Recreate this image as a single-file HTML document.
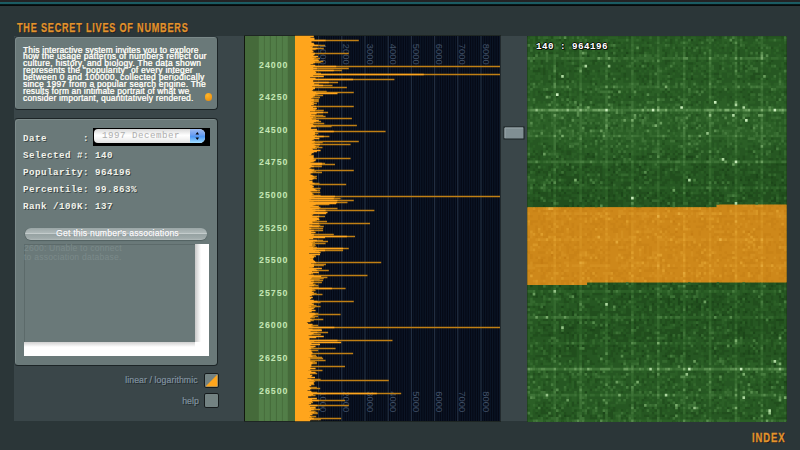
<!DOCTYPE html>
<html><head><meta charset="utf-8"><title>The Secret Lives of Numbers</title>
<style>
html,body{margin:0;padding:0}
body{width:800px;height:450px;overflow:hidden;background:#2b3638;position:relative;font-family:"Liberation Sans",sans-serif}
.abs{position:absolute}
#top1{left:0;top:0;width:800px;height:6.2px;background:linear-gradient(#222325 0,#242325 1.6px,#1d5e65 2.1px,#19585f 4px,#03090a 4.6px,#000 5.2px,#0a0f10 5.7px,#2b3638 6.2px)}
#main{left:14px;top:36px;width:772px;height:385px;background:#3a4649}
.title{color:#e3932c;font-weight:bold;font-size:13.2px;letter-spacing:1.15px;white-space:nowrap;transform-origin:0 0;text-shadow:1px 1px 0 #191c1d;line-height:1}
#title{left:17px;top:20.8px;transform:scaleX(.69);-webkit-text-stroke:.25px #e3932c}
#index{left:752px;top:432px;font-size:12.2px;transform:scaleX(.775);-webkit-text-stroke:.3px #e3932c}
.panel{background:#6a7979;border:1px solid #1c2426;border-left-color:#2c373a;border-radius:4px;box-sizing:border-box;box-shadow:inset 1px 1px 0 #7b8989}
#p1{left:14px;top:36px;width:204px;height:74px;border-top-color:#2c373a}
#p2{left:14px;top:118px;width:204px;height:248px}
#intro{left:23px;top:46.6px;width:195px;color:#fff;font-size:8.3px;line-height:6.86px;letter-spacing:.25px;white-space:nowrap;-webkit-text-stroke:.2px #fff;text-shadow:.4px .4px .3px #c8c4a8}
#dot{left:204.5px;top:93.2px;width:7.5px;height:7.5px;border-radius:50%;background:radial-gradient(circle at 35% 30%,#ffb62a,#f29a14 60%,#d98410)}
.mono{font-family:"Liberation Mono",monospace;font-weight:bold;font-size:9.2px;letter-spacing:.48px;color:#f2f2ea;white-space:pre;line-height:10px;text-shadow:1px 1px 0 #3c4848}
#sel{left:93px;top:128px;width:117px;height:17.5px;background:#000}
#selin{left:1px;top:1px;width:111px;height:14px;border-radius:4px 5.5px 5.5px 4px;background:linear-gradient(#d8d8d8,#fff 45%,#f4f4f4 70%,#e0e0e0);overflow:hidden}
#selcap{right:0;top:0;width:15px;height:14px;background:linear-gradient(#a0bdf0,#6f9ff0 40%,#4f98f4 55%,#8fd0ff 90%,#a8e0ff)}
#seltx{left:8px;top:2px;font-family:"Liberation Mono",monospace;font-size:9.2px;letter-spacing:.48px;line-height:10px;color:#adadad;white-space:pre}
#btn{left:25px;top:227.5px;width:182px;height:12px;border-radius:6px;background:linear-gradient(#9aa6a6,#aeb8b8 38%,#c4cccc 46%,#97a3a3 54%,#a0abab 85%,#b2bcbc);box-shadow:0 .8px 1px #4c5a5a,-.5px 0 .5px #556363;text-align:center;color:#fff;font-size:8.6px;line-height:11.5px;letter-spacing:.2px;-webkit-text-stroke:.25px #fff;text-shadow:0 0 1px #667;padding-left:3px;box-sizing:border-box}
#ta{left:24px;top:244px;width:185px;height:112px;background:#fff;box-sizing:border-box}
#tain{left:0;top:0;width:171px;height:98px;background:#6a7979;box-shadow:inset 1px 1px 0 #5c6a6a;color:#7b8a8a;font-size:8.6px;line-height:9px;letter-spacing:.2px;white-space:pre;overflow:hidden}
#tash1{left:171px;top:0;width:6px;height:98px;background:linear-gradient(90deg,#c8c8c8,#fff)}
#tash2{left:0;top:98px;width:171px;height:5px;background:linear-gradient(#d0d0d0,#fff)}
.lbl{color:#8293a0;-webkit-text-stroke:.2px #8293a0;font-size:8.7px;line-height:10px;white-space:nowrap;text-align:right;width:120px;text-shadow:1px 1px 0 #20282a;letter-spacing:.1px}
.cb{width:15px;height:15px;box-sizing:border-box;border:1.3px solid #171c1e;background:#738282;border-radius:2px;overflow:hidden}
svg{position:absolute;left:0;top:0}
.yl{font-family:"Liberation Sans",sans-serif;font-weight:bold;font-size:8.8px;letter-spacing:1.0px;fill:#c4e6b4}
.gl{font-family:"Liberation Sans",sans-serif;font-size:9.3px;letter-spacing:0.05px;fill:#415168}
</style></head><body>
<div class="abs" id="top1"></div>
<div class="abs" id="main"></div>
<div class="abs title" id="title">THE SECRET LIVES OF NUMBERS</div>
<div class="abs panel" id="p1"></div>
<div class="abs" id="intro"><div style="letter-spacing:0.238px">This interactive system invites you to explore</div><div style="letter-spacing:0.320px">how the usage patterns of numbers reflect our</div><div style="letter-spacing:0.331px">culture, history, and biology. The data shown</div><div style="letter-spacing:0.299px">represents the "popularity" of every integer</div><div style="letter-spacing:0.364px">between 0 and 100000, collected periodically</div><div style="letter-spacing:0.315px">since 1997 from a popular search engine. The</div><div style="letter-spacing:0.228px">results form an intimate portrait of what we</div><div style="letter-spacing:0.259px">consider important, quantitatively rendered.</div></div>
<div class="abs" id="dot"></div>
<div class="abs panel" id="p2"></div>
<div class="abs mono" style="left:23px;top:134px">Date      :</div>
<div class="abs mono" style="left:23px;top:151px">Selected #: 140</div>
<div class="abs mono" style="left:23px;top:168px">Popularity: 964196</div>
<div class="abs mono" style="left:23px;top:185px">Percentile: 99.863%</div>
<div class="abs mono" style="left:23px;top:202px">Rank /100K: 137</div>
<div class="abs" id="sel"><div class="abs" id="selin"><div class="abs" id="seltx">1997 December</div><div class="abs" id="selcap"></div>
<svg width="15" height="14" style="left:96px;top:0"><path d="M7.3 3L9.1 5.6H5.5zM7.3 11L9.1 8.4H5.5z" fill="#05050c"/></svg></div></div>
<div class="abs" id="btn">Get this number's associations</div>
<div class="abs" id="ta"><div class="abs" id="tain">2600: Unable to connect
to association database.</div><div class="abs" id="tash1"></div><div class="abs" id="tash2"></div></div>
<div class="abs lbl" style="left:77.7px;top:375px">linear / logarithmic</div>
<div class="abs lbl" style="left:79px;top:395.5px">help</div>
<div class="abs cb" style="left:204px;top:373px"><svg width="13" height="13"><path d="M12.4 0.5V12.4H0.5z" fill="#ffa51c"/></svg></div>
<div class="abs cb" style="left:204px;top:393.3px"></div>

<svg width="800" height="450" viewBox="0 0 800 450">
<rect x="244" y="35.5" width="257" height="386" fill="#12170f"/>
<rect x="245" y="36" width="50" height="385" fill="#456a3a"/>
<path d="M261.35 36V421M267.3 36V421M273.4 36V421M279.4 36V421M285.25 36V421" stroke="#527e48" stroke-width="5.1" fill="none"/>
<rect x="295" y="36" width="205.5" height="385" fill="#050915"/>
<path d="M297.72 36V421M300.04 36V421M302.36 36V421M304.68 36V421M307.00 36V421M309.32 36V421M311.64 36V421M313.96 36V421M316.28 36V421M320.92 36V421M323.24 36V421M325.56 36V421M327.88 36V421M330.20 36V421M332.52 36V421M334.84 36V421M337.16 36V421M339.48 36V421M344.12 36V421M346.44 36V421M348.76 36V421M351.08 36V421M353.40 36V421M355.72 36V421M358.04 36V421M360.36 36V421M362.68 36V421M367.32 36V421M369.64 36V421M371.96 36V421M374.28 36V421M376.60 36V421M378.92 36V421M381.24 36V421M383.56 36V421M385.88 36V421M390.52 36V421M392.84 36V421M395.16 36V421M397.48 36V421M399.80 36V421M402.12 36V421M404.44 36V421M406.76 36V421M409.08 36V421M413.72 36V421M416.04 36V421M418.36 36V421M420.68 36V421M423.00 36V421M425.32 36V421M427.64 36V421M429.96 36V421M432.28 36V421M436.92 36V421M439.24 36V421M441.56 36V421M443.88 36V421M446.20 36V421M448.52 36V421M450.84 36V421M453.16 36V421M455.48 36V421M460.12 36V421M462.44 36V421M464.76 36V421M467.08 36V421M469.40 36V421M471.72 36V421M474.04 36V421M476.36 36V421M478.68 36V421M483.32 36V421M485.64 36V421M487.96 36V421M490.28 36V421M492.60 36V421M494.92 36V421M497.24 36V421M499.56 36V421" stroke="#0c1627" stroke-width="1.1" fill="none"/>
<path d="M318.60 36V421M341.80 36V421M365.00 36V421M388.20 36V421M411.40 36V421M434.60 36V421M457.80 36V421M481.00 36V421" stroke="#212e41" stroke-width="1.3" fill="none"/>
<text transform="translate(320.2 43.8) rotate(90)" class="gl">1000</text>
<text transform="translate(320.2 391.3) rotate(90)" class="gl">1000</text>
<text transform="translate(343.4 43.8) rotate(90)" class="gl">2000</text>
<text transform="translate(343.4 391.3) rotate(90)" class="gl">2000</text>
<text transform="translate(366.6 43.8) rotate(90)" class="gl">3000</text>
<text transform="translate(366.6 391.3) rotate(90)" class="gl">3000</text>
<text transform="translate(389.8 43.8) rotate(90)" class="gl">4000</text>
<text transform="translate(389.8 391.3) rotate(90)" class="gl">4000</text>
<text transform="translate(413.0 43.8) rotate(90)" class="gl">5000</text>
<text transform="translate(413.0 391.3) rotate(90)" class="gl">5000</text>
<text transform="translate(436.2 43.8) rotate(90)" class="gl">6000</text>
<text transform="translate(436.2 391.3) rotate(90)" class="gl">6000</text>
<text transform="translate(459.4 43.8) rotate(90)" class="gl">7000</text>
<text transform="translate(459.4 391.3) rotate(90)" class="gl">7000</text>
<text transform="translate(482.6 43.8) rotate(90)" class="gl">8000</text>
<text transform="translate(482.6 391.3) rotate(90)" class="gl">8000</text>
<path d="M295 40.5H358.8M295 45.5H325M295 46.5H313M295 48.5H323.8M295 49.5H315.7M295 52.5H312.6M295 53.5H348.8M295 57.5H316.2M295 58.5H320M295 59.5H317.9M295 61.5H323.3M295 62.5H320.6M295 66.5H500M295 68.5H348.8M295 70.5H341.9M295 73.5H321M295 74.5H500M295 79.5H394.4M295 82.5H338.1M295 84.5H318.8M295 85.5H332.5M295 87.5H346.9M295 91.5H326.7M295 92.5H353.8M295 94.5H317.7M295 95.5H323.1M295 96.5H314.4M295 97.5H320M295 99.5H318.8M295 100.5H318.8M295 101.5H318.8M295 103.5H316.9M295 106.5H353.8M295 109.5H315.9M295 110.5H323.8M295 112.5H328.1M295 113.5H317.1M295 115.5H323.2M295 116.5H325.6M295 117.5H316.1M295 118.5H351.9M295 119.5H316.1M295 121.5H321.1M295 123.5H324.3M295 125.5H356.9M295 126.5H331.6M295 130.5H317.5M295 131.5H385.6M295 133.5H318.1M295 135.5H316.9M295 136.5H329.4M295 139.5H314.2M295 141.5H358.8M295 142.5H322.7M295 143.5H315.2M295 144.5H350.6M295 145.5H314.9M295 146.5H318.9M295 147.5H322.5M295 148.5H317M295 155.5H313.8M295 158.5H350.6M295 159.5H316.1M295 161.5H314.2M295 163.5H325M295 164.5H335M295 166.5H321.9M295 169.5H314.4M295 170.5H353.8M295 171.5H316.1M295 172.5H322M295 176.5H316.9M295 177.5H315.7M295 178.5H316.9M295 183.5H319.5M295 184.5H346.2M295 188.5H320.6M295 190.5H320M295 192.5H320.3M295 194.5H313.8M295 195.5H320.6M295 196.5H500M295 197.5H314.5M295 198.5H340.6M295 199.5H311.2M295 200.5H353.8M295 201.5H313.6M295 202.5H347.5M295 204.5H329.4M295 205.5H313.6M295 207.5H320.5M295 208.5H337.5M295 209.5H315.5M295 210.5H374.4M295 211.5H315.4M295 214.5H313.3M295 216.5H325M295 217.5H316.9M295 220.5H316.9M295 221.5H327M295 223.5H370M295 225.5H320.3M295 226.5H323.8M295 228.5H323.1M295 230.5H323.1M295 234.5H333.8M295 235.5H314M295 236.5H355M295 240.5H323.1M295 241.5H328M295 242.5H315M295 243.5H325.6M295 244.5H315.1M295 245.5H315.7M295 246.5H314.4M295 247.5H317.1M295 248.5H348.8M295 249.5H316.4M295 250.5H343.1M295 251.5H318.9M295 255.5H315.6M295 256.5H316M295 258.5H313.1M295 262.5H381.2M295 264.5H326M295 265.5H323.8M295 267.5H312.6M295 269.5H316.2M295 270.5H328.8M295 273.5H313.1M295 275.5H367.5M295 277.5H327.4M295 278.5H323.8M295 279.5H319.7M295 280.5H323.1M295 282.5H321.9M295 284.5H315.6M295 285.5H318.4M295 287.5H318.8M295 288.5H345.6M295 289.5H314.5M295 290.5H315.6M295 293.5H316.6M295 294.5H322.5M295 301.5H353.8M295 302.5H320.6M295 305.5H316.5M295 306.5H320.6M295 307.5H315.2M295 313.5H318.3M295 314.5H340.6M295 315.5H314.2M295 316.5H318.1M295 317.5H314.9M295 319.5H323.3M295 320.5H313.8M295 325.5H318.1M295 326.5H313.5M295 327.5H500M295 329.5H321.6M295 332.5H328.1M295 334.5H320.8M295 340.5H392.5M295 341.5H314.2M295 347.5H313.6M295 348.5H335.6M295 350.5H318.1M295 353.5H353.1M295 355.5H316M295 356.5H316.9M295 357.5H322.1M295 358.5H323.1M295 360.5H325.6M295 361.5H315.1M295 362.5H316.9M295 363.5H316.9M295 366.5H345M295 370.5H322.5M295 373.5H317.2M295 379.5H320.6M295 380.5H388.8M295 381.5H315.2M295 384.5H314.4M295 387.5H316.9M295 388.5H320.2M295 392.5H317.3M295 393.5H401.2M295 395.5H315.6M295 400.5H345M295 402.5H313.1M295 405.5H348.8M295 408.5H315.7M295 409.5H320M295 411.5H315.6M295 412.5H317.5M295 413.5H317.8M295 416.5H316.2M295 417.5H312M295 418.5H341.2M295 419.5H320.9" stroke="#c07f14" stroke-width="1.5" fill="none"/>
<path d="M295 36.5H313.8M295 37.5H310.5M295 38.5H314.5M295 39.5H314.5M295 40.5H325.6M295 41.5H311.5M295 42.5H311.5M295 43.5H313.8M295 44.5H314.4M295 45.5H318.1M295 46.5H310.4M295 47.5H312.4M295 48.5H317.5M295 49.5H312.4M295 50.5H312.5M295 51.5H313.5M295 52.5H311.4M295 53.5H315M295 54.5H314.4M295 55.5H313.4M295 56.5H318.1M295 57.5H312.4M295 58.5H314.4M295 59.5H313.4M295 60.5H318.8M295 61.5H314.3M295 62.5H315M295 63.5H313.3M295 64.5H310.6M295 65.5H315.3M295 66.5H336.2M295 67.5H313.3M295 68.5H316.9M295 69.5H313.3M295 70.5H333.8M295 71.5H315.3M295 72.5H316.2M295 73.5H315.3M295 74.5H423.8M295 75.5H313.2M295 76.5H323.8M295 77.5H310.2M295 78.5H315.6M295 79.5H353.1M295 80.5H313.2M295 81.5H313.2M295 82.5H328.8M295 83.5H314.2M295 84.5H313.8M295 85.5H323.1M295 86.5H312.2M295 87.5H315M295 88.5H315M295 89.5H313.2M295 90.5H311.9M295 91.5H313.1M295 92.5H316.2M295 93.5H337.5M295 94.5H315.1M295 95.5H315M295 96.5H313.1M295 97.5H312.5M295 98.5H311.1M295 99.5H313.8M295 100.5H313.8M295 101.5H311.1M295 102.5H313.8M295 103.5H312.1M295 104.5H313.8M295 105.5H311.1M295 106.5H316.2M295 107.5H313M295 108.5H316.9M295 109.5H313M295 110.5H315M295 111.5H310M295 112.5H323.1M295 113.5H316M295 114.5H311.2M295 115.5H315M295 116.5H310M295 117.5H313M295 118.5H311.2M295 119.5H312M295 120.5H318.8M295 121.5H315.9M295 122.5H313.8M295 123.5H309.9M295 124.5H312.9M295 125.5H313.8M295 126.5H315.9M295 127.5H311.2M295 128.5H310.9M295 129.5H316.9M295 130.5H312.9M295 131.5H333.8M295 132.5H314.9M295 133.5H315M295 134.5H314.9M295 135.5H312.9M295 136.5H323.8M295 137.5H314.8M295 138.5H319.4M295 139.5H312.8M295 140.5H311.8M295 141.5H315M295 142.5H313.8M295 143.5H311.8M295 144.5H320M295 145.5H313.8M295 146.5H315.8M295 147.5H315M295 148.5H311.8M295 149.5H312.8M295 150.5H320.6M295 151.5H316.9M295 152.5H313.7M295 153.5H311.7M295 154.5H311.2M295 155.5H309.4M295 156.5H313.7M295 157.5H313.7M295 158.5H313.8M295 159.5H312.7M295 160.5H315.6M295 161.5H312.7M295 162.5H310.6M295 163.5H321.9M295 164.5H321.9M295 165.5H311.7M295 166.5H313.8M295 167.5H310.6M295 168.5H309.4M295 169.5H311.6M295 170.5H313.8M295 171.5H311.6M295 172.5H312.6M295 173.5H310.6M295 174.5H310.6M295 175.5H312.6M295 176.5H313.8M295 177.5H311.6M295 178.5H313.8M295 179.5H312.6M295 180.5H309.4M295 181.5H312.5M295 182.5H312.6M295 183.5H314.5M295 184.5H310M295 185.5H312.5M295 186.5H313.8M295 187.5H312.5M295 188.5H313.8M295 189.5H315.5M295 190.5H316.9M295 191.5H310.5M295 192.5H311.5M295 193.5H312.5M295 194.5H312.5M295 195.5H311.5M295 196.5H335M295 197.5H311.5M295 198.5H333.8M295 199.5H309.4M295 200.5H337.5M295 201.5H309.4M295 202.5H336.9M295 203.5H336.2M295 204.5H315.6M295 205.5H312.4M295 206.5H318.8M295 207.5H310.4M295 208.5H319.4M295 209.5H312.4M295 210.5H325.6M295 211.5H313.4M295 212.5H327.5M295 213.5H326.2M295 214.5H311.3M295 215.5H312.3M295 216.5H319.4M295 217.5H312.3M295 218.5H318.8M295 219.5H319.4M295 220.5H315.3M295 221.5H312.3M295 222.5H312.5M295 223.5H318.8M295 224.5H309.3M295 225.5H312.3M295 226.5H318.8M295 227.5H309.3M295 228.5H311.2M295 229.5H309.2M295 230.5H313.8M295 231.5H311.2M295 232.5H315.6M295 233.5H311.2M295 234.5H313.8M295 235.5H312.2M295 236.5H346.9M295 237.5H325M295 238.5H313.2M295 239.5H309.2M295 240.5H316.9M295 241.5H313.2M295 242.5H311.2M295 243.5H312.5M295 244.5H312.1M295 245.5H312.1M295 246.5H309.4M295 247.5H313.1M295 248.5H343.1M295 249.5H313.1M295 250.5H325M295 251.5H315.1M295 252.5H320.6M295 253.5H309.1M295 254.5H320M295 255.5H312.1M295 256.5H314.1M295 257.5H313.8M295 258.5H310.1M295 259.5H313.1M295 260.5H313.8M295 261.5H315M295 262.5H316.2M295 263.5H311M295 264.5H314M295 265.5H313.8M295 266.5H314M295 267.5H309M295 268.5H321.9M295 269.5H314M295 270.5H317.5M295 271.5H312M295 272.5H318.8M295 273.5H311M295 274.5H308.8M295 275.5H313.8M295 276.5H321.2M295 277.5H311.9M295 278.5H311.2M295 279.5H309.9M295 280.5H313.8M295 281.5H310.9M295 282.5H313.8M295 283.5H312.9M295 284.5H309.4M295 285.5H313.9M295 286.5H309.4M295 287.5H311.9M295 288.5H331.9M295 289.5H311.9M295 290.5H312.5M295 291.5H311.8M295 292.5H313.8M295 293.5H311.8M295 294.5H313.8M295 295.5H311.8M295 296.5H309.8M295 297.5H312.8M295 298.5H311.2M295 299.5H310M295 300.5H313.8M295 301.5H317.5M295 302.5H313.8M295 303.5H311.8M295 304.5H313.8M295 305.5H308.8M295 306.5H311.2M295 307.5H308.7M295 308.5H313.8M295 309.5H311.7M295 310.5H315.6M295 311.5H311.7M295 312.5H309.4M295 313.5H314.7M295 314.5H315.6M295 315.5H312.7M295 316.5H312.5M295 317.5H310.7M295 318.5H310M295 319.5H311.7M295 320.5H310M295 321.5H310.6M295 322.5H306.9M295 323.5H308.1M295 324.5H312.6M295 325.5H311.2M295 326.5H311.6M295 327.5H334.4M295 328.5H308.6M295 329.5H312.6M295 330.5H321.9M295 331.5H310.6M295 332.5H317.5M295 333.5H313.6M295 334.5H311.6M295 335.5H308.6M295 336.5H323.8M295 337.5H316.2M295 338.5H309.5M295 339.5H309.4M295 340.5H337.5M295 341.5H310.5M295 342.5H341.2M295 343.5H311.5M295 344.5H320M295 345.5H310.5M295 346.5H315.6M295 347.5H310.5M295 348.5H311.2M295 349.5H309.5M295 350.5H311.2M295 351.5H311.5M295 352.5H312.4M295 353.5H312.5M295 354.5H311.4M295 355.5H311.4M295 356.5H312.5M295 357.5H308.4M295 358.5H310M295 359.5H310.4M295 360.5H310M295 361.5H310.4M295 362.5H312.5M295 363.5H312.5M295 364.5H311.4M295 365.5H311.4M295 366.5H311.2M295 367.5H310.4M295 368.5H315.6M295 369.5H310.3M295 370.5H308.1M295 371.5H311.3M295 372.5H315.6M295 373.5H310.3M295 374.5H310M295 375.5H312.3M295 376.5H311.3M295 377.5H315M295 378.5H307.5M295 379.5H311.3M295 380.5H313.8M295 381.5H309.3M295 382.5H313.8M295 383.5H313.8M295 384.5H310.6M295 385.5H311.2M295 386.5H309.2M295 387.5H310M295 388.5H311.2M295 389.5H310.2M295 390.5H307.5M295 391.5H311.2M295 392.5H312.2M295 393.5H376.9M295 394.5H313.2M295 395.5H311.2M295 396.5H308.2M295 397.5H308.2M295 398.5H316.9M295 399.5H312.1M295 400.5H318.8M295 401.5H312.1M295 402.5H309.4M295 403.5H311.1M295 404.5H308.8M295 405.5H317.5M295 406.5H310.1M295 407.5H315.6M295 408.5H311.1M295 409.5H313.8M295 410.5H311.1M295 411.5H309.4M295 412.5H314.1M295 413.5H311.1M295 414.5H312.5M295 415.5H310M295 416.5H311.2M295 417.5H309M295 418.5H313.8M295 419.5H311M295 420.5H310" stroke="#ffa51c" stroke-width="1.5" fill="none"/>
<text x="259" y="67.6" class="yl">24000</text>
<text x="259" y="100.2" class="yl">24250</text>
<text x="259" y="132.8" class="yl">24500</text>
<text x="259" y="165.4" class="yl">24750</text>
<text x="259" y="198.0" class="yl">25000</text>
<text x="259" y="230.6" class="yl">25250</text>
<text x="259" y="263.2" class="yl">25500</text>
<text x="259" y="295.8" class="yl">25750</text>
<text x="259" y="328.4" class="yl">26000</text>
<text x="259" y="361.0" class="yl">26250</text>
<text x="259" y="393.6" class="yl">26500</text>
<rect x="500.5" y="36" width="26" height="385" fill="#3a4649"/>
<rect x="504" y="127" width="20" height="12" fill="#808f93" stroke="#182022" stroke-width="1"/>
<path d="M505 138V128H523" stroke="#9aa8ab" stroke-width="1" fill="none"/>
</svg>
<svg width="260" height="386" viewBox="-0.2 -0.1 100.4 149" preserveAspectRatio="none" style="left:526.5px;top:35.8px;width:260px;height:386px">
<rect x="-0.2" y="-0.1" width="100.4" height="149" fill="#141a12"/>
<rect x="0" y="0" width="100" height="148.65" fill="#255c20"/>
<path d="M73 65H100V66H100V95H23V96H0V66H73z" fill="#cc861a"/>
<g stroke-width="1.05" fill="none"><path d="M63 1.5h1M38 6.5h1M23 7.5h1M63 16.5h1M39 23.5h1M23 45.5h1M39 45.5h1M25 46.5h1M44 46.5h1M61 46.5h1M62 46.5h1M63 46.5h1M33 47.5h1M56 47.5h1M69 47.5h1M16 49.5h1M36 49.5h1M45 49.5h1M77 49.5h1M96 49.5h1M98 49.5h1M0 50.5h1M22 50.5h1M43 50.5h1M65 50.5h1M68 50.5h1M16 51.5h1M31 51.5h1M52 51.5h1M75 51.5h1M77 51.5h1M4 52.5h1M33 52.5h1M12 53.5h1M13 53.5h1M44 53.5h1M45 53.5h1M69 53.5h1M76 53.5h1M88 53.5h1M62 54.5h1M88 54.5h1M91 54.5h1M94 54.5h1M98 54.5h1M19 55.5h1M41 55.5h1M61 55.5h1M82 55.5h1M85 55.5h1M9 56.5h1M16 56.5h1M21 56.5h1M32 56.5h1M73 56.5h1M79 56.5h1M94 56.5h1M98 56.5h1M2 57.5h1M15 57.5h1M25 57.5h1M63 57.5h1M83 57.5h1M95 57.5h1M9 59.5h1M13 59.5h1M26 59.5h1M31 59.5h1M69 59.5h1M73 59.5h1M86 59.5h1M94 59.5h1M97 59.5h1M4 60.5h1M14 60.5h1M19 60.5h1M36 60.5h1M46 60.5h1M51 60.5h1M61 60.5h1M12 61.5h1M23 61.5h1M31 61.5h1M33 61.5h1M36 61.5h1M43 61.5h1M49 61.5h1M57 61.5h1M61 61.5h1M62 61.5h1M71 61.5h1M74 61.5h1M75 61.5h1M83 61.5h1M85 61.5h1M86 61.5h1M98 61.5h1M21 62.5h1M29 62.5h1M46 62.5h1M54 62.5h1M95 62.5h1M2 63.5h1M4 63.5h1M22 63.5h1M25 63.5h1M27 63.5h1M32 63.5h1M33 63.5h1M47 63.5h1M52 63.5h1M69 63.5h1M74 63.5h1M81 63.5h1M82 63.5h1M94 63.5h1M95 63.5h1M9 64.5h1M17 64.5h1M51 64.5h1M59 64.5h1M62 64.5h1M79 64.5h1M97 64.5h1M6 65.5h1M14 65.5h1M15 65.5h1M17 65.5h1M19 65.5h1M24 65.5h1M54 65.5h1M68 65.5h1M31 95.5h1M42 95.5h1M43 95.5h1M46 95.5h1M55 95.5h1M71 95.5h1M72 95.5h1M96 95.5h1M1 96.5h1M12 96.5h1M33 96.5h1M46 96.5h1M63 96.5h1M65 96.5h1M72 96.5h1M81 96.5h1M94 96.5h1M16 97.5h1M31 97.5h1M33 97.5h1M48 97.5h1M56 97.5h1M64 97.5h1M93 97.5h1M18 99.5h1M32 99.5h1M37 99.5h1M47 99.5h1M48 99.5h1M84 99.5h1M3 100.5h1M18 100.5h1M23 100.5h1M36 100.5h1M39 100.5h1M69 100.5h1M74 100.5h1M97 100.5h1M39 101.5h1M51 101.5h1M54 101.5h1M56 101.5h1M58 101.5h1M63 101.5h1M65 101.5h1M82 101.5h1M84 101.5h1M98 101.5h1M54 102.5h1M58 102.5h1M59 102.5h1M65 102.5h1M69 102.5h1M71 102.5h1M85 102.5h1M92 102.5h1M48 103.5h1M54 103.5h1M58 103.5h1M63 103.5h1M66 103.5h1M73 103.5h1M75 103.5h1M6 104.5h1M13 104.5h1M35 104.5h1M42 104.5h1M45 104.5h1M61 104.5h1M65 104.5h1M66 104.5h1M69 104.5h1M78 104.5h1M61 105.5h1M66 105.5h1M71 105.5h1M77 105.5h1M17 106.5h1M81 106.5h1M84 106.5h1M7 107.5h1M17 107.5h1M55 107.5h1M72 107.5h1M75 107.5h1M22 109.5h1M24 109.5h1M43 109.5h1M46 109.5h1M56 109.5h1M65 109.5h1M72 109.5h1M91 109.5h1M93 109.5h1M96 109.5h1M97 109.5h1M98 109.5h1M19 110.5h1M39 110.5h1M41 110.5h1M56 110.5h1M69 110.5h1M78 110.5h1M82 110.5h1M84 110.5h1M8 111.5h1M14 111.5h1M31 111.5h1M52 111.5h1M59 111.5h1M65 111.5h1M6 112.5h1M16 112.5h1M17 112.5h1M28 112.5h1M41 112.5h1M82 112.5h1M95 112.5h1M24 113.5h1M25 113.5h1M81 113.5h1M82 113.5h1M98 113.5h1M13 114.5h1M15 114.5h1M31 114.5h1M47 114.5h1M59 114.5h1M81 114.5h1M83 114.5h1M87 114.5h1M95 114.5h1M8 115.5h1M17 115.5h1M32 115.5h1M37 115.5h1M55 115.5h1M66 115.5h1M77 115.5h1M83 115.5h1M96 115.5h1M98 115.5h1M41 116.5h1M59 116.5h1M83 116.5h1M31 117.5h1M43 117.5h1M52 117.5h1M55 117.5h1M9 119.5h1M15 119.5h1M17 119.5h1M19 119.5h1M21 119.5h1M33 119.5h1M75 119.5h1M78 119.5h1M83 119.5h1M87 119.5h1M91 119.5h1M16 120.5h1M35 120.5h1M71 120.5h1M91 120.5h1M12 121.5h1M37 121.5h1M44 121.5h1M72 121.5h1M85 121.5h1M89 121.5h1M59 122.5h1M72 122.5h1M83 122.5h1M85 122.5h1M87 122.5h1M95 122.5h1M98 122.5h1M11 123.5h1M44 123.5h1M53 123.5h1M62 123.5h1M54 124.5h1M95 126.5h1M99 133.5h1M93 134.5h1M71 136.5h1M72 136.5h1M74 136.5h1M22 137.5h1M29 145.5h1M4 146.5h1M14 146.5h1M52 146.5h1M86 147.5h1" stroke="#1c4619"/>
<path d="M3 0.5h1M9 0.5h1M39 0.5h1M53 0.5h1M59 0.5h1M68 0.5h1M74 0.5h1M83 0.5h1M87 0.5h1M92 0.5h1M98 0.5h1M3 1.5h1M7 1.5h1M12 1.5h1M14 1.5h1M27 1.5h1M44 1.5h1M55 1.5h1M66 1.5h1M72 1.5h1M83 1.5h1M13 2.5h1M19 2.5h1M28 2.5h1M31 2.5h1M33 2.5h1M35 2.5h1M46 2.5h1M55 2.5h1M78 2.5h1M16 3.5h1M65 3.5h1M81 3.5h1M2 4.5h1M13 4.5h1M32 4.5h1M34 4.5h1M37 4.5h1M44 4.5h1M46 4.5h1M57 4.5h1M61 4.5h1M63 4.5h1M75 4.5h1M84 4.5h1M89 4.5h1M94 4.5h1M14 5.5h1M18 5.5h1M35 5.5h1M44 5.5h1M52 5.5h1M66 5.5h1M79 5.5h1M81 5.5h1M98 5.5h1M4 6.5h1M8 6.5h1M9 6.5h1M27 6.5h1M32 6.5h1M41 6.5h1M43 6.5h1M44 6.5h1M53 6.5h1M61 6.5h1M66 6.5h1M78 6.5h1M81 6.5h1M89 6.5h1M2 7.5h1M34 7.5h1M37 7.5h1M53 7.5h1M61 7.5h1M65 7.5h1M81 7.5h1M85 7.5h1M99 7.5h1M2 9.5h1M5 9.5h1M16 9.5h1M25 9.5h1M26 9.5h1M53 9.5h1M54 9.5h1M59 9.5h1M65 9.5h1M69 9.5h1M88 9.5h1M94 9.5h1M5 10.5h1M11 10.5h1M13 10.5h1M25 10.5h1M29 10.5h1M44 10.5h1M46 10.5h1M53 10.5h1M62 10.5h1M63 10.5h1M81 10.5h1M93 10.5h1M99 10.5h1M11 11.5h1M18 11.5h1M19 11.5h1M23 11.5h1M36 11.5h1M41 11.5h1M43 11.5h1M46 11.5h1M48 11.5h1M65 11.5h1M74 11.5h1M83 11.5h1M4 12.5h1M6 12.5h1M22 12.5h1M34 12.5h1M45 12.5h1M48 12.5h1M62 12.5h1M74 12.5h1M83 12.5h1M84 12.5h1M97 12.5h1M2 13.5h1M3 13.5h1M4 13.5h1M6 13.5h1M16 13.5h1M18 13.5h1M22 13.5h1M23 13.5h1M27 13.5h1M35 13.5h1M41 13.5h1M42 13.5h1M56 13.5h1M63 13.5h1M68 13.5h1M81 13.5h1M6 14.5h1M11 14.5h1M13 14.5h1M23 14.5h1M31 14.5h1M37 14.5h1M54 14.5h1M69 14.5h1M72 14.5h1M73 14.5h1M87 14.5h1M88 14.5h1M89 14.5h1M91 14.5h1M9 15.5h1M11 15.5h1M22 15.5h1M31 15.5h1M37 15.5h1M43 15.5h1M45 15.5h1M46 15.5h1M59 15.5h1M63 15.5h1M86 15.5h1M87 15.5h1M11 16.5h1M12 16.5h1M13 16.5h1M15 16.5h1M35 16.5h1M42 16.5h1M44 16.5h1M46 16.5h1M48 16.5h1M55 16.5h1M61 16.5h1M68 16.5h1M69 16.5h1M73 16.5h1M74 16.5h1M81 16.5h1M86 16.5h1M87 16.5h1M89 16.5h1M92 16.5h1M8 17.5h1M14 17.5h1M16 17.5h1M24 17.5h1M44 17.5h1M67 17.5h1M83 17.5h1M26 18.5h1M45 18.5h1M48 18.5h1M24 20.5h1M32 20.5h1M53 20.5h1M66 20.5h1M71 20.5h1M77 20.5h1M83 20.5h1M4 21.5h1M7 21.5h1M8 21.5h1M9 21.5h1M15 21.5h1M21 21.5h1M34 21.5h1M52 21.5h1M54 21.5h1M74 21.5h1M82 21.5h1M86 21.5h1M93 21.5h1M99 21.5h1M5 22.5h1M8 22.5h1M12 22.5h1M22 22.5h1M28 22.5h1M32 22.5h1M44 22.5h1M53 22.5h1M64 22.5h1M71 22.5h1M85 22.5h1M11 23.5h1M15 23.5h1M34 23.5h1M53 23.5h1M55 23.5h1M63 23.5h1M78 23.5h1M83 23.5h1M17 24.5h1M22 24.5h1M57 24.5h1M85 24.5h1M96 24.5h1M33 25.5h1M65 25.5h1M69 25.5h1M91 25.5h1M13 26.5h1M19 26.5h1M25 26.5h1M35 26.5h1M38 26.5h1M59 26.5h1M63 26.5h1M17 27.5h1M46 29.5h1M65 30.5h1M44 31.5h1M85 31.5h1M34 34.5h1M65 34.5h1M82 34.5h1M26 35.5h1M31 35.5h1M63 35.5h1M86 35.5h1M26 39.5h1M53 39.5h1M66 39.5h1M91 39.5h1M94 39.5h1M57 40.5h1M74 40.5h1M6 41.5h1M21 41.5h1M52 41.5h1M8 42.5h1M11 42.5h1M76 42.5h1M87 42.5h1M95 42.5h1M7 43.5h1M11 43.5h1M12 43.5h1M32 43.5h1M54 43.5h1M79 43.5h1M89 43.5h1M95 43.5h1M2 44.5h1M5 44.5h1M13 44.5h1M15 44.5h1M16 44.5h1M32 44.5h1M51 44.5h1M57 44.5h1M64 44.5h1M65 44.5h1M85 44.5h1M86 44.5h1M94 44.5h1M97 44.5h1M3 45.5h1M5 45.5h1M15 45.5h1M16 45.5h1M25 45.5h1M36 45.5h1M46 45.5h1M47 45.5h1M48 45.5h1M53 45.5h1M54 45.5h1M56 45.5h1M58 45.5h1M59 45.5h1M71 45.5h1M74 45.5h1M77 45.5h1M87 45.5h1M91 45.5h1M97 45.5h1M1 46.5h1M2 46.5h1M4 46.5h1M12 46.5h1M22 46.5h1M23 46.5h1M24 46.5h1M35 46.5h1M39 46.5h1M42 46.5h1M45 46.5h1M52 46.5h1M53 46.5h1M57 46.5h1M64 46.5h1M69 46.5h1M83 46.5h1M0 47.5h1M4 47.5h1M9 47.5h1M11 47.5h1M14 47.5h1M22 47.5h1M29 47.5h1M31 47.5h1M34 47.5h1M42 47.5h1M43 47.5h1M44 47.5h1M47 47.5h1M55 47.5h1M57 47.5h1M61 47.5h1M63 47.5h1M76 47.5h1M81 47.5h1M83 47.5h1M89 47.5h1M93 47.5h1M94 47.5h1M96 47.5h1M98 47.5h1M0 49.5h1M1 49.5h1M3 49.5h1M4 49.5h1M9 49.5h1M12 49.5h1M14 49.5h1M22 49.5h1M23 49.5h1M24 49.5h1M33 49.5h1M37 49.5h1M39 49.5h1M41 49.5h1M42 49.5h1M51 49.5h1M54 49.5h1M56 49.5h1M63 49.5h1M64 49.5h1M66 49.5h1M67 49.5h1M68 49.5h1M69 49.5h1M74 49.5h1M76 49.5h1M81 49.5h1M82 49.5h1M84 49.5h1M86 49.5h1M89 49.5h1M91 49.5h1M92 49.5h1M94 49.5h1M95 49.5h1M97 49.5h1M99 49.5h1M3 50.5h1M8 50.5h1M9 50.5h1M14 50.5h1M15 50.5h1M16 50.5h1M18 50.5h1M19 50.5h1M21 50.5h1M23 50.5h1M26 50.5h1M27 50.5h1M28 50.5h1M32 50.5h1M33 50.5h1M35 50.5h1M37 50.5h1M38 50.5h1M42 50.5h1M51 50.5h1M52 50.5h1M53 50.5h1M54 50.5h1M56 50.5h1M64 50.5h1M67 50.5h1M71 50.5h1M72 50.5h1M76 50.5h1M78 50.5h1M81 50.5h1M84 50.5h1M92 50.5h1M93 50.5h1M94 50.5h1M95 50.5h1M96 50.5h1M2 51.5h1M4 51.5h1M5 51.5h1M8 51.5h1M11 51.5h1M13 51.5h1M15 51.5h1M18 51.5h1M21 51.5h1M24 51.5h1M26 51.5h1M28 51.5h1M33 51.5h1M36 51.5h1M37 51.5h1M39 51.5h1M43 51.5h1M44 51.5h1M47 51.5h1M51 51.5h1M64 51.5h1M66 51.5h1M67 51.5h1M74 51.5h1M82 51.5h1M83 51.5h1M84 51.5h1M86 51.5h1M89 51.5h1M94 51.5h1M96 51.5h1M0 52.5h1M3 52.5h1M6 52.5h1M7 52.5h1M11 52.5h1M14 52.5h1M22 52.5h1M23 52.5h1M25 52.5h1M27 52.5h1M28 52.5h1M38 52.5h1M41 52.5h1M43 52.5h1M46 52.5h1M49 52.5h1M51 52.5h1M55 52.5h1M57 52.5h1M58 52.5h1M63 52.5h1M64 52.5h1M65 52.5h1M68 52.5h1M72 52.5h1M73 52.5h1M76 52.5h1M79 52.5h1M83 52.5h1M89 52.5h1M91 52.5h1M93 52.5h1M94 52.5h1M95 52.5h1M96 52.5h1M97 52.5h1M98 52.5h1M3 53.5h1M7 53.5h1M9 53.5h1M14 53.5h1M18 53.5h1M19 53.5h1M28 53.5h1M32 53.5h1M34 53.5h1M43 53.5h1M48 53.5h1M49 53.5h1M51 53.5h1M52 53.5h1M55 53.5h1M56 53.5h1M62 53.5h1M64 53.5h1M72 53.5h1M73 53.5h1M74 53.5h1M77 53.5h1M83 53.5h1M86 53.5h1M87 53.5h1M91 53.5h1M92 53.5h1M98 53.5h1M6 54.5h1M9 54.5h1M11 54.5h1M13 54.5h1M14 54.5h1M15 54.5h1M16 54.5h1M17 54.5h1M18 54.5h1M19 54.5h1M21 54.5h1M23 54.5h1M25 54.5h1M28 54.5h1M31 54.5h1M35 54.5h1M37 54.5h1M38 54.5h1M41 54.5h1M42 54.5h1M44 54.5h1M46 54.5h1M51 54.5h1M55 54.5h1M56 54.5h1M57 54.5h1M58 54.5h1M59 54.5h1M68 54.5h1M72 54.5h1M76 54.5h1M77 54.5h1M78 54.5h1M79 54.5h1M82 54.5h1M84 54.5h1M85 54.5h1M86 54.5h1M87 54.5h1M89 54.5h1M92 54.5h1M93 54.5h1M95 54.5h1M11 55.5h1M15 55.5h1M16 55.5h1M17 55.5h1M21 55.5h1M23 55.5h1M28 55.5h1M29 55.5h1M31 55.5h1M32 55.5h1M33 55.5h1M42 55.5h1M45 55.5h1M46 55.5h1M48 55.5h1M49 55.5h1M51 55.5h1M53 55.5h1M54 55.5h1M56 55.5h1M57 55.5h1M58 55.5h1M65 55.5h1M68 55.5h1M72 55.5h1M73 55.5h1M75 55.5h1M77 55.5h1M78 55.5h1M79 55.5h1M84 55.5h1M87 55.5h1M88 55.5h1M94 55.5h1M95 55.5h1M96 55.5h1M3 56.5h1M11 56.5h1M12 56.5h1M14 56.5h1M15 56.5h1M23 56.5h1M27 56.5h1M37 56.5h1M38 56.5h1M39 56.5h1M42 56.5h1M44 56.5h1M47 56.5h1M48 56.5h1M52 56.5h1M53 56.5h1M57 56.5h1M59 56.5h1M61 56.5h1M63 56.5h1M66 56.5h1M68 56.5h1M71 56.5h1M74 56.5h1M76 56.5h1M85 56.5h1M86 56.5h1M91 56.5h1M95 56.5h1M4 57.5h1M7 57.5h1M9 57.5h1M11 57.5h1M13 57.5h1M17 57.5h1M19 57.5h1M24 57.5h1M29 57.5h1M31 57.5h1M32 57.5h1M36 57.5h1M37 57.5h1M38 57.5h1M39 57.5h1M45 57.5h1M48 57.5h1M51 57.5h1M52 57.5h1M59 57.5h1M61 57.5h1M64 57.5h1M65 57.5h1M67 57.5h1M68 57.5h1M69 57.5h1M74 57.5h1M75 57.5h1M77 57.5h1M79 57.5h1M84 57.5h1M85 57.5h1M86 57.5h1M87 57.5h1M92 57.5h1M94 57.5h1M97 57.5h1M98 57.5h1M99 57.5h1M37 58.5h1M2 59.5h1M3 59.5h1M4 59.5h1M11 59.5h1M15 59.5h1M16 59.5h1M18 59.5h1M21 59.5h1M23 59.5h1M24 59.5h1M28 59.5h1M32 59.5h1M34 59.5h1M35 59.5h1M36 59.5h1M38 59.5h1M39 59.5h1M42 59.5h1M43 59.5h1M48 59.5h1M51 59.5h1M52 59.5h1M55 59.5h1M57 59.5h1M58 59.5h1M62 59.5h1M66 59.5h1M68 59.5h1M71 59.5h1M72 59.5h1M78 59.5h1M81 59.5h1M83 59.5h1M88 59.5h1M91 59.5h1M93 59.5h1M96 59.5h1M2 60.5h1M5 60.5h1M6 60.5h1M7 60.5h1M9 60.5h1M11 60.5h1M12 60.5h1M17 60.5h1M18 60.5h1M21 60.5h1M22 60.5h1M23 60.5h1M25 60.5h1M31 60.5h1M32 60.5h1M35 60.5h1M39 60.5h1M42 60.5h1M43 60.5h1M44 60.5h1M45 60.5h1M49 60.5h1M53 60.5h1M56 60.5h1M58 60.5h1M59 60.5h1M62 60.5h1M67 60.5h1M71 60.5h1M74 60.5h1M81 60.5h1M82 60.5h1M84 60.5h1M85 60.5h1M87 60.5h1M88 60.5h1M89 60.5h1M92 60.5h1M93 60.5h1M97 60.5h1M98 60.5h1M99 60.5h1M5 61.5h1M6 61.5h1M7 61.5h1M9 61.5h1M11 61.5h1M13 61.5h1M14 61.5h1M15 61.5h1M16 61.5h1M26 61.5h1M28 61.5h1M32 61.5h1M38 61.5h1M41 61.5h1M45 61.5h1M48 61.5h1M51 61.5h1M52 61.5h1M54 61.5h1M64 61.5h1M65 61.5h1M66 61.5h1M67 61.5h1M68 61.5h1M69 61.5h1M72 61.5h1M88 61.5h1M91 61.5h1M92 61.5h1M93 61.5h1M94 61.5h1M95 61.5h1M97 61.5h1M99 61.5h1M0 62.5h1M2 62.5h1M4 62.5h1M7 62.5h1M8 62.5h1M9 62.5h1M13 62.5h1M16 62.5h1M17 62.5h1M18 62.5h1M22 62.5h1M23 62.5h1M25 62.5h1M28 62.5h1M31 62.5h1M33 62.5h1M37 62.5h1M38 62.5h1M42 62.5h1M43 62.5h1M44 62.5h1M47 62.5h1M48 62.5h1M49 62.5h1M53 62.5h1M55 62.5h1M57 62.5h1M58 62.5h1M59 62.5h1M63 62.5h1M64 62.5h1M66 62.5h1M68 62.5h1M69 62.5h1M72 62.5h1M73 62.5h1M75 62.5h1M78 62.5h1M79 62.5h1M82 62.5h1M85 62.5h1M86 62.5h1M87 62.5h1M88 62.5h1M89 62.5h1M91 62.5h1M92 62.5h1M93 62.5h1M98 62.5h1M1 63.5h1M3 63.5h1M7 63.5h1M11 63.5h1M12 63.5h1M13 63.5h1M14 63.5h1M15 63.5h1M17 63.5h1M24 63.5h1M31 63.5h1M35 63.5h1M36 63.5h1M38 63.5h1M39 63.5h1M42 63.5h1M44 63.5h1M54 63.5h1M55 63.5h1M57 63.5h1M59 63.5h1M62 63.5h1M65 63.5h1M66 63.5h1M67 63.5h1M72 63.5h1M73 63.5h1M75 63.5h1M78 63.5h1M83 63.5h1M84 63.5h1M87 63.5h1M88 63.5h1M91 63.5h1M92 63.5h1M97 63.5h1M98 63.5h1M99 63.5h1M2 64.5h1M3 64.5h1M4 64.5h1M5 64.5h1M6 64.5h1M7 64.5h1M8 64.5h1M12 64.5h1M13 64.5h1M14 64.5h1M15 64.5h1M16 64.5h1M20 64.5h1M23 64.5h1M24 64.5h1M27 64.5h1M31 64.5h1M32 64.5h1M33 64.5h1M34 64.5h1M35 64.5h1M36 64.5h1M43 64.5h1M44 64.5h1M48 64.5h1M49 64.5h1M52 64.5h1M53 64.5h1M55 64.5h1M57 64.5h1M58 64.5h1M63 64.5h1M64 64.5h1M67 64.5h1M68 64.5h1M69 64.5h1M71 64.5h1M75 64.5h1M76 64.5h1M77 64.5h1M78 64.5h1M81 64.5h1M83 64.5h1M87 64.5h1M93 64.5h1M96 64.5h1M98 64.5h1M2 65.5h1M3 65.5h1M4 65.5h1M5 65.5h1M7 65.5h1M8 65.5h1M9 65.5h1M11 65.5h1M12 65.5h1M13 65.5h1M22 65.5h1M23 65.5h1M25 65.5h1M27 65.5h1M31 65.5h1M32 65.5h1M33 65.5h1M34 65.5h1M36 65.5h1M39 65.5h1M45 65.5h1M47 65.5h1M49 65.5h1M51 65.5h1M53 65.5h1M57 65.5h1M62 65.5h1M64 65.5h1M65 65.5h1M66 65.5h1M67 65.5h1M71 65.5h1M23 95.5h1M25 95.5h1M27 95.5h1M32 95.5h1M34 95.5h1M39 95.5h1M45 95.5h1M47 95.5h1M48 95.5h1M49 95.5h1M52 95.5h1M53 95.5h1M59 95.5h1M66 95.5h1M67 95.5h1M68 95.5h1M69 95.5h1M74 95.5h1M75 95.5h1M76 95.5h1M77 95.5h1M81 95.5h1M84 95.5h1M86 95.5h1M87 95.5h1M88 95.5h1M93 95.5h1M94 95.5h1M97 95.5h1M98 95.5h1M4 96.5h1M5 96.5h1M8 96.5h1M9 96.5h1M16 96.5h1M17 96.5h1M19 96.5h1M21 96.5h1M24 96.5h1M27 96.5h1M29 96.5h1M31 96.5h1M32 96.5h1M34 96.5h1M35 96.5h1M37 96.5h1M38 96.5h1M42 96.5h1M43 96.5h1M44 96.5h1M51 96.5h1M55 96.5h1M56 96.5h1M57 96.5h1M61 96.5h1M62 96.5h1M64 96.5h1M68 96.5h1M69 96.5h1M71 96.5h1M73 96.5h1M75 96.5h1M77 96.5h1M78 96.5h1M79 96.5h1M86 96.5h1M87 96.5h1M92 96.5h1M93 96.5h1M95 96.5h1M98 96.5h1M4 97.5h1M5 97.5h1M6 97.5h1M7 97.5h1M8 97.5h1M11 97.5h1M14 97.5h1M15 97.5h1M17 97.5h1M19 97.5h1M21 97.5h1M22 97.5h1M23 97.5h1M24 97.5h1M27 97.5h1M28 97.5h1M32 97.5h1M34 97.5h1M36 97.5h1M37 97.5h1M38 97.5h1M42 97.5h1M43 97.5h1M46 97.5h1M52 97.5h1M54 97.5h1M57 97.5h1M61 97.5h1M62 97.5h1M63 97.5h1M65 97.5h1M68 97.5h1M73 97.5h1M74 97.5h1M75 97.5h1M77 97.5h1M78 97.5h1M81 97.5h1M85 97.5h1M88 97.5h1M89 97.5h1M94 97.5h1M96 97.5h1M32 98.5h1M64 98.5h1M98 98.5h1M1 99.5h1M3 99.5h1M6 99.5h1M8 99.5h1M12 99.5h1M13 99.5h1M17 99.5h1M21 99.5h1M25 99.5h1M26 99.5h1M27 99.5h1M28 99.5h1M31 99.5h1M36 99.5h1M39 99.5h1M41 99.5h1M42 99.5h1M43 99.5h1M44 99.5h1M45 99.5h1M51 99.5h1M56 99.5h1M57 99.5h1M58 99.5h1M59 99.5h1M61 99.5h1M63 99.5h1M64 99.5h1M71 99.5h1M72 99.5h1M75 99.5h1M78 99.5h1M83 99.5h1M85 99.5h1M92 99.5h1M93 99.5h1M96 99.5h1M97 99.5h1M2 100.5h1M5 100.5h1M8 100.5h1M13 100.5h1M19 100.5h1M21 100.5h1M22 100.5h1M35 100.5h1M41 100.5h1M42 100.5h1M44 100.5h1M46 100.5h1M47 100.5h1M48 100.5h1M52 100.5h1M54 100.5h1M57 100.5h1M58 100.5h1M71 100.5h1M72 100.5h1M73 100.5h1M75 100.5h1M76 100.5h1M81 100.5h1M82 100.5h1M83 100.5h1M84 100.5h1M86 100.5h1M88 100.5h1M91 100.5h1M94 100.5h1M99 100.5h1M14 101.5h1M16 101.5h1M25 101.5h1M32 101.5h1M34 101.5h1M35 101.5h1M36 101.5h1M37 101.5h1M38 101.5h1M44 101.5h1M45 101.5h1M46 101.5h1M49 101.5h1M52 101.5h1M53 101.5h1M67 101.5h1M68 101.5h1M72 101.5h1M74 101.5h1M75 101.5h1M81 101.5h1M87 101.5h1M89 101.5h1M91 101.5h1M94 101.5h1M97 101.5h1M99 101.5h1M7 102.5h1M8 102.5h1M14 102.5h1M15 102.5h1M18 102.5h1M28 102.5h1M31 102.5h1M33 102.5h1M36 102.5h1M38 102.5h1M42 102.5h1M43 102.5h1M44 102.5h1M45 102.5h1M47 102.5h1M48 102.5h1M49 102.5h1M53 102.5h1M55 102.5h1M61 102.5h1M64 102.5h1M67 102.5h1M72 102.5h1M73 102.5h1M74 102.5h1M78 102.5h1M79 102.5h1M82 102.5h1M84 102.5h1M87 102.5h1M88 102.5h1M91 102.5h1M93 102.5h1M97 102.5h1M98 102.5h1M19 103.5h1M22 103.5h1M23 103.5h1M27 103.5h1M31 103.5h1M33 103.5h1M34 103.5h1M36 103.5h1M37 103.5h1M41 103.5h1M45 103.5h1M51 103.5h1M52 103.5h1M56 103.5h1M61 103.5h1M62 103.5h1M64 103.5h1M65 103.5h1M69 103.5h1M71 103.5h1M76 103.5h1M77 103.5h1M81 103.5h1M83 103.5h1M87 103.5h1M88 103.5h1M89 103.5h1M94 103.5h1M0 104.5h1M2 104.5h1M4 104.5h1M19 104.5h1M22 104.5h1M23 104.5h1M24 104.5h1M25 104.5h1M29 104.5h1M31 104.5h1M38 104.5h1M46 104.5h1M48 104.5h1M49 104.5h1M51 104.5h1M52 104.5h1M54 104.5h1M55 104.5h1M56 104.5h1M59 104.5h1M63 104.5h1M68 104.5h1M71 104.5h1M72 104.5h1M73 104.5h1M75 104.5h1M82 104.5h1M83 104.5h1M89 104.5h1M93 104.5h1M97 104.5h1M4 105.5h1M5 105.5h1M6 105.5h1M16 105.5h1M19 105.5h1M24 105.5h1M28 105.5h1M34 105.5h1M38 105.5h1M39 105.5h1M44 105.5h1M46 105.5h1M48 105.5h1M49 105.5h1M53 105.5h1M56 105.5h1M59 105.5h1M62 105.5h1M64 105.5h1M65 105.5h1M68 105.5h1M74 105.5h1M79 105.5h1M81 105.5h1M84 105.5h1M85 105.5h1M87 105.5h1M93 105.5h1M96 105.5h1M99 105.5h1M7 106.5h1M9 106.5h1M13 106.5h1M15 106.5h1M22 106.5h1M24 106.5h1M25 106.5h1M26 106.5h1M27 106.5h1M31 106.5h1M32 106.5h1M33 106.5h1M34 106.5h1M35 106.5h1M38 106.5h1M39 106.5h1M42 106.5h1M43 106.5h1M45 106.5h1M46 106.5h1M48 106.5h1M53 106.5h1M54 106.5h1M57 106.5h1M59 106.5h1M61 106.5h1M63 106.5h1M64 106.5h1M65 106.5h1M75 106.5h1M76 106.5h1M79 106.5h1M83 106.5h1M86 106.5h1M89 106.5h1M91 106.5h1M94 106.5h1M95 106.5h1M97 106.5h1M99 106.5h1M4 107.5h1M5 107.5h1M6 107.5h1M13 107.5h1M15 107.5h1M19 107.5h1M21 107.5h1M24 107.5h1M25 107.5h1M26 107.5h1M29 107.5h1M32 107.5h1M35 107.5h1M36 107.5h1M37 107.5h1M38 107.5h1M39 107.5h1M41 107.5h1M43 107.5h1M46 107.5h1M47 107.5h1M49 107.5h1M52 107.5h1M56 107.5h1M58 107.5h1M62 107.5h1M63 107.5h1M65 107.5h1M69 107.5h1M73 107.5h1M76 107.5h1M77 107.5h1M79 107.5h1M83 107.5h1M86 107.5h1M88 107.5h1M91 107.5h1M95 107.5h1M6 109.5h1M7 109.5h1M9 109.5h1M11 109.5h1M12 109.5h1M14 109.5h1M18 109.5h1M21 109.5h1M25 109.5h1M28 109.5h1M29 109.5h1M32 109.5h1M37 109.5h1M38 109.5h1M39 109.5h1M41 109.5h1M48 109.5h1M51 109.5h1M53 109.5h1M54 109.5h1M59 109.5h1M61 109.5h1M62 109.5h1M63 109.5h1M64 109.5h1M66 109.5h1M68 109.5h1M71 109.5h1M73 109.5h1M74 109.5h1M79 109.5h1M83 109.5h1M84 109.5h1M86 109.5h1M88 109.5h1M89 109.5h1M95 109.5h1M4 110.5h1M12 110.5h1M16 110.5h1M18 110.5h1M21 110.5h1M28 110.5h1M32 110.5h1M33 110.5h1M35 110.5h1M42 110.5h1M43 110.5h1M44 110.5h1M46 110.5h1M48 110.5h1M51 110.5h1M53 110.5h1M55 110.5h1M58 110.5h1M61 110.5h1M67 110.5h1M68 110.5h1M72 110.5h1M77 110.5h1M79 110.5h1M81 110.5h1M86 110.5h1M89 110.5h1M91 110.5h1M93 110.5h1M94 110.5h1M95 110.5h1M97 110.5h1M98 110.5h1M4 111.5h1M5 111.5h1M6 111.5h1M7 111.5h1M12 111.5h1M15 111.5h1M17 111.5h1M18 111.5h1M22 111.5h1M27 111.5h1M29 111.5h1M35 111.5h1M36 111.5h1M37 111.5h1M38 111.5h1M39 111.5h1M41 111.5h1M42 111.5h1M46 111.5h1M47 111.5h1M53 111.5h1M63 111.5h1M69 111.5h1M71 111.5h1M72 111.5h1M73 111.5h1M74 111.5h1M77 111.5h1M79 111.5h1M81 111.5h1M84 111.5h1M86 111.5h1M89 111.5h1M91 111.5h1M92 111.5h1M95 111.5h1M97 111.5h1M0 112.5h1M2 112.5h1M9 112.5h1M12 112.5h1M14 112.5h1M15 112.5h1M18 112.5h1M21 112.5h1M22 112.5h1M23 112.5h1M24 112.5h1M26 112.5h1M27 112.5h1M29 112.5h1M31 112.5h1M33 112.5h1M38 112.5h1M39 112.5h1M43 112.5h1M44 112.5h1M49 112.5h1M57 112.5h1M58 112.5h1M61 112.5h1M62 112.5h1M63 112.5h1M64 112.5h1M66 112.5h1M69 112.5h1M72 112.5h1M75 112.5h1M77 112.5h1M79 112.5h1M81 112.5h1M83 112.5h1M84 112.5h1M85 112.5h1M87 112.5h1M91 112.5h1M92 112.5h1M94 112.5h1M99 112.5h1M6 113.5h1M7 113.5h1M12 113.5h1M14 113.5h1M15 113.5h1M16 113.5h1M17 113.5h1M23 113.5h1M26 113.5h1M27 113.5h1M32 113.5h1M37 113.5h1M39 113.5h1M42 113.5h1M43 113.5h1M44 113.5h1M47 113.5h1M51 113.5h1M53 113.5h1M54 113.5h1M55 113.5h1M56 113.5h1M57 113.5h1M58 113.5h1M61 113.5h1M62 113.5h1M66 113.5h1M67 113.5h1M68 113.5h1M72 113.5h1M74 113.5h1M79 113.5h1M83 113.5h1M86 113.5h1M87 113.5h1M88 113.5h1M89 113.5h1M91 113.5h1M92 113.5h1M94 113.5h1M95 113.5h1M96 113.5h1M97 113.5h1M3 114.5h1M4 114.5h1M8 114.5h1M9 114.5h1M12 114.5h1M14 114.5h1M16 114.5h1M18 114.5h1M22 114.5h1M25 114.5h1M26 114.5h1M27 114.5h1M32 114.5h1M36 114.5h1M38 114.5h1M39 114.5h1M41 114.5h1M42 114.5h1M43 114.5h1M45 114.5h1M46 114.5h1M51 114.5h1M52 114.5h1M53 114.5h1M55 114.5h1M56 114.5h1M57 114.5h1M58 114.5h1M61 114.5h1M65 114.5h1M66 114.5h1M67 114.5h1M69 114.5h1M78 114.5h1M82 114.5h1M92 114.5h1M93 114.5h1M96 114.5h1M99 114.5h1M2 115.5h1M3 115.5h1M5 115.5h1M6 115.5h1M7 115.5h1M9 115.5h1M14 115.5h1M16 115.5h1M19 115.5h1M21 115.5h1M23 115.5h1M24 115.5h1M25 115.5h1M27 115.5h1M29 115.5h1M31 115.5h1M33 115.5h1M34 115.5h1M35 115.5h1M36 115.5h1M41 115.5h1M42 115.5h1M43 115.5h1M45 115.5h1M46 115.5h1M47 115.5h1M48 115.5h1M49 115.5h1M54 115.5h1M57 115.5h1M59 115.5h1M62 115.5h1M68 115.5h1M69 115.5h1M71 115.5h1M73 115.5h1M75 115.5h1M76 115.5h1M78 115.5h1M79 115.5h1M81 115.5h1M82 115.5h1M84 115.5h1M85 115.5h1M86 115.5h1M89 115.5h1M91 115.5h1M94 115.5h1M95 115.5h1M1 116.5h1M12 116.5h1M14 116.5h1M16 116.5h1M17 116.5h1M19 116.5h1M21 116.5h1M23 116.5h1M24 116.5h1M25 116.5h1M27 116.5h1M28 116.5h1M32 116.5h1M33 116.5h1M34 116.5h1M37 116.5h1M38 116.5h1M44 116.5h1M45 116.5h1M48 116.5h1M54 116.5h1M55 116.5h1M57 116.5h1M67 116.5h1M72 116.5h1M75 116.5h1M76 116.5h1M77 116.5h1M79 116.5h1M81 116.5h1M85 116.5h1M87 116.5h1M88 116.5h1M91 116.5h1M93 116.5h1M95 116.5h1M96 116.5h1M98 116.5h1M99 116.5h1M6 117.5h1M9 117.5h1M14 117.5h1M16 117.5h1M19 117.5h1M22 117.5h1M23 117.5h1M29 117.5h1M34 117.5h1M35 117.5h1M36 117.5h1M37 117.5h1M38 117.5h1M42 117.5h1M44 117.5h1M46 117.5h1M47 117.5h1M48 117.5h1M49 117.5h1M54 117.5h1M64 117.5h1M68 117.5h1M69 117.5h1M71 117.5h1M72 117.5h1M74 117.5h1M78 117.5h1M88 117.5h1M94 117.5h1M94 118.5h1M2 119.5h1M6 119.5h1M8 119.5h1M14 119.5h1M16 119.5h1M22 119.5h1M23 119.5h1M26 119.5h1M27 119.5h1M31 119.5h1M32 119.5h1M34 119.5h1M38 119.5h1M41 119.5h1M42 119.5h1M46 119.5h1M48 119.5h1M51 119.5h1M54 119.5h1M58 119.5h1M61 119.5h1M62 119.5h1M64 119.5h1M67 119.5h1M69 119.5h1M71 119.5h1M73 119.5h1M74 119.5h1M76 119.5h1M85 119.5h1M94 119.5h1M96 119.5h1M97 119.5h1M2 120.5h1M3 120.5h1M6 120.5h1M8 120.5h1M11 120.5h1M12 120.5h1M14 120.5h1M17 120.5h1M18 120.5h1M22 120.5h1M23 120.5h1M24 120.5h1M25 120.5h1M26 120.5h1M31 120.5h1M33 120.5h1M36 120.5h1M38 120.5h1M39 120.5h1M42 120.5h1M48 120.5h1M51 120.5h1M53 120.5h1M55 120.5h1M56 120.5h1M58 120.5h1M65 120.5h1M67 120.5h1M68 120.5h1M74 120.5h1M75 120.5h1M79 120.5h1M81 120.5h1M85 120.5h1M86 120.5h1M88 120.5h1M93 120.5h1M96 120.5h1M97 120.5h1M5 121.5h1M7 121.5h1M8 121.5h1M14 121.5h1M16 121.5h1M17 121.5h1M18 121.5h1M21 121.5h1M22 121.5h1M25 121.5h1M32 121.5h1M33 121.5h1M35 121.5h1M38 121.5h1M42 121.5h1M47 121.5h1M48 121.5h1M49 121.5h1M51 121.5h1M54 121.5h1M55 121.5h1M57 121.5h1M58 121.5h1M59 121.5h1M61 121.5h1M62 121.5h1M68 121.5h1M73 121.5h1M75 121.5h1M76 121.5h1M77 121.5h1M79 121.5h1M81 121.5h1M84 121.5h1M87 121.5h1M91 121.5h1M93 121.5h1M95 121.5h1M8 122.5h1M12 122.5h1M17 122.5h1M18 122.5h1M25 122.5h1M26 122.5h1M32 122.5h1M34 122.5h1M39 122.5h1M45 122.5h1M49 122.5h1M53 122.5h1M54 122.5h1M56 122.5h1M57 122.5h1M58 122.5h1M61 122.5h1M64 122.5h1M65 122.5h1M71 122.5h1M74 122.5h1M75 122.5h1M79 122.5h1M82 122.5h1M84 122.5h1M86 122.5h1M89 122.5h1M96 122.5h1M99 122.5h1M3 123.5h1M4 123.5h1M5 123.5h1M6 123.5h1M7 123.5h1M13 123.5h1M14 123.5h1M15 123.5h1M16 123.5h1M17 123.5h1M18 123.5h1M21 123.5h1M22 123.5h1M28 123.5h1M31 123.5h1M32 123.5h1M52 123.5h1M58 123.5h1M61 123.5h1M68 123.5h1M69 123.5h1M73 123.5h1M77 123.5h1M82 123.5h1M83 123.5h1M92 123.5h1M93 123.5h1M98 123.5h1M2 124.5h1M7 124.5h1M8 124.5h1M22 124.5h1M23 124.5h1M31 124.5h1M33 124.5h1M38 124.5h1M39 124.5h1M41 124.5h1M43 124.5h1M49 124.5h1M55 124.5h1M56 124.5h1M61 124.5h1M62 124.5h1M69 124.5h1M73 124.5h1M76 124.5h1M84 124.5h1M85 124.5h1M86 124.5h1M87 124.5h1M89 124.5h1M99 124.5h1M8 125.5h1M12 125.5h1M15 125.5h1M17 125.5h1M21 125.5h1M24 125.5h1M27 125.5h1M29 125.5h1M33 125.5h1M43 125.5h1M47 125.5h1M55 125.5h1M56 125.5h1M65 125.5h1M68 125.5h1M77 125.5h1M81 125.5h1M84 125.5h1M87 125.5h1M88 125.5h1M91 125.5h1M93 125.5h1M98 125.5h1M5 126.5h1M21 126.5h1M24 126.5h1M25 126.5h1M36 126.5h1M43 126.5h1M55 126.5h1M78 126.5h1M82 126.5h1M84 126.5h1M92 126.5h1M93 126.5h1M98 126.5h1M16 127.5h1M21 127.5h1M41 127.5h1M63 127.5h1M66 127.5h1M79 127.5h1M88 127.5h1M95 127.5h1M7 129.5h1M22 129.5h1M24 129.5h1M26 129.5h1M28 129.5h1M64 129.5h1M82 129.5h1M87 129.5h1M2 130.5h1M4 130.5h1M11 130.5h1M15 130.5h1M36 130.5h1M46 130.5h1M49 130.5h1M51 130.5h1M68 130.5h1M71 130.5h1M74 130.5h1M75 130.5h1M86 130.5h1M87 130.5h1M93 130.5h1M16 131.5h1M24 131.5h1M42 131.5h1M46 131.5h1M49 131.5h1M2 132.5h1M7 132.5h1M8 132.5h1M16 132.5h1M23 132.5h1M26 132.5h1M27 132.5h1M32 132.5h1M37 132.5h1M42 132.5h1M44 132.5h1M55 132.5h1M56 132.5h1M63 132.5h1M66 132.5h1M73 132.5h1M92 132.5h1M95 132.5h1M98 132.5h1M11 133.5h1M16 133.5h1M18 133.5h1M23 133.5h1M26 133.5h1M44 133.5h1M48 133.5h1M54 133.5h1M56 133.5h1M61 133.5h1M62 133.5h1M73 133.5h1M74 133.5h1M85 133.5h1M91 133.5h1M93 133.5h1M6 134.5h1M18 134.5h1M32 134.5h1M38 134.5h1M45 134.5h1M52 134.5h1M54 134.5h1M62 134.5h1M75 134.5h1M81 134.5h1M88 134.5h1M94 134.5h1M96 134.5h1M99 134.5h1M18 135.5h1M26 135.5h1M29 135.5h1M51 135.5h1M81 135.5h1M86 135.5h1M91 135.5h1M97 135.5h1M6 136.5h1M9 136.5h1M15 136.5h1M24 136.5h1M39 136.5h1M42 136.5h1M53 136.5h1M58 136.5h1M62 136.5h1M63 136.5h1M88 136.5h1M89 136.5h1M93 136.5h1M11 137.5h1M13 137.5h1M36 137.5h1M44 137.5h1M49 137.5h1M56 137.5h1M61 137.5h1M66 137.5h1M89 137.5h1M99 137.5h1M45 139.5h1M64 139.5h1M72 139.5h1M76 139.5h1M85 139.5h1M44 140.5h1M52 140.5h1M64 140.5h1M67 140.5h1M71 140.5h1M81 140.5h1M87 140.5h1M94 140.5h1M6 141.5h1M8 141.5h1M17 141.5h1M19 141.5h1M27 141.5h1M41 141.5h1M52 141.5h1M54 141.5h1M65 141.5h1M66 141.5h1M73 141.5h1M95 141.5h1M96 141.5h1M97 141.5h1M4 142.5h1M6 142.5h1M11 142.5h1M15 142.5h1M17 142.5h1M27 142.5h1M29 142.5h1M39 142.5h1M41 142.5h1M43 142.5h1M44 142.5h1M53 142.5h1M55 142.5h1M59 142.5h1M72 142.5h1M86 142.5h1M89 142.5h1M91 142.5h1M96 142.5h1M3 143.5h1M5 143.5h1M7 143.5h1M12 143.5h1M31 143.5h1M33 143.5h1M41 143.5h1M45 143.5h1M48 143.5h1M51 143.5h1M53 143.5h1M56 143.5h1M58 143.5h1M67 143.5h1M77 143.5h1M81 143.5h1M84 143.5h1M85 143.5h1M5 144.5h1M6 144.5h1M8 144.5h1M13 144.5h1M18 144.5h1M23 144.5h1M32 144.5h1M33 144.5h1M36 144.5h1M44 144.5h1M49 144.5h1M51 144.5h1M58 144.5h1M66 144.5h1M68 144.5h1M79 144.5h1M94 144.5h1M3 145.5h1M5 145.5h1M6 145.5h1M7 145.5h1M11 145.5h1M14 145.5h1M17 145.5h1M23 145.5h1M31 145.5h1M32 145.5h1M38 145.5h1M48 145.5h1M51 145.5h1M57 145.5h1M59 145.5h1M61 145.5h1M63 145.5h1M64 145.5h1M66 145.5h1M67 145.5h1M71 145.5h1M73 145.5h1M75 145.5h1M76 145.5h1M77 145.5h1M78 145.5h1M81 145.5h1M82 145.5h1M88 145.5h1M94 145.5h1M8 146.5h1M9 146.5h1M11 146.5h1M15 146.5h1M16 146.5h1M18 146.5h1M21 146.5h1M24 146.5h1M26 146.5h1M29 146.5h1M31 146.5h1M32 146.5h1M37 146.5h1M45 146.5h1M46 146.5h1M49 146.5h1M51 146.5h1M55 146.5h1M56 146.5h1M64 146.5h1M65 146.5h1M79 146.5h1M82 146.5h1M85 146.5h1M86 146.5h1M91 146.5h1M94 146.5h1M1 147.5h1M7 147.5h1M13 147.5h1M18 147.5h1M24 147.5h1M25 147.5h1M26 147.5h1M29 147.5h1M32 147.5h1M36 147.5h1M38 147.5h1M41 147.5h1M48 147.5h1M49 147.5h1M54 147.5h1M61 147.5h1M63 147.5h1M69 147.5h1M76 147.5h1M78 147.5h1M79 147.5h1M84 147.5h1M88 147.5h1M91 147.5h1M96 147.5h1M97 147.5h1M98 147.5h1M99 147.5h1" stroke="#214e1d"/>
<path d="M42 66.5h1M56 71.5h1M57 75.5h1M85 75.5h1M63 76.5h1M97 76.5h1M9 84.5h1M14 85.5h1M5 86.5h1M5 87.5h1M17 94.5h1" stroke="#c57d13"/>
<path d="M0 0.5h1M15 0.5h1M18 0.5h1M22 0.5h1M23 0.5h1M25 0.5h1M27 0.5h1M28 0.5h1M29 0.5h1M30 0.5h1M35 0.5h1M36 0.5h1M37 0.5h1M42 0.5h1M44 0.5h1M45 0.5h1M46 0.5h1M48 0.5h1M49 0.5h1M51 0.5h1M52 0.5h1M55 0.5h1M56 0.5h1M61 0.5h1M62 0.5h1M65 0.5h1M66 0.5h1M67 0.5h1M71 0.5h1M73 0.5h1M77 0.5h1M81 0.5h1M85 0.5h1M86 0.5h1M88 0.5h1M91 0.5h1M93 0.5h1M94 0.5h1M95 0.5h1M96 0.5h1M97 0.5h1M1 1.5h1M4 1.5h1M8 1.5h1M11 1.5h1M15 1.5h1M18 1.5h1M24 1.5h1M25 1.5h1M26 1.5h1M28 1.5h1M32 1.5h1M33 1.5h1M39 1.5h1M45 1.5h1M46 1.5h1M48 1.5h1M49 1.5h1M51 1.5h1M52 1.5h1M56 1.5h1M58 1.5h1M59 1.5h1M61 1.5h1M65 1.5h1M67 1.5h1M68 1.5h1M73 1.5h1M74 1.5h1M79 1.5h1M84 1.5h1M85 1.5h1M86 1.5h1M87 1.5h1M89 1.5h1M92 1.5h1M98 1.5h1M0 2.5h1M1 2.5h1M3 2.5h1M4 2.5h1M6 2.5h1M7 2.5h1M9 2.5h1M14 2.5h1M16 2.5h1M18 2.5h1M21 2.5h1M23 2.5h1M24 2.5h1M25 2.5h1M26 2.5h1M34 2.5h1M37 2.5h1M38 2.5h1M39 2.5h1M41 2.5h1M42 2.5h1M43 2.5h1M44 2.5h1M47 2.5h1M48 2.5h1M51 2.5h1M53 2.5h1M54 2.5h1M56 2.5h1M58 2.5h1M63 2.5h1M64 2.5h1M65 2.5h1M68 2.5h1M69 2.5h1M71 2.5h1M72 2.5h1M74 2.5h1M76 2.5h1M81 2.5h1M85 2.5h1M86 2.5h1M91 2.5h1M92 2.5h1M93 2.5h1M94 2.5h1M95 2.5h1M96 2.5h1M97 2.5h1M98 2.5h1M5 3.5h1M6 3.5h1M7 3.5h1M8 3.5h1M11 3.5h1M15 3.5h1M19 3.5h1M21 3.5h1M27 3.5h1M28 3.5h1M29 3.5h1M36 3.5h1M37 3.5h1M39 3.5h1M43 3.5h1M48 3.5h1M49 3.5h1M55 3.5h1M57 3.5h1M62 3.5h1M64 3.5h1M66 3.5h1M67 3.5h1M68 3.5h1M71 3.5h1M73 3.5h1M78 3.5h1M79 3.5h1M84 3.5h1M85 3.5h1M88 3.5h1M93 3.5h1M94 3.5h1M95 3.5h1M96 3.5h1M98 3.5h1M99 3.5h1M0 4.5h1M5 4.5h1M9 4.5h1M12 4.5h1M14 4.5h1M17 4.5h1M18 4.5h1M23 4.5h1M24 4.5h1M26 4.5h1M28 4.5h1M31 4.5h1M35 4.5h1M36 4.5h1M39 4.5h1M43 4.5h1M45 4.5h1M49 4.5h1M52 4.5h1M54 4.5h1M55 4.5h1M58 4.5h1M59 4.5h1M66 4.5h1M71 4.5h1M72 4.5h1M74 4.5h1M77 4.5h1M78 4.5h1M79 4.5h1M82 4.5h1M86 4.5h1M87 4.5h1M91 4.5h1M97 4.5h1M98 4.5h1M99 4.5h1M0 5.5h1M2 5.5h1M6 5.5h1M8 5.5h1M9 5.5h1M12 5.5h1M16 5.5h1M17 5.5h1M19 5.5h1M21 5.5h1M23 5.5h1M24 5.5h1M26 5.5h1M29 5.5h1M31 5.5h1M37 5.5h1M38 5.5h1M41 5.5h1M43 5.5h1M45 5.5h1M46 5.5h1M47 5.5h1M49 5.5h1M53 5.5h1M54 5.5h1M57 5.5h1M58 5.5h1M59 5.5h1M61 5.5h1M62 5.5h1M63 5.5h1M68 5.5h1M71 5.5h1M72 5.5h1M73 5.5h1M75 5.5h1M77 5.5h1M82 5.5h1M83 5.5h1M85 5.5h1M86 5.5h1M87 5.5h1M88 5.5h1M89 5.5h1M94 5.5h1M95 5.5h1M97 5.5h1M99 5.5h1M1 6.5h1M2 6.5h1M6 6.5h1M11 6.5h1M12 6.5h1M13 6.5h1M16 6.5h1M18 6.5h1M19 6.5h1M23 6.5h1M29 6.5h1M31 6.5h1M34 6.5h1M35 6.5h1M36 6.5h1M37 6.5h1M39 6.5h1M42 6.5h1M47 6.5h1M49 6.5h1M54 6.5h1M56 6.5h1M58 6.5h1M63 6.5h1M64 6.5h1M65 6.5h1M67 6.5h1M69 6.5h1M71 6.5h1M73 6.5h1M74 6.5h1M75 6.5h1M76 6.5h1M77 6.5h1M82 6.5h1M83 6.5h1M85 6.5h1M87 6.5h1M92 6.5h1M94 6.5h1M96 6.5h1M97 6.5h1M98 6.5h1M4 7.5h1M12 7.5h1M13 7.5h1M15 7.5h1M18 7.5h1M19 7.5h1M21 7.5h1M27 7.5h1M28 7.5h1M31 7.5h1M32 7.5h1M33 7.5h1M35 7.5h1M41 7.5h1M48 7.5h1M52 7.5h1M56 7.5h1M58 7.5h1M59 7.5h1M62 7.5h1M64 7.5h1M67 7.5h1M69 7.5h1M71 7.5h1M78 7.5h1M82 7.5h1M83 7.5h1M86 7.5h1M87 7.5h1M89 7.5h1M91 7.5h1M93 7.5h1M94 7.5h1M95 7.5h1M98 7.5h1M65 8.5h1M6 9.5h1M8 9.5h1M9 9.5h1M11 9.5h1M12 9.5h1M13 9.5h1M15 9.5h1M18 9.5h1M19 9.5h1M24 9.5h1M28 9.5h1M29 9.5h1M31 9.5h1M32 9.5h1M34 9.5h1M36 9.5h1M37 9.5h1M39 9.5h1M43 9.5h1M44 9.5h1M49 9.5h1M52 9.5h1M55 9.5h1M61 9.5h1M66 9.5h1M68 9.5h1M74 9.5h1M76 9.5h1M77 9.5h1M81 9.5h1M83 9.5h1M84 9.5h1M87 9.5h1M89 9.5h1M91 9.5h1M93 9.5h1M95 9.5h1M96 9.5h1M97 9.5h1M98 9.5h1M2 10.5h1M3 10.5h1M6 10.5h1M7 10.5h1M8 10.5h1M9 10.5h1M12 10.5h1M19 10.5h1M21 10.5h1M22 10.5h1M27 10.5h1M31 10.5h1M32 10.5h1M33 10.5h1M34 10.5h1M35 10.5h1M36 10.5h1M37 10.5h1M38 10.5h1M41 10.5h1M45 10.5h1M47 10.5h1M51 10.5h1M52 10.5h1M54 10.5h1M61 10.5h1M64 10.5h1M67 10.5h1M68 10.5h1M71 10.5h1M72 10.5h1M73 10.5h1M77 10.5h1M78 10.5h1M84 10.5h1M86 10.5h1M88 10.5h1M89 10.5h1M92 10.5h1M94 10.5h1M95 10.5h1M96 10.5h1M97 10.5h1M6 11.5h1M8 11.5h1M12 11.5h1M13 11.5h1M15 11.5h1M16 11.5h1M17 11.5h1M24 11.5h1M25 11.5h1M26 11.5h1M27 11.5h1M28 11.5h1M29 11.5h1M32 11.5h1M33 11.5h1M35 11.5h1M37 11.5h1M51 11.5h1M52 11.5h1M53 11.5h1M57 11.5h1M59 11.5h1M62 11.5h1M63 11.5h1M69 11.5h1M72 11.5h1M73 11.5h1M79 11.5h1M81 11.5h1M85 11.5h1M87 11.5h1M88 11.5h1M89 11.5h1M91 11.5h1M93 11.5h1M96 11.5h1M97 11.5h1M99 11.5h1M0 12.5h1M2 12.5h1M5 12.5h1M8 12.5h1M9 12.5h1M12 12.5h1M13 12.5h1M14 12.5h1M16 12.5h1M17 12.5h1M21 12.5h1M24 12.5h1M25 12.5h1M26 12.5h1M27 12.5h1M31 12.5h1M32 12.5h1M33 12.5h1M35 12.5h1M37 12.5h1M38 12.5h1M39 12.5h1M42 12.5h1M43 12.5h1M44 12.5h1M47 12.5h1M49 12.5h1M52 12.5h1M55 12.5h1M56 12.5h1M58 12.5h1M63 12.5h1M66 12.5h1M69 12.5h1M72 12.5h1M73 12.5h1M76 12.5h1M77 12.5h1M79 12.5h1M81 12.5h1M89 12.5h1M91 12.5h1M92 12.5h1M94 12.5h1M95 12.5h1M98 12.5h1M99 12.5h1M5 13.5h1M7 13.5h1M9 13.5h1M11 13.5h1M12 13.5h1M13 13.5h1M14 13.5h1M15 13.5h1M17 13.5h1M19 13.5h1M21 13.5h1M24 13.5h1M26 13.5h1M29 13.5h1M32 13.5h1M33 13.5h1M34 13.5h1M38 13.5h1M39 13.5h1M44 13.5h1M46 13.5h1M49 13.5h1M54 13.5h1M55 13.5h1M57 13.5h1M59 13.5h1M61 13.5h1M62 13.5h1M65 13.5h1M67 13.5h1M73 13.5h1M77 13.5h1M78 13.5h1M79 13.5h1M83 13.5h1M86 13.5h1M87 13.5h1M89 13.5h1M91 13.5h1M92 13.5h1M94 13.5h1M95 13.5h1M96 13.5h1M97 13.5h1M3 14.5h1M5 14.5h1M7 14.5h1M14 14.5h1M16 14.5h1M17 14.5h1M21 14.5h1M22 14.5h1M27 14.5h1M36 14.5h1M38 14.5h1M39 14.5h1M42 14.5h1M43 14.5h1M45 14.5h1M46 14.5h1M48 14.5h1M52 14.5h1M53 14.5h1M55 14.5h1M57 14.5h1M58 14.5h1M61 14.5h1M64 14.5h1M65 14.5h1M66 14.5h1M68 14.5h1M71 14.5h1M75 14.5h1M76 14.5h1M79 14.5h1M82 14.5h1M83 14.5h1M92 14.5h1M93 14.5h1M94 14.5h1M95 14.5h1M96 14.5h1M98 14.5h1M1 15.5h1M2 15.5h1M6 15.5h1M7 15.5h1M12 15.5h1M14 15.5h1M16 15.5h1M17 15.5h1M19 15.5h1M23 15.5h1M24 15.5h1M25 15.5h1M27 15.5h1M28 15.5h1M29 15.5h1M32 15.5h1M33 15.5h1M34 15.5h1M35 15.5h1M36 15.5h1M38 15.5h1M39 15.5h1M42 15.5h1M44 15.5h1M48 15.5h1M49 15.5h1M56 15.5h1M57 15.5h1M58 15.5h1M61 15.5h1M66 15.5h1M67 15.5h1M69 15.5h1M72 15.5h1M73 15.5h1M75 15.5h1M76 15.5h1M78 15.5h1M79 15.5h1M83 15.5h1M85 15.5h1M93 15.5h1M94 15.5h1M96 15.5h1M98 15.5h1M99 15.5h1M2 16.5h1M5 16.5h1M6 16.5h1M7 16.5h1M9 16.5h1M14 16.5h1M16 16.5h1M17 16.5h1M18 16.5h1M21 16.5h1M23 16.5h1M24 16.5h1M28 16.5h1M29 16.5h1M32 16.5h1M34 16.5h1M37 16.5h1M39 16.5h1M43 16.5h1M49 16.5h1M52 16.5h1M54 16.5h1M56 16.5h1M62 16.5h1M64 16.5h1M65 16.5h1M66 16.5h1M67 16.5h1M76 16.5h1M77 16.5h1M78 16.5h1M79 16.5h1M82 16.5h1M83 16.5h1M84 16.5h1M88 16.5h1M93 16.5h1M96 16.5h1M98 16.5h1M1 17.5h1M2 17.5h1M3 17.5h1M4 17.5h1M6 17.5h1M7 17.5h1M9 17.5h1M11 17.5h1M19 17.5h1M21 17.5h1M22 17.5h1M23 17.5h1M25 17.5h1M26 17.5h1M28 17.5h1M31 17.5h1M33 17.5h1M34 17.5h1M37 17.5h1M38 17.5h1M39 17.5h1M43 17.5h1M45 17.5h1M46 17.5h1M48 17.5h1M49 17.5h1M51 17.5h1M52 17.5h1M53 17.5h1M55 17.5h1M56 17.5h1M58 17.5h1M59 17.5h1M62 17.5h1M65 17.5h1M66 17.5h1M69 17.5h1M72 17.5h1M75 17.5h1M76 17.5h1M77 17.5h1M78 17.5h1M81 17.5h1M85 17.5h1M86 17.5h1M87 17.5h1M91 17.5h1M93 17.5h1M94 17.5h1M95 17.5h1M96 17.5h1M99 17.5h1M0 18.5h1M3 18.5h1M6 18.5h1M9 18.5h1M11 18.5h1M14 18.5h1M19 18.5h1M24 18.5h1M29 18.5h1M32 18.5h1M43 18.5h1M51 18.5h1M55 18.5h1M56 18.5h1M58 18.5h1M62 18.5h1M66 18.5h1M67 18.5h1M69 18.5h1M71 18.5h1M74 18.5h1M75 18.5h1M79 18.5h1M89 18.5h1M94 18.5h1M1 19.5h1M58 19.5h1M62 19.5h1M64 19.5h1M2 20.5h1M3 20.5h1M4 20.5h1M13 20.5h1M17 20.5h1M18 20.5h1M19 20.5h1M23 20.5h1M29 20.5h1M31 20.5h1M33 20.5h1M35 20.5h1M39 20.5h1M41 20.5h1M46 20.5h1M48 20.5h1M55 20.5h1M56 20.5h1M57 20.5h1M58 20.5h1M59 20.5h1M61 20.5h1M63 20.5h1M65 20.5h1M67 20.5h1M69 20.5h1M72 20.5h1M75 20.5h1M84 20.5h1M85 20.5h1M87 20.5h1M88 20.5h1M89 20.5h1M91 20.5h1M92 20.5h1M93 20.5h1M97 20.5h1M99 20.5h1M2 21.5h1M5 21.5h1M6 21.5h1M11 21.5h1M12 21.5h1M14 21.5h1M17 21.5h1M19 21.5h1M26 21.5h1M33 21.5h1M37 21.5h1M39 21.5h1M42 21.5h1M43 21.5h1M44 21.5h1M46 21.5h1M47 21.5h1M57 21.5h1M59 21.5h1M61 21.5h1M66 21.5h1M68 21.5h1M71 21.5h1M73 21.5h1M75 21.5h1M76 21.5h1M78 21.5h1M81 21.5h1M83 21.5h1M84 21.5h1M87 21.5h1M88 21.5h1M89 21.5h1M91 21.5h1M94 21.5h1M96 21.5h1M98 21.5h1M0 22.5h1M2 22.5h1M4 22.5h1M7 22.5h1M13 22.5h1M15 22.5h1M19 22.5h1M21 22.5h1M23 22.5h1M25 22.5h1M27 22.5h1M31 22.5h1M35 22.5h1M36 22.5h1M38 22.5h1M39 22.5h1M49 22.5h1M51 22.5h1M52 22.5h1M55 22.5h1M58 22.5h1M59 22.5h1M63 22.5h1M65 22.5h1M67 22.5h1M68 22.5h1M69 22.5h1M72 22.5h1M74 22.5h1M75 22.5h1M76 22.5h1M77 22.5h1M78 22.5h1M79 22.5h1M83 22.5h1M84 22.5h1M88 22.5h1M91 22.5h1M92 22.5h1M93 22.5h1M95 22.5h1M96 22.5h1M97 22.5h1M99 22.5h1M2 23.5h1M3 23.5h1M4 23.5h1M5 23.5h1M6 23.5h1M9 23.5h1M14 23.5h1M17 23.5h1M18 23.5h1M23 23.5h1M24 23.5h1M32 23.5h1M33 23.5h1M36 23.5h1M38 23.5h1M41 23.5h1M42 23.5h1M44 23.5h1M46 23.5h1M47 23.5h1M48 23.5h1M49 23.5h1M51 23.5h1M52 23.5h1M54 23.5h1M56 23.5h1M57 23.5h1M59 23.5h1M61 23.5h1M62 23.5h1M65 23.5h1M66 23.5h1M67 23.5h1M68 23.5h1M69 23.5h1M73 23.5h1M74 23.5h1M75 23.5h1M77 23.5h1M81 23.5h1M84 23.5h1M85 23.5h1M88 23.5h1M89 23.5h1M94 23.5h1M96 23.5h1M97 23.5h1M3 24.5h1M4 24.5h1M5 24.5h1M6 24.5h1M7 24.5h1M8 24.5h1M9 24.5h1M12 24.5h1M14 24.5h1M23 24.5h1M24 24.5h1M26 24.5h1M28 24.5h1M29 24.5h1M31 24.5h1M32 24.5h1M34 24.5h1M35 24.5h1M37 24.5h1M38 24.5h1M39 24.5h1M41 24.5h1M42 24.5h1M43 24.5h1M44 24.5h1M47 24.5h1M49 24.5h1M53 24.5h1M54 24.5h1M58 24.5h1M62 24.5h1M65 24.5h1M66 24.5h1M67 24.5h1M68 24.5h1M72 24.5h1M74 24.5h1M77 24.5h1M78 24.5h1M79 24.5h1M84 24.5h1M87 24.5h1M88 24.5h1M98 24.5h1M3 25.5h1M5 25.5h1M7 25.5h1M8 25.5h1M12 25.5h1M15 25.5h1M19 25.5h1M21 25.5h1M22 25.5h1M23 25.5h1M26 25.5h1M27 25.5h1M28 25.5h1M29 25.5h1M31 25.5h1M32 25.5h1M35 25.5h1M42 25.5h1M43 25.5h1M45 25.5h1M49 25.5h1M52 25.5h1M53 25.5h1M54 25.5h1M55 25.5h1M56 25.5h1M58 25.5h1M59 25.5h1M63 25.5h1M64 25.5h1M67 25.5h1M73 25.5h1M77 25.5h1M79 25.5h1M84 25.5h1M88 25.5h1M89 25.5h1M93 25.5h1M94 25.5h1M95 25.5h1M99 25.5h1M2 26.5h1M21 26.5h1M23 26.5h1M39 26.5h1M44 26.5h1M48 26.5h1M61 26.5h1M62 26.5h1M66 26.5h1M67 26.5h1M72 26.5h1M78 26.5h1M82 26.5h1M85 26.5h1M86 26.5h1M87 26.5h1M88 26.5h1M89 26.5h1M91 26.5h1M93 26.5h1M95 26.5h1M2 27.5h1M8 27.5h1M14 27.5h1M29 27.5h1M42 27.5h1M44 27.5h1M49 27.5h1M51 27.5h1M54 27.5h1M67 27.5h1M71 27.5h1M72 27.5h1M85 27.5h1M97 27.5h1M21 29.5h1M24 29.5h1M31 29.5h1M38 29.5h1M39 29.5h1M54 29.5h1M69 29.5h1M72 29.5h1M74 29.5h1M75 29.5h1M77 29.5h1M78 29.5h1M79 29.5h1M86 29.5h1M89 29.5h1M92 29.5h1M2 30.5h1M7 30.5h1M15 30.5h1M18 30.5h1M27 30.5h1M35 30.5h1M37 30.5h1M42 30.5h1M47 30.5h1M52 30.5h1M55 30.5h1M57 30.5h1M58 30.5h1M63 30.5h1M66 30.5h1M74 30.5h1M81 30.5h1M92 30.5h1M93 30.5h1M95 30.5h1M97 30.5h1M98 30.5h1M16 31.5h1M19 31.5h1M32 31.5h1M47 31.5h1M52 31.5h1M56 31.5h1M63 31.5h1M75 31.5h1M82 31.5h1M84 31.5h1M92 31.5h1M98 31.5h1M5 32.5h1M8 32.5h1M12 32.5h1M13 32.5h1M15 32.5h1M16 32.5h1M22 32.5h1M56 32.5h1M62 32.5h1M63 32.5h1M83 32.5h1M89 32.5h1M92 32.5h1M94 32.5h1M96 32.5h1M97 32.5h1M13 33.5h1M19 33.5h1M23 33.5h1M25 33.5h1M42 33.5h1M43 33.5h1M49 33.5h1M57 33.5h1M61 33.5h1M66 33.5h1M68 33.5h1M76 33.5h1M81 33.5h1M85 33.5h1M96 33.5h1M6 34.5h1M11 34.5h1M13 34.5h1M15 34.5h1M21 34.5h1M22 34.5h1M26 34.5h1M27 34.5h1M32 34.5h1M33 34.5h1M37 34.5h1M45 34.5h1M54 34.5h1M56 34.5h1M62 34.5h1M67 34.5h1M69 34.5h1M72 34.5h1M73 34.5h1M75 34.5h1M76 34.5h1M81 34.5h1M84 34.5h1M86 34.5h1M96 34.5h1M98 34.5h1M99 34.5h1M0 35.5h1M6 35.5h1M22 35.5h1M23 35.5h1M24 35.5h1M37 35.5h1M45 35.5h1M46 35.5h1M51 35.5h1M54 35.5h1M56 35.5h1M57 35.5h1M59 35.5h1M62 35.5h1M64 35.5h1M69 35.5h1M71 35.5h1M72 35.5h1M73 35.5h1M18 36.5h1M22 36.5h1M23 36.5h1M41 36.5h1M55 36.5h1M57 36.5h1M96 36.5h1M4 37.5h1M9 37.5h1M27 37.5h1M32 37.5h1M45 37.5h1M54 37.5h1M61 37.5h1M65 37.5h1M72 37.5h1M74 37.5h1M89 37.5h1M97 37.5h1M3 39.5h1M4 39.5h1M6 39.5h1M7 39.5h1M13 39.5h1M15 39.5h1M18 39.5h1M21 39.5h1M25 39.5h1M28 39.5h1M33 39.5h1M35 39.5h1M45 39.5h1M47 39.5h1M49 39.5h1M51 39.5h1M54 39.5h1M56 39.5h1M64 39.5h1M67 39.5h1M69 39.5h1M71 39.5h1M74 39.5h1M75 39.5h1M81 39.5h1M83 39.5h1M84 39.5h1M95 39.5h1M96 39.5h1M97 39.5h1M0 40.5h1M2 40.5h1M3 40.5h1M4 40.5h1M12 40.5h1M17 40.5h1M22 40.5h1M24 40.5h1M25 40.5h1M27 40.5h1M29 40.5h1M35 40.5h1M38 40.5h1M39 40.5h1M42 40.5h1M49 40.5h1M52 40.5h1M58 40.5h1M59 40.5h1M61 40.5h1M62 40.5h1M68 40.5h1M71 40.5h1M72 40.5h1M73 40.5h1M76 40.5h1M85 40.5h1M86 40.5h1M93 40.5h1M97 40.5h1M99 40.5h1M1 41.5h1M2 41.5h1M3 41.5h1M7 41.5h1M11 41.5h1M14 41.5h1M25 41.5h1M27 41.5h1M28 41.5h1M29 41.5h1M34 41.5h1M36 41.5h1M37 41.5h1M46 41.5h1M47 41.5h1M59 41.5h1M69 41.5h1M71 41.5h1M73 41.5h1M79 41.5h1M82 41.5h1M87 41.5h1M89 41.5h1M95 41.5h1M96 41.5h1M98 41.5h1M1 42.5h1M3 42.5h1M4 42.5h1M5 42.5h1M7 42.5h1M9 42.5h1M13 42.5h1M15 42.5h1M18 42.5h1M23 42.5h1M24 42.5h1M25 42.5h1M27 42.5h1M31 42.5h1M33 42.5h1M43 42.5h1M44 42.5h1M45 42.5h1M47 42.5h1M48 42.5h1M51 42.5h1M53 42.5h1M54 42.5h1M56 42.5h1M57 42.5h1M65 42.5h1M66 42.5h1M68 42.5h1M69 42.5h1M71 42.5h1M73 42.5h1M74 42.5h1M78 42.5h1M81 42.5h1M85 42.5h1M86 42.5h1M88 42.5h1M89 42.5h1M94 42.5h1M97 42.5h1M2 43.5h1M3 43.5h1M4 43.5h1M5 43.5h1M9 43.5h1M13 43.5h1M15 43.5h1M16 43.5h1M17 43.5h1M19 43.5h1M21 43.5h1M26 43.5h1M27 43.5h1M37 43.5h1M38 43.5h1M46 43.5h1M47 43.5h1M52 43.5h1M53 43.5h1M56 43.5h1M58 43.5h1M61 43.5h1M63 43.5h1M64 43.5h1M66 43.5h1M67 43.5h1M68 43.5h1M69 43.5h1M73 43.5h1M75 43.5h1M76 43.5h1M77 43.5h1M78 43.5h1M81 43.5h1M82 43.5h1M83 43.5h1M85 43.5h1M87 43.5h1M88 43.5h1M91 43.5h1M92 43.5h1M93 43.5h1M94 43.5h1M98 43.5h1M99 43.5h1M4 44.5h1M8 44.5h1M11 44.5h1M12 44.5h1M14 44.5h1M17 44.5h1M18 44.5h1M21 44.5h1M24 44.5h1M27 44.5h1M34 44.5h1M36 44.5h1M42 44.5h1M44 44.5h1M46 44.5h1M47 44.5h1M53 44.5h1M55 44.5h1M56 44.5h1M59 44.5h1M61 44.5h1M66 44.5h1M68 44.5h1M71 44.5h1M75 44.5h1M76 44.5h1M78 44.5h1M82 44.5h1M83 44.5h1M84 44.5h1M91 44.5h1M95 44.5h1M96 44.5h1M98 44.5h1M1 45.5h1M4 45.5h1M13 45.5h1M14 45.5h1M19 45.5h1M21 45.5h1M22 45.5h1M24 45.5h1M27 45.5h1M29 45.5h1M33 45.5h1M35 45.5h1M37 45.5h1M44 45.5h1M49 45.5h1M62 45.5h1M63 45.5h1M64 45.5h1M65 45.5h1M67 45.5h1M68 45.5h1M69 45.5h1M72 45.5h1M78 45.5h1M82 45.5h1M83 45.5h1M85 45.5h1M86 45.5h1M89 45.5h1M94 45.5h1M95 45.5h1M96 45.5h1M98 45.5h1M3 46.5h1M5 46.5h1M7 46.5h1M8 46.5h1M14 46.5h1M16 46.5h1M18 46.5h1M19 46.5h1M27 46.5h1M28 46.5h1M31 46.5h1M32 46.5h1M34 46.5h1M37 46.5h1M38 46.5h1M41 46.5h1M43 46.5h1M46 46.5h1M48 46.5h1M49 46.5h1M51 46.5h1M55 46.5h1M56 46.5h1M58 46.5h1M67 46.5h1M68 46.5h1M71 46.5h1M74 46.5h1M75 46.5h1M76 46.5h1M77 46.5h1M79 46.5h1M81 46.5h1M82 46.5h1M84 46.5h1M85 46.5h1M87 46.5h1M89 46.5h1M91 46.5h1M92 46.5h1M94 46.5h1M95 46.5h1M97 46.5h1M98 46.5h1M1 47.5h1M3 47.5h1M5 47.5h1M6 47.5h1M7 47.5h1M12 47.5h1M15 47.5h1M16 47.5h1M17 47.5h1M19 47.5h1M21 47.5h1M24 47.5h1M25 47.5h1M27 47.5h1M28 47.5h1M32 47.5h1M35 47.5h1M36 47.5h1M41 47.5h1M45 47.5h1M46 47.5h1M48 47.5h1M49 47.5h1M51 47.5h1M52 47.5h1M53 47.5h1M59 47.5h1M62 47.5h1M65 47.5h1M67 47.5h1M68 47.5h1M73 47.5h1M77 47.5h1M82 47.5h1M84 47.5h1M85 47.5h1M86 47.5h1M87 47.5h1M88 47.5h1M91 47.5h1M92 47.5h1M95 47.5h1M99 47.5h1M36 48.5h1M2 49.5h1M5 49.5h1M6 49.5h1M7 49.5h1M8 49.5h1M17 49.5h1M18 49.5h1M19 49.5h1M21 49.5h1M26 49.5h1M27 49.5h1M28 49.5h1M31 49.5h1M32 49.5h1M35 49.5h1M38 49.5h1M44 49.5h1M46 49.5h1M47 49.5h1M52 49.5h1M53 49.5h1M55 49.5h1M58 49.5h1M62 49.5h1M65 49.5h1M71 49.5h1M72 49.5h1M73 49.5h1M75 49.5h1M78 49.5h1M83 49.5h1M87 49.5h1M88 49.5h1M93 49.5h1M1 50.5h1M2 50.5h1M5 50.5h1M7 50.5h1M12 50.5h1M13 50.5h1M24 50.5h1M25 50.5h1M31 50.5h1M34 50.5h1M36 50.5h1M39 50.5h1M41 50.5h1M45 50.5h1M47 50.5h1M55 50.5h1M59 50.5h1M66 50.5h1M69 50.5h1M73 50.5h1M74 50.5h1M75 50.5h1M77 50.5h1M79 50.5h1M83 50.5h1M85 50.5h1M86 50.5h1M87 50.5h1M88 50.5h1M91 50.5h1M97 50.5h1M98 50.5h1M99 50.5h1M0 51.5h1M1 51.5h1M3 51.5h1M6 51.5h1M7 51.5h1M12 51.5h1M14 51.5h1M17 51.5h1M22 51.5h1M25 51.5h1M27 51.5h1M29 51.5h1M32 51.5h1M34 51.5h1M38 51.5h1M41 51.5h1M45 51.5h1M48 51.5h1M49 51.5h1M53 51.5h1M54 51.5h1M56 51.5h1M58 51.5h1M59 51.5h1M61 51.5h1M62 51.5h1M63 51.5h1M65 51.5h1M68 51.5h1M69 51.5h1M72 51.5h1M73 51.5h1M76 51.5h1M78 51.5h1M79 51.5h1M85 51.5h1M87 51.5h1M88 51.5h1M91 51.5h1M92 51.5h1M93 51.5h1M95 51.5h1M97 51.5h1M98 51.5h1M99 51.5h1M5 52.5h1M9 52.5h1M12 52.5h1M15 52.5h1M16 52.5h1M17 52.5h1M19 52.5h1M24 52.5h1M26 52.5h1M29 52.5h1M31 52.5h1M32 52.5h1M35 52.5h1M36 52.5h1M37 52.5h1M39 52.5h1M42 52.5h1M52 52.5h1M54 52.5h1M56 52.5h1M60 52.5h1M66 52.5h1M69 52.5h1M74 52.5h1M75 52.5h1M77 52.5h1M78 52.5h1M81 52.5h1M84 52.5h1M88 52.5h1M92 52.5h1M1 53.5h1M2 53.5h1M4 53.5h1M5 53.5h1M6 53.5h1M11 53.5h1M15 53.5h1M16 53.5h1M21 53.5h1M22 53.5h1M26 53.5h1M29 53.5h1M33 53.5h1M39 53.5h1M42 53.5h1M46 53.5h1M47 53.5h1M54 53.5h1M57 53.5h1M58 53.5h1M59 53.5h1M61 53.5h1M66 53.5h1M67 53.5h1M68 53.5h1M71 53.5h1M78 53.5h1M79 53.5h1M80 53.5h1M81 53.5h1M82 53.5h1M84 53.5h1M85 53.5h1M89 53.5h1M94 53.5h1M96 53.5h1M97 53.5h1M99 53.5h1M1 54.5h1M2 54.5h1M3 54.5h1M7 54.5h1M12 54.5h1M24 54.5h1M26 54.5h1M27 54.5h1M29 54.5h1M30 54.5h1M32 54.5h1M33 54.5h1M34 54.5h1M36 54.5h1M39 54.5h1M47 54.5h1M48 54.5h1M49 54.5h1M52 54.5h1M53 54.5h1M54 54.5h1M63 54.5h1M64 54.5h1M65 54.5h1M66 54.5h1M67 54.5h1M69 54.5h1M74 54.5h1M81 54.5h1M83 54.5h1M96 54.5h1M97 54.5h1M3 55.5h1M4 55.5h1M5 55.5h1M6 55.5h1M8 55.5h1M14 55.5h1M22 55.5h1M25 55.5h1M27 55.5h1M35 55.5h1M37 55.5h1M38 55.5h1M43 55.5h1M44 55.5h1M50 55.5h1M52 55.5h1M55 55.5h1M59 55.5h1M63 55.5h1M66 55.5h1M69 55.5h1M70 55.5h1M74 55.5h1M76 55.5h1M81 55.5h1M83 55.5h1M86 55.5h1M89 55.5h1M90 55.5h1M91 55.5h1M92 55.5h1M93 55.5h1M97 55.5h1M99 55.5h1M4 56.5h1M13 56.5h1M17 56.5h1M24 56.5h1M26 56.5h1M29 56.5h1M31 56.5h1M33 56.5h1M34 56.5h1M35 56.5h1M36 56.5h1M41 56.5h1M43 56.5h1M49 56.5h1M51 56.5h1M54 56.5h1M56 56.5h1M58 56.5h1M62 56.5h1M78 56.5h1M81 56.5h1M82 56.5h1M83 56.5h1M84 56.5h1M87 56.5h1M89 56.5h1M92 56.5h1M96 56.5h1M97 56.5h1M99 56.5h1M0 57.5h1M5 57.5h1M8 57.5h1M12 57.5h1M14 57.5h1M16 57.5h1M18 57.5h1M23 57.5h1M26 57.5h1M28 57.5h1M30 57.5h1M34 57.5h1M35 57.5h1M41 57.5h1M43 57.5h1M44 57.5h1M46 57.5h1M47 57.5h1M53 57.5h1M54 57.5h1M55 57.5h1M56 57.5h1M57 57.5h1M58 57.5h1M62 57.5h1M66 57.5h1M71 57.5h1M72 57.5h1M73 57.5h1M76 57.5h1M78 57.5h1M81 57.5h1M88 57.5h1M89 57.5h1M91 57.5h1M93 57.5h1M96 57.5h1M2 58.5h1M3 58.5h1M8 58.5h1M9 58.5h1M18 58.5h1M21 58.5h1M24 58.5h1M25 58.5h1M32 58.5h1M35 58.5h1M41 58.5h1M42 58.5h1M46 58.5h1M54 58.5h1M57 58.5h1M58 58.5h1M68 58.5h1M72 58.5h1M78 58.5h1M79 58.5h1M86 58.5h1M89 58.5h1M91 58.5h1M93 58.5h1M97 58.5h1M5 59.5h1M7 59.5h1M14 59.5h1M17 59.5h1M19 59.5h1M22 59.5h1M27 59.5h1M29 59.5h1M33 59.5h1M41 59.5h1M44 59.5h1M45 59.5h1M46 59.5h1M47 59.5h1M49 59.5h1M53 59.5h1M54 59.5h1M59 59.5h1M61 59.5h1M63 59.5h1M64 59.5h1M67 59.5h1M74 59.5h1M75 59.5h1M77 59.5h1M79 59.5h1M84 59.5h1M85 59.5h1M87 59.5h1M89 59.5h1M92 59.5h1M98 59.5h1M99 59.5h1M3 60.5h1M8 60.5h1M10 60.5h1M13 60.5h1M15 60.5h1M16 60.5h1M24 60.5h1M26 60.5h1M27 60.5h1M28 60.5h1M29 60.5h1M33 60.5h1M37 60.5h1M38 60.5h1M41 60.5h1M48 60.5h1M52 60.5h1M54 60.5h1M66 60.5h1M69 60.5h1M72 60.5h1M73 60.5h1M75 60.5h1M76 60.5h1M77 60.5h1M78 60.5h1M86 60.5h1M90 60.5h1M94 60.5h1M95 60.5h1M96 60.5h1M0 61.5h1M1 61.5h1M2 61.5h1M4 61.5h1M8 61.5h1M17 61.5h1M18 61.5h1M19 61.5h1M21 61.5h1M22 61.5h1M25 61.5h1M27 61.5h1M29 61.5h1M34 61.5h1M35 61.5h1M39 61.5h1M44 61.5h1M47 61.5h1M53 61.5h1M55 61.5h1M56 61.5h1M58 61.5h1M59 61.5h1M63 61.5h1M76 61.5h1M82 61.5h1M84 61.5h1M87 61.5h1M90 61.5h1M1 62.5h1M3 62.5h1M6 62.5h1M11 62.5h1M12 62.5h1M14 62.5h1M15 62.5h1M19 62.5h1M24 62.5h1M26 62.5h1M32 62.5h1M34 62.5h1M36 62.5h1M39 62.5h1M50 62.5h1M52 62.5h1M61 62.5h1M67 62.5h1M70 62.5h1M74 62.5h1M81 62.5h1M84 62.5h1M97 62.5h1M0 63.5h1M5 63.5h1M8 63.5h1M18 63.5h1M19 63.5h1M21 63.5h1M28 63.5h1M29 63.5h1M34 63.5h1M37 63.5h1M43 63.5h1M45 63.5h1M46 63.5h1M51 63.5h1M53 63.5h1M56 63.5h1M58 63.5h1M61 63.5h1M63 63.5h1M64 63.5h1M68 63.5h1M71 63.5h1M76 63.5h1M79 63.5h1M85 63.5h1M86 63.5h1M89 63.5h1M93 63.5h1M0 64.5h1M1 64.5h1M18 64.5h1M19 64.5h1M21 64.5h1M22 64.5h1M25 64.5h1M26 64.5h1M28 64.5h1M29 64.5h1M30 64.5h1M37 64.5h1M38 64.5h1M39 64.5h1M41 64.5h1M42 64.5h1M45 64.5h1M46 64.5h1M47 64.5h1M65 64.5h1M66 64.5h1M72 64.5h1M74 64.5h1M82 64.5h1M84 64.5h1M85 64.5h1M86 64.5h1M91 64.5h1M92 64.5h1M94 64.5h1M95 64.5h1M99 64.5h1M0 65.5h1M1 65.5h1M16 65.5h1M18 65.5h1M20 65.5h1M29 65.5h1M35 65.5h1M37 65.5h1M38 65.5h1M41 65.5h1M44 65.5h1M46 65.5h1M48 65.5h1M52 65.5h1M55 65.5h1M58 65.5h1M59 65.5h1M60 65.5h1M61 65.5h1M63 65.5h1M72 65.5h1M26 95.5h1M28 95.5h1M29 95.5h1M33 95.5h1M35 95.5h1M36 95.5h1M37 95.5h1M41 95.5h1M44 95.5h1M51 95.5h1M54 95.5h1M57 95.5h1M58 95.5h1M63 95.5h1M64 95.5h1M65 95.5h1M78 95.5h1M79 95.5h1M82 95.5h1M85 95.5h1M89 95.5h1M91 95.5h1M92 95.5h1M95 95.5h1M99 95.5h1M0 96.5h1M2 96.5h1M3 96.5h1M7 96.5h1M13 96.5h1M14 96.5h1M15 96.5h1M22 96.5h1M36 96.5h1M41 96.5h1M45 96.5h1M47 96.5h1M48 96.5h1M49 96.5h1M54 96.5h1M67 96.5h1M76 96.5h1M82 96.5h1M84 96.5h1M85 96.5h1M88 96.5h1M96 96.5h1M99 96.5h1M0 97.5h1M1 97.5h1M2 97.5h1M3 97.5h1M9 97.5h1M13 97.5h1M18 97.5h1M25 97.5h1M26 97.5h1M29 97.5h1M35 97.5h1M39 97.5h1M40 97.5h1M41 97.5h1M45 97.5h1M53 97.5h1M59 97.5h1M66 97.5h1M67 97.5h1M69 97.5h1M70 97.5h1M71 97.5h1M72 97.5h1M76 97.5h1M79 97.5h1M82 97.5h1M84 97.5h1M86 97.5h1M87 97.5h1M91 97.5h1M92 97.5h1M95 97.5h1M98 97.5h1M3 98.5h1M4 98.5h1M6 98.5h1M7 98.5h1M15 98.5h1M16 98.5h1M18 98.5h1M41 98.5h1M46 98.5h1M47 98.5h1M49 98.5h1M56 98.5h1M58 98.5h1M67 98.5h1M74 98.5h1M82 98.5h1M85 98.5h1M86 98.5h1M89 98.5h1M96 98.5h1M99 98.5h1M0 99.5h1M4 99.5h1M7 99.5h1M9 99.5h1M22 99.5h1M23 99.5h1M29 99.5h1M33 99.5h1M38 99.5h1M49 99.5h1M52 99.5h1M53 99.5h1M62 99.5h1M66 99.5h1M68 99.5h1M69 99.5h1M73 99.5h1M74 99.5h1M76 99.5h1M82 99.5h1M86 99.5h1M87 99.5h1M88 99.5h1M89 99.5h1M91 99.5h1M94 99.5h1M99 99.5h1M0 100.5h1M1 100.5h1M4 100.5h1M7 100.5h1M9 100.5h1M11 100.5h1M14 100.5h1M15 100.5h1M24 100.5h1M25 100.5h1M26 100.5h1M27 100.5h1M28 100.5h1M29 100.5h1M31 100.5h1M33 100.5h1M34 100.5h1M37 100.5h1M38 100.5h1M43 100.5h1M49 100.5h1M53 100.5h1M63 100.5h1M66 100.5h1M68 100.5h1M77 100.5h1M85 100.5h1M87 100.5h1M90 100.5h1M92 100.5h1M93 100.5h1M95 100.5h1M96 100.5h1M2 101.5h1M3 101.5h1M4 101.5h1M5 101.5h1M13 101.5h1M18 101.5h1M19 101.5h1M21 101.5h1M22 101.5h1M24 101.5h1M27 101.5h1M28 101.5h1M33 101.5h1M41 101.5h1M42 101.5h1M48 101.5h1M55 101.5h1M57 101.5h1M61 101.5h1M62 101.5h1M66 101.5h1M71 101.5h1M73 101.5h1M76 101.5h1M78 101.5h1M79 101.5h1M85 101.5h1M86 101.5h1M88 101.5h1M92 101.5h1M93 101.5h1M95 101.5h1M96 101.5h1M0 102.5h1M3 102.5h1M4 102.5h1M5 102.5h1M12 102.5h1M13 102.5h1M16 102.5h1M19 102.5h1M24 102.5h1M25 102.5h1M26 102.5h1M29 102.5h1M32 102.5h1M34 102.5h1M46 102.5h1M52 102.5h1M56 102.5h1M57 102.5h1M62 102.5h1M63 102.5h1M66 102.5h1M75 102.5h1M76 102.5h1M80 102.5h1M83 102.5h1M86 102.5h1M89 102.5h1M94 102.5h1M96 102.5h1M7 103.5h1M11 103.5h1M14 103.5h1M16 103.5h1M17 103.5h1M18 103.5h1M21 103.5h1M24 103.5h1M25 103.5h1M26 103.5h1M29 103.5h1M32 103.5h1M35 103.5h1M39 103.5h1M42 103.5h1M43 103.5h1M44 103.5h1M46 103.5h1M47 103.5h1M49 103.5h1M50 103.5h1M57 103.5h1M59 103.5h1M67 103.5h1M68 103.5h1M72 103.5h1M74 103.5h1M78 103.5h1M79 103.5h1M84 103.5h1M85 103.5h1M86 103.5h1M91 103.5h1M93 103.5h1M98 103.5h1M1 104.5h1M3 104.5h1M7 104.5h1M8 104.5h1M9 104.5h1M11 104.5h1M12 104.5h1M14 104.5h1M16 104.5h1M17 104.5h1M18 104.5h1M26 104.5h1M27 104.5h1M28 104.5h1M32 104.5h1M34 104.5h1M36 104.5h1M39 104.5h1M44 104.5h1M64 104.5h1M74 104.5h1M76 104.5h1M77 104.5h1M81 104.5h1M84 104.5h1M85 104.5h1M86 104.5h1M87 104.5h1M88 104.5h1M91 104.5h1M92 104.5h1M94 104.5h1M95 104.5h1M96 104.5h1M98 104.5h1M3 105.5h1M7 105.5h1M8 105.5h1M11 105.5h1M12 105.5h1M14 105.5h1M15 105.5h1M17 105.5h1M21 105.5h1M23 105.5h1M25 105.5h1M26 105.5h1M27 105.5h1M29 105.5h1M31 105.5h1M35 105.5h1M36 105.5h1M37 105.5h1M43 105.5h1M45 105.5h1M51 105.5h1M52 105.5h1M58 105.5h1M63 105.5h1M72 105.5h1M73 105.5h1M76 105.5h1M80 105.5h1M82 105.5h1M86 105.5h1M89 105.5h1M94 105.5h1M95 105.5h1M97 105.5h1M0 106.5h1M1 106.5h1M2 106.5h1M5 106.5h1M6 106.5h1M11 106.5h1M12 106.5h1M16 106.5h1M18 106.5h1M19 106.5h1M20 106.5h1M21 106.5h1M23 106.5h1M28 106.5h1M29 106.5h1M30 106.5h1M37 106.5h1M41 106.5h1M44 106.5h1M47 106.5h1M49 106.5h1M51 106.5h1M52 106.5h1M58 106.5h1M66 106.5h1M68 106.5h1M69 106.5h1M71 106.5h1M72 106.5h1M74 106.5h1M78 106.5h1M82 106.5h1M85 106.5h1M88 106.5h1M90 106.5h1M92 106.5h1M93 106.5h1M96 106.5h1M98 106.5h1M1 107.5h1M3 107.5h1M9 107.5h1M11 107.5h1M14 107.5h1M16 107.5h1M27 107.5h1M31 107.5h1M33 107.5h1M42 107.5h1M45 107.5h1M48 107.5h1M51 107.5h1M53 107.5h1M54 107.5h1M57 107.5h1M61 107.5h1M66 107.5h1M68 107.5h1M78 107.5h1M81 107.5h1M82 107.5h1M84 107.5h1M85 107.5h1M87 107.5h1M89 107.5h1M92 107.5h1M93 107.5h1M94 107.5h1M96 107.5h1M97 107.5h1M99 107.5h1M27 108.5h1M31 108.5h1M43 108.5h1M47 108.5h1M48 108.5h1M68 108.5h1M71 108.5h1M79 108.5h1M82 108.5h1M87 108.5h1M89 108.5h1M92 108.5h1M95 108.5h1M97 108.5h1M1 109.5h1M2 109.5h1M3 109.5h1M5 109.5h1M8 109.5h1M15 109.5h1M16 109.5h1M17 109.5h1M19 109.5h1M23 109.5h1M26 109.5h1M27 109.5h1M33 109.5h1M35 109.5h1M44 109.5h1M45 109.5h1M47 109.5h1M49 109.5h1M52 109.5h1M55 109.5h1M57 109.5h1M58 109.5h1M67 109.5h1M69 109.5h1M77 109.5h1M78 109.5h1M81 109.5h1M82 109.5h1M85 109.5h1M87 109.5h1M90 109.5h1M94 109.5h1M99 109.5h1M2 110.5h1M3 110.5h1M8 110.5h1M13 110.5h1M15 110.5h1M23 110.5h1M26 110.5h1M27 110.5h1M29 110.5h1M31 110.5h1M34 110.5h1M36 110.5h1M37 110.5h1M47 110.5h1M49 110.5h1M52 110.5h1M54 110.5h1M57 110.5h1M62 110.5h1M63 110.5h1M66 110.5h1M71 110.5h1M73 110.5h1M74 110.5h1M76 110.5h1M80 110.5h1M85 110.5h1M87 110.5h1M88 110.5h1M90 110.5h1M92 110.5h1M96 110.5h1M99 110.5h1M0 111.5h1M1 111.5h1M2 111.5h1M9 111.5h1M19 111.5h1M21 111.5h1M23 111.5h1M24 111.5h1M25 111.5h1M32 111.5h1M34 111.5h1M43 111.5h1M44 111.5h1M45 111.5h1M48 111.5h1M54 111.5h1M57 111.5h1M58 111.5h1M61 111.5h1M62 111.5h1M64 111.5h1M66 111.5h1M67 111.5h1M75 111.5h1M78 111.5h1M82 111.5h1M83 111.5h1M85 111.5h1M87 111.5h1M88 111.5h1M94 111.5h1M96 111.5h1M98 111.5h1M99 111.5h1M3 112.5h1M4 112.5h1M5 112.5h1M7 112.5h1M8 112.5h1M19 112.5h1M32 112.5h1M34 112.5h1M35 112.5h1M36 112.5h1M37 112.5h1M45 112.5h1M46 112.5h1M47 112.5h1M48 112.5h1M51 112.5h1M52 112.5h1M56 112.5h1M59 112.5h1M65 112.5h1M67 112.5h1M71 112.5h1M76 112.5h1M78 112.5h1M86 112.5h1M89 112.5h1M93 112.5h1M96 112.5h1M97 112.5h1M2 113.5h1M3 113.5h1M8 113.5h1M9 113.5h1M11 113.5h1M18 113.5h1M21 113.5h1M28 113.5h1M29 113.5h1M31 113.5h1M33 113.5h1M34 113.5h1M35 113.5h1M38 113.5h1M45 113.5h1M48 113.5h1M49 113.5h1M50 113.5h1M52 113.5h1M63 113.5h1M69 113.5h1M73 113.5h1M75 113.5h1M80 113.5h1M84 113.5h1M85 113.5h1M90 113.5h1M93 113.5h1M1 114.5h1M2 114.5h1M6 114.5h1M7 114.5h1M11 114.5h1M17 114.5h1M19 114.5h1M21 114.5h1M23 114.5h1M24 114.5h1M37 114.5h1M44 114.5h1M48 114.5h1M54 114.5h1M62 114.5h1M63 114.5h1M68 114.5h1M73 114.5h1M75 114.5h1M77 114.5h1M79 114.5h1M84 114.5h1M85 114.5h1M88 114.5h1M89 114.5h1M91 114.5h1M97 114.5h1M4 115.5h1M10 115.5h1M11 115.5h1M12 115.5h1M13 115.5h1M15 115.5h1M28 115.5h1M38 115.5h1M39 115.5h1M44 115.5h1M51 115.5h1M52 115.5h1M61 115.5h1M63 115.5h1M64 115.5h1M65 115.5h1M72 115.5h1M74 115.5h1M80 115.5h1M87 115.5h1M88 115.5h1M92 115.5h1M93 115.5h1M99 115.5h1M2 116.5h1M3 116.5h1M4 116.5h1M5 116.5h1M6 116.5h1M7 116.5h1M8 116.5h1M11 116.5h1M13 116.5h1M15 116.5h1M22 116.5h1M26 116.5h1M35 116.5h1M36 116.5h1M39 116.5h1M40 116.5h1M42 116.5h1M43 116.5h1M49 116.5h1M56 116.5h1M65 116.5h1M66 116.5h1M69 116.5h1M73 116.5h1M74 116.5h1M78 116.5h1M84 116.5h1M86 116.5h1M89 116.5h1M92 116.5h1M94 116.5h1M1 117.5h1M3 117.5h1M4 117.5h1M5 117.5h1M7 117.5h1M12 117.5h1M13 117.5h1M17 117.5h1M18 117.5h1M24 117.5h1M26 117.5h1M27 117.5h1M32 117.5h1M41 117.5h1M45 117.5h1M51 117.5h1M53 117.5h1M56 117.5h1M57 117.5h1M58 117.5h1M59 117.5h1M61 117.5h1M63 117.5h1M66 117.5h1M67 117.5h1M73 117.5h1M75 117.5h1M76 117.5h1M79 117.5h1M83 117.5h1M84 117.5h1M85 117.5h1M86 117.5h1M89 117.5h1M91 117.5h1M95 117.5h1M97 117.5h1M98 117.5h1M99 117.5h1M5 118.5h1M6 118.5h1M8 118.5h1M16 118.5h1M23 118.5h1M24 118.5h1M26 118.5h1M29 118.5h1M32 118.5h1M33 118.5h1M35 118.5h1M38 118.5h1M39 118.5h1M45 118.5h1M46 118.5h1M49 118.5h1M54 118.5h1M56 118.5h1M59 118.5h1M65 118.5h1M66 118.5h1M68 118.5h1M71 118.5h1M79 118.5h1M84 118.5h1M86 118.5h1M87 118.5h1M89 118.5h1M93 118.5h1M98 118.5h1M0 119.5h1M4 119.5h1M5 119.5h1M7 119.5h1M11 119.5h1M13 119.5h1M18 119.5h1M25 119.5h1M29 119.5h1M35 119.5h1M36 119.5h1M44 119.5h1M47 119.5h1M49 119.5h1M52 119.5h1M53 119.5h1M55 119.5h1M56 119.5h1M59 119.5h1M65 119.5h1M66 119.5h1M82 119.5h1M84 119.5h1M88 119.5h1M89 119.5h1M92 119.5h1M93 119.5h1M98 119.5h1M0 120.5h1M7 120.5h1M9 120.5h1M13 120.5h1M19 120.5h1M27 120.5h1M28 120.5h1M29 120.5h1M32 120.5h1M34 120.5h1M37 120.5h1M43 120.5h1M44 120.5h1M45 120.5h1M46 120.5h1M47 120.5h1M49 120.5h1M50 120.5h1M54 120.5h1M57 120.5h1M59 120.5h1M61 120.5h1M62 120.5h1M63 120.5h1M64 120.5h1M66 120.5h1M69 120.5h1M73 120.5h1M76 120.5h1M77 120.5h1M78 120.5h1M82 120.5h1M83 120.5h1M84 120.5h1M89 120.5h1M92 120.5h1M94 120.5h1M99 120.5h1M2 121.5h1M4 121.5h1M9 121.5h1M11 121.5h1M13 121.5h1M15 121.5h1M19 121.5h1M23 121.5h1M24 121.5h1M27 121.5h1M28 121.5h1M29 121.5h1M31 121.5h1M34 121.5h1M39 121.5h1M41 121.5h1M43 121.5h1M45 121.5h1M52 121.5h1M53 121.5h1M60 121.5h1M63 121.5h1M64 121.5h1M66 121.5h1M67 121.5h1M69 121.5h1M71 121.5h1M74 121.5h1M78 121.5h1M82 121.5h1M83 121.5h1M86 121.5h1M92 121.5h1M94 121.5h1M96 121.5h1M97 121.5h1M99 121.5h1M0 122.5h1M2 122.5h1M3 122.5h1M4 122.5h1M5 122.5h1M9 122.5h1M11 122.5h1M13 122.5h1M14 122.5h1M16 122.5h1M19 122.5h1M21 122.5h1M22 122.5h1M23 122.5h1M24 122.5h1M27 122.5h1M28 122.5h1M29 122.5h1M31 122.5h1M33 122.5h1M35 122.5h1M36 122.5h1M41 122.5h1M44 122.5h1M46 122.5h1M47 122.5h1M48 122.5h1M51 122.5h1M52 122.5h1M55 122.5h1M62 122.5h1M63 122.5h1M66 122.5h1M68 122.5h1M69 122.5h1M73 122.5h1M76 122.5h1M77 122.5h1M78 122.5h1M80 122.5h1M81 122.5h1M88 122.5h1M91 122.5h1M92 122.5h1M93 122.5h1M94 122.5h1M97 122.5h1M0 123.5h1M1 123.5h1M2 123.5h1M8 123.5h1M19 123.5h1M23 123.5h1M24 123.5h1M25 123.5h1M26 123.5h1M29 123.5h1M33 123.5h1M34 123.5h1M35 123.5h1M37 123.5h1M38 123.5h1M39 123.5h1M41 123.5h1M42 123.5h1M43 123.5h1M45 123.5h1M48 123.5h1M51 123.5h1M57 123.5h1M63 123.5h1M64 123.5h1M65 123.5h1M66 123.5h1M67 123.5h1M71 123.5h1M74 123.5h1M75 123.5h1M76 123.5h1M78 123.5h1M81 123.5h1M84 123.5h1M85 123.5h1M87 123.5h1M88 123.5h1M91 123.5h1M94 123.5h1M95 123.5h1M96 123.5h1M97 123.5h1M99 123.5h1M1 124.5h1M3 124.5h1M4 124.5h1M6 124.5h1M11 124.5h1M12 124.5h1M13 124.5h1M14 124.5h1M15 124.5h1M16 124.5h1M18 124.5h1M19 124.5h1M21 124.5h1M24 124.5h1M25 124.5h1M26 124.5h1M27 124.5h1M32 124.5h1M34 124.5h1M35 124.5h1M36 124.5h1M37 124.5h1M40 124.5h1M44 124.5h1M45 124.5h1M48 124.5h1M51 124.5h1M52 124.5h1M53 124.5h1M58 124.5h1M63 124.5h1M64 124.5h1M65 124.5h1M68 124.5h1M71 124.5h1M72 124.5h1M79 124.5h1M81 124.5h1M82 124.5h1M83 124.5h1M88 124.5h1M91 124.5h1M92 124.5h1M93 124.5h1M95 124.5h1M96 124.5h1M98 124.5h1M2 125.5h1M4 125.5h1M5 125.5h1M7 125.5h1M13 125.5h1M14 125.5h1M18 125.5h1M19 125.5h1M22 125.5h1M25 125.5h1M26 125.5h1M32 125.5h1M34 125.5h1M38 125.5h1M44 125.5h1M46 125.5h1M49 125.5h1M51 125.5h1M54 125.5h1M58 125.5h1M61 125.5h1M62 125.5h1M63 125.5h1M66 125.5h1M71 125.5h1M72 125.5h1M78 125.5h1M82 125.5h1M83 125.5h1M85 125.5h1M89 125.5h1M92 125.5h1M97 125.5h1M99 125.5h1M2 126.5h1M4 126.5h1M9 126.5h1M13 126.5h1M15 126.5h1M17 126.5h1M19 126.5h1M26 126.5h1M27 126.5h1M28 126.5h1M31 126.5h1M33 126.5h1M34 126.5h1M35 126.5h1M39 126.5h1M44 126.5h1M46 126.5h1M47 126.5h1M48 126.5h1M49 126.5h1M51 126.5h1M52 126.5h1M53 126.5h1M54 126.5h1M57 126.5h1M58 126.5h1M59 126.5h1M61 126.5h1M62 126.5h1M63 126.5h1M64 126.5h1M66 126.5h1M68 126.5h1M69 126.5h1M71 126.5h1M74 126.5h1M76 126.5h1M77 126.5h1M79 126.5h1M81 126.5h1M83 126.5h1M89 126.5h1M91 126.5h1M94 126.5h1M99 126.5h1M0 127.5h1M3 127.5h1M4 127.5h1M5 127.5h1M6 127.5h1M7 127.5h1M8 127.5h1M9 127.5h1M12 127.5h1M14 127.5h1M17 127.5h1M19 127.5h1M22 127.5h1M23 127.5h1M24 127.5h1M26 127.5h1M27 127.5h1M28 127.5h1M29 127.5h1M33 127.5h1M34 127.5h1M35 127.5h1M36 127.5h1M39 127.5h1M43 127.5h1M44 127.5h1M47 127.5h1M49 127.5h1M52 127.5h1M53 127.5h1M54 127.5h1M55 127.5h1M59 127.5h1M68 127.5h1M69 127.5h1M72 127.5h1M73 127.5h1M74 127.5h1M75 127.5h1M77 127.5h1M82 127.5h1M84 127.5h1M85 127.5h1M89 127.5h1M91 127.5h1M93 127.5h1M96 127.5h1M98 127.5h1M99 127.5h1M2 129.5h1M5 129.5h1M8 129.5h1M9 129.5h1M11 129.5h1M12 129.5h1M13 129.5h1M14 129.5h1M15 129.5h1M19 129.5h1M23 129.5h1M31 129.5h1M33 129.5h1M34 129.5h1M35 129.5h1M36 129.5h1M37 129.5h1M38 129.5h1M39 129.5h1M41 129.5h1M43 129.5h1M46 129.5h1M47 129.5h1M49 129.5h1M52 129.5h1M54 129.5h1M55 129.5h1M56 129.5h1M58 129.5h1M59 129.5h1M61 129.5h1M62 129.5h1M63 129.5h1M65 129.5h1M66 129.5h1M67 129.5h1M68 129.5h1M72 129.5h1M73 129.5h1M74 129.5h1M75 129.5h1M76 129.5h1M79 129.5h1M85 129.5h1M95 129.5h1M98 129.5h1M0 130.5h1M3 130.5h1M5 130.5h1M8 130.5h1M14 130.5h1M16 130.5h1M18 130.5h1M21 130.5h1M23 130.5h1M24 130.5h1M28 130.5h1M29 130.5h1M31 130.5h1M32 130.5h1M33 130.5h1M35 130.5h1M37 130.5h1M41 130.5h1M42 130.5h1M43 130.5h1M44 130.5h1M47 130.5h1M48 130.5h1M52 130.5h1M53 130.5h1M54 130.5h1M58 130.5h1M59 130.5h1M62 130.5h1M64 130.5h1M65 130.5h1M67 130.5h1M72 130.5h1M73 130.5h1M77 130.5h1M78 130.5h1M79 130.5h1M81 130.5h1M84 130.5h1M94 130.5h1M95 130.5h1M97 130.5h1M2 131.5h1M4 131.5h1M19 131.5h1M22 131.5h1M32 131.5h1M38 131.5h1M39 131.5h1M54 131.5h1M57 131.5h1M58 131.5h1M65 131.5h1M71 131.5h1M75 131.5h1M78 131.5h1M79 131.5h1M82 131.5h1M85 131.5h1M87 131.5h1M88 131.5h1M93 131.5h1M95 131.5h1M99 131.5h1M1 132.5h1M5 132.5h1M6 132.5h1M12 132.5h1M13 132.5h1M15 132.5h1M17 132.5h1M18 132.5h1M19 132.5h1M24 132.5h1M28 132.5h1M29 132.5h1M34 132.5h1M36 132.5h1M38 132.5h1M39 132.5h1M41 132.5h1M45 132.5h1M46 132.5h1M47 132.5h1M48 132.5h1M49 132.5h1M52 132.5h1M53 132.5h1M57 132.5h1M58 132.5h1M59 132.5h1M61 132.5h1M65 132.5h1M68 132.5h1M72 132.5h1M75 132.5h1M77 132.5h1M81 132.5h1M82 132.5h1M83 132.5h1M85 132.5h1M88 132.5h1M89 132.5h1M93 132.5h1M94 132.5h1M96 132.5h1M97 132.5h1M1 133.5h1M4 133.5h1M6 133.5h1M8 133.5h1M12 133.5h1M13 133.5h1M14 133.5h1M15 133.5h1M21 133.5h1M22 133.5h1M27 133.5h1M29 133.5h1M32 133.5h1M33 133.5h1M38 133.5h1M39 133.5h1M43 133.5h1M46 133.5h1M49 133.5h1M53 133.5h1M57 133.5h1M58 133.5h1M65 133.5h1M66 133.5h1M68 133.5h1M69 133.5h1M71 133.5h1M72 133.5h1M76 133.5h1M77 133.5h1M78 133.5h1M79 133.5h1M83 133.5h1M84 133.5h1M88 133.5h1M95 133.5h1M97 133.5h1M98 133.5h1M0 134.5h1M2 134.5h1M4 134.5h1M8 134.5h1M11 134.5h1M12 134.5h1M13 134.5h1M14 134.5h1M16 134.5h1M22 134.5h1M23 134.5h1M25 134.5h1M26 134.5h1M27 134.5h1M28 134.5h1M31 134.5h1M33 134.5h1M34 134.5h1M35 134.5h1M39 134.5h1M40 134.5h1M44 134.5h1M46 134.5h1M47 134.5h1M49 134.5h1M51 134.5h1M55 134.5h1M63 134.5h1M65 134.5h1M66 134.5h1M67 134.5h1M68 134.5h1M71 134.5h1M74 134.5h1M76 134.5h1M77 134.5h1M78 134.5h1M79 134.5h1M83 134.5h1M84 134.5h1M86 134.5h1M87 134.5h1M89 134.5h1M92 134.5h1M95 134.5h1M97 134.5h1M98 134.5h1M2 135.5h1M3 135.5h1M6 135.5h1M7 135.5h1M8 135.5h1M11 135.5h1M12 135.5h1M13 135.5h1M15 135.5h1M16 135.5h1M19 135.5h1M21 135.5h1M23 135.5h1M24 135.5h1M25 135.5h1M32 135.5h1M34 135.5h1M35 135.5h1M36 135.5h1M39 135.5h1M41 135.5h1M43 135.5h1M44 135.5h1M45 135.5h1M47 135.5h1M52 135.5h1M54 135.5h1M55 135.5h1M57 135.5h1M59 135.5h1M62 135.5h1M63 135.5h1M66 135.5h1M69 135.5h1M72 135.5h1M73 135.5h1M75 135.5h1M77 135.5h1M79 135.5h1M84 135.5h1M87 135.5h1M89 135.5h1M92 135.5h1M93 135.5h1M96 135.5h1M99 135.5h1M5 136.5h1M7 136.5h1M8 136.5h1M12 136.5h1M13 136.5h1M17 136.5h1M18 136.5h1M19 136.5h1M28 136.5h1M31 136.5h1M33 136.5h1M36 136.5h1M38 136.5h1M41 136.5h1M44 136.5h1M46 136.5h1M47 136.5h1M48 136.5h1M49 136.5h1M54 136.5h1M55 136.5h1M56 136.5h1M57 136.5h1M59 136.5h1M61 136.5h1M64 136.5h1M65 136.5h1M67 136.5h1M68 136.5h1M73 136.5h1M75 136.5h1M78 136.5h1M79 136.5h1M81 136.5h1M82 136.5h1M84 136.5h1M87 136.5h1M91 136.5h1M92 136.5h1M94 136.5h1M95 136.5h1M96 136.5h1M97 136.5h1M98 136.5h1M99 136.5h1M1 137.5h1M3 137.5h1M8 137.5h1M14 137.5h1M15 137.5h1M16 137.5h1M17 137.5h1M19 137.5h1M24 137.5h1M25 137.5h1M26 137.5h1M27 137.5h1M29 137.5h1M31 137.5h1M33 137.5h1M35 137.5h1M37 137.5h1M38 137.5h1M39 137.5h1M41 137.5h1M48 137.5h1M51 137.5h1M52 137.5h1M53 137.5h1M55 137.5h1M62 137.5h1M64 137.5h1M67 137.5h1M68 137.5h1M69 137.5h1M72 137.5h1M74 137.5h1M79 137.5h1M81 137.5h1M85 137.5h1M91 137.5h1M92 137.5h1M95 137.5h1M96 137.5h1M47 138.5h1M79 138.5h1M81 138.5h1M0 139.5h1M3 139.5h1M5 139.5h1M9 139.5h1M11 139.5h1M13 139.5h1M14 139.5h1M16 139.5h1M19 139.5h1M23 139.5h1M24 139.5h1M25 139.5h1M26 139.5h1M27 139.5h1M28 139.5h1M29 139.5h1M31 139.5h1M33 139.5h1M36 139.5h1M37 139.5h1M39 139.5h1M41 139.5h1M42 139.5h1M46 139.5h1M48 139.5h1M49 139.5h1M51 139.5h1M52 139.5h1M53 139.5h1M55 139.5h1M56 139.5h1M58 139.5h1M62 139.5h1M66 139.5h1M73 139.5h1M77 139.5h1M81 139.5h1M84 139.5h1M87 139.5h1M89 139.5h1M91 139.5h1M92 139.5h1M93 139.5h1M96 139.5h1M5 140.5h1M6 140.5h1M7 140.5h1M9 140.5h1M13 140.5h1M14 140.5h1M16 140.5h1M19 140.5h1M21 140.5h1M23 140.5h1M25 140.5h1M27 140.5h1M28 140.5h1M33 140.5h1M36 140.5h1M38 140.5h1M39 140.5h1M42 140.5h1M45 140.5h1M46 140.5h1M47 140.5h1M49 140.5h1M53 140.5h1M56 140.5h1M58 140.5h1M61 140.5h1M62 140.5h1M69 140.5h1M74 140.5h1M77 140.5h1M78 140.5h1M79 140.5h1M84 140.5h1M85 140.5h1M86 140.5h1M88 140.5h1M89 140.5h1M91 140.5h1M93 140.5h1M95 140.5h1M98 140.5h1M3 141.5h1M4 141.5h1M5 141.5h1M7 141.5h1M12 141.5h1M15 141.5h1M23 141.5h1M24 141.5h1M25 141.5h1M28 141.5h1M31 141.5h1M32 141.5h1M33 141.5h1M38 141.5h1M39 141.5h1M44 141.5h1M47 141.5h1M48 141.5h1M49 141.5h1M53 141.5h1M57 141.5h1M61 141.5h1M63 141.5h1M67 141.5h1M68 141.5h1M69 141.5h1M72 141.5h1M76 141.5h1M78 141.5h1M79 141.5h1M81 141.5h1M83 141.5h1M85 141.5h1M86 141.5h1M88 141.5h1M91 141.5h1M93 141.5h1M94 141.5h1M98 141.5h1M0 142.5h1M9 142.5h1M18 142.5h1M19 142.5h1M21 142.5h1M23 142.5h1M24 142.5h1M28 142.5h1M31 142.5h1M34 142.5h1M35 142.5h1M36 142.5h1M37 142.5h1M38 142.5h1M42 142.5h1M56 142.5h1M65 142.5h1M67 142.5h1M69 142.5h1M71 142.5h1M74 142.5h1M76 142.5h1M81 142.5h1M82 142.5h1M88 142.5h1M93 142.5h1M94 142.5h1M95 142.5h1M97 142.5h1M99 142.5h1M6 143.5h1M8 143.5h1M11 143.5h1M14 143.5h1M15 143.5h1M16 143.5h1M21 143.5h1M25 143.5h1M27 143.5h1M28 143.5h1M32 143.5h1M34 143.5h1M35 143.5h1M36 143.5h1M37 143.5h1M38 143.5h1M39 143.5h1M43 143.5h1M44 143.5h1M46 143.5h1M50 143.5h1M52 143.5h1M54 143.5h1M55 143.5h1M63 143.5h1M68 143.5h1M69 143.5h1M70 143.5h1M71 143.5h1M72 143.5h1M75 143.5h1M78 143.5h1M86 143.5h1M87 143.5h1M88 143.5h1M89 143.5h1M91 143.5h1M92 143.5h1M93 143.5h1M94 143.5h1M95 143.5h1M99 143.5h1M0 144.5h1M2 144.5h1M4 144.5h1M7 144.5h1M9 144.5h1M14 144.5h1M15 144.5h1M16 144.5h1M19 144.5h1M24 144.5h1M27 144.5h1M28 144.5h1M31 144.5h1M34 144.5h1M37 144.5h1M39 144.5h1M42 144.5h1M45 144.5h1M47 144.5h1M48 144.5h1M52 144.5h1M53 144.5h1M55 144.5h1M56 144.5h1M57 144.5h1M59 144.5h1M61 144.5h1M62 144.5h1M69 144.5h1M71 144.5h1M73 144.5h1M75 144.5h1M76 144.5h1M81 144.5h1M83 144.5h1M84 144.5h1M85 144.5h1M86 144.5h1M88 144.5h1M89 144.5h1M95 144.5h1M97 144.5h1M98 144.5h1M99 144.5h1M2 145.5h1M4 145.5h1M9 145.5h1M12 145.5h1M15 145.5h1M16 145.5h1M18 145.5h1M21 145.5h1M24 145.5h1M27 145.5h1M28 145.5h1M39 145.5h1M41 145.5h1M44 145.5h1M45 145.5h1M46 145.5h1M53 145.5h1M54 145.5h1M55 145.5h1M56 145.5h1M58 145.5h1M62 145.5h1M69 145.5h1M72 145.5h1M74 145.5h1M85 145.5h1M89 145.5h1M92 145.5h1M95 145.5h1M97 145.5h1M0 146.5h1M2 146.5h1M3 146.5h1M5 146.5h1M13 146.5h1M22 146.5h1M23 146.5h1M25 146.5h1M33 146.5h1M36 146.5h1M42 146.5h1M44 146.5h1M47 146.5h1M48 146.5h1M54 146.5h1M59 146.5h1M66 146.5h1M69 146.5h1M71 146.5h1M72 146.5h1M73 146.5h1M74 146.5h1M75 146.5h1M76 146.5h1M77 146.5h1M78 146.5h1M81 146.5h1M83 146.5h1M87 146.5h1M89 146.5h1M93 146.5h1M98 146.5h1M99 146.5h1M0 147.5h1M2 147.5h1M3 147.5h1M6 147.5h1M12 147.5h1M14 147.5h1M16 147.5h1M17 147.5h1M19 147.5h1M22 147.5h1M23 147.5h1M28 147.5h1M33 147.5h1M37 147.5h1M42 147.5h1M43 147.5h1M44 147.5h1M45 147.5h1M47 147.5h1M51 147.5h1M52 147.5h1M53 147.5h1M55 147.5h1M57 147.5h1M59 147.5h1M62 147.5h1M64 147.5h1M65 147.5h1M66 147.5h1M71 147.5h1M72 147.5h1M73 147.5h1M75 147.5h1M77 147.5h1M82 147.5h1M83 147.5h1M85 147.5h1M92 147.5h1M95 147.5h1M13 148.5h1M27 148.5h1M38 148.5h1M56 148.5h1M72 148.5h1" stroke="#265722"/>
<path d="M74 65.5h1M77 65.5h1M78 65.5h1M79 65.5h1M87 65.5h1M91 65.5h1M93 65.5h1M94 65.5h1M97 65.5h1M99 65.5h1M3 66.5h1M13 66.5h1M14 66.5h1M16 66.5h1M18 66.5h1M19 66.5h1M21 66.5h1M24 66.5h1M26 66.5h1M27 66.5h1M28 66.5h1M41 66.5h1M43 66.5h1M48 66.5h1M49 66.5h1M55 66.5h1M56 66.5h1M57 66.5h1M69 66.5h1M71 66.5h1M73 66.5h1M77 66.5h1M88 66.5h1M89 66.5h1M91 66.5h1M93 66.5h1M96 66.5h1M2 67.5h1M3 67.5h1M5 67.5h1M6 67.5h1M9 67.5h1M12 67.5h1M13 67.5h1M15 67.5h1M17 67.5h1M21 67.5h1M22 67.5h1M27 67.5h1M28 67.5h1M32 67.5h1M39 67.5h1M42 67.5h1M44 67.5h1M47 67.5h1M48 67.5h1M53 67.5h1M55 67.5h1M64 67.5h1M65 67.5h1M71 67.5h1M74 67.5h1M77 67.5h1M83 67.5h1M84 67.5h1M89 67.5h1M93 67.5h1M94 67.5h1M99 67.5h1M89 68.5h1M1 69.5h1M4 69.5h1M6 69.5h1M11 69.5h1M14 69.5h1M16 69.5h1M19 69.5h1M21 69.5h1M22 69.5h1M23 69.5h1M24 69.5h1M31 69.5h1M34 69.5h1M36 69.5h1M37 69.5h1M39 69.5h1M42 69.5h1M48 69.5h1M56 69.5h1M61 69.5h1M67 69.5h1M73 69.5h1M74 69.5h1M75 69.5h1M76 69.5h1M78 69.5h1M79 69.5h1M82 69.5h1M83 69.5h1M84 69.5h1M87 69.5h1M89 69.5h1M91 69.5h1M92 69.5h1M4 70.5h1M6 70.5h1M11 70.5h1M12 70.5h1M18 70.5h1M23 70.5h1M27 70.5h1M28 70.5h1M33 70.5h1M35 70.5h1M36 70.5h1M37 70.5h1M39 70.5h1M47 70.5h1M51 70.5h1M53 70.5h1M54 70.5h1M57 70.5h1M58 70.5h1M66 70.5h1M68 70.5h1M74 70.5h1M84 70.5h1M85 70.5h1M87 70.5h1M89 70.5h1M94 70.5h1M95 70.5h1M1 71.5h1M2 71.5h1M3 71.5h1M5 71.5h1M6 71.5h1M8 71.5h1M15 71.5h1M25 71.5h1M28 71.5h1M29 71.5h1M31 71.5h1M34 71.5h1M37 71.5h1M43 71.5h1M44 71.5h1M46 71.5h1M47 71.5h1M49 71.5h1M62 71.5h1M64 71.5h1M66 71.5h1M67 71.5h1M68 71.5h1M74 71.5h1M76 71.5h1M77 71.5h1M78 71.5h1M79 71.5h1M92 71.5h1M93 71.5h1M94 71.5h1M96 71.5h1M1 72.5h1M5 72.5h1M8 72.5h1M9 72.5h1M14 72.5h1M15 72.5h1M17 72.5h1M22 72.5h1M24 72.5h1M25 72.5h1M26 72.5h1M27 72.5h1M29 72.5h1M32 72.5h1M33 72.5h1M36 72.5h1M39 72.5h1M43 72.5h1M46 72.5h1M49 72.5h1M56 72.5h1M57 72.5h1M61 72.5h1M68 72.5h1M69 72.5h1M71 72.5h1M72 72.5h1M73 72.5h1M76 72.5h1M78 72.5h1M86 72.5h1M91 72.5h1M94 72.5h1M95 72.5h1M3 73.5h1M6 73.5h1M9 73.5h1M13 73.5h1M17 73.5h1M19 73.5h1M26 73.5h1M28 73.5h1M33 73.5h1M35 73.5h1M36 73.5h1M37 73.5h1M39 73.5h1M42 73.5h1M51 73.5h1M54 73.5h1M59 73.5h1M62 73.5h1M65 73.5h1M66 73.5h1M67 73.5h1M68 73.5h1M75 73.5h1M82 73.5h1M89 73.5h1M94 73.5h1M98 73.5h1M3 74.5h1M6 74.5h1M8 74.5h1M11 74.5h1M13 74.5h1M16 74.5h1M19 74.5h1M21 74.5h1M23 74.5h1M25 74.5h1M29 74.5h1M32 74.5h1M33 74.5h1M34 74.5h1M38 74.5h1M39 74.5h1M44 74.5h1M52 74.5h1M53 74.5h1M59 74.5h1M67 74.5h1M69 74.5h1M73 74.5h1M75 74.5h1M77 74.5h1M81 74.5h1M88 74.5h1M89 74.5h1M95 74.5h1M97 74.5h1M98 74.5h1M99 74.5h1M3 75.5h1M7 75.5h1M8 75.5h1M9 75.5h1M11 75.5h1M12 75.5h1M13 75.5h1M17 75.5h1M24 75.5h1M26 75.5h1M33 75.5h1M34 75.5h1M39 75.5h1M52 75.5h1M54 75.5h1M63 75.5h1M66 75.5h1M76 75.5h1M79 75.5h1M84 75.5h1M87 75.5h1M98 75.5h1M4 76.5h1M7 76.5h1M16 76.5h1M17 76.5h1M23 76.5h1M24 76.5h1M28 76.5h1M39 76.5h1M42 76.5h1M44 76.5h1M46 76.5h1M47 76.5h1M51 76.5h1M55 76.5h1M56 76.5h1M66 76.5h1M72 76.5h1M73 76.5h1M75 76.5h1M76 76.5h1M77 76.5h1M78 76.5h1M83 76.5h1M86 76.5h1M87 76.5h1M91 76.5h1M92 76.5h1M93 76.5h1M99 76.5h1M0 77.5h1M3 77.5h1M6 77.5h1M7 77.5h1M11 77.5h1M12 77.5h1M17 77.5h1M19 77.5h1M21 77.5h1M22 77.5h1M24 77.5h1M43 77.5h1M48 77.5h1M57 77.5h1M58 77.5h1M59 77.5h1M71 77.5h1M78 77.5h1M79 77.5h1M82 77.5h1M88 77.5h1M91 77.5h1M94 77.5h1M98 77.5h1M99 77.5h1M48 78.5h1M4 79.5h1M8 79.5h1M13 79.5h1M16 79.5h1M19 79.5h1M23 79.5h1M25 79.5h1M27 79.5h1M31 79.5h1M33 79.5h1M35 79.5h1M38 79.5h1M39 79.5h1M42 79.5h1M43 79.5h1M49 79.5h1M54 79.5h1M56 79.5h1M61 79.5h1M63 79.5h1M68 79.5h1M69 79.5h1M73 79.5h1M75 79.5h1M76 79.5h1M77 79.5h1M88 79.5h1M89 79.5h1M93 79.5h1M95 79.5h1M97 79.5h1M4 80.5h1M7 80.5h1M9 80.5h1M11 80.5h1M14 80.5h1M15 80.5h1M18 80.5h1M19 80.5h1M21 80.5h1M24 80.5h1M31 80.5h1M32 80.5h1M33 80.5h1M35 80.5h1M37 80.5h1M42 80.5h1M43 80.5h1M44 80.5h1M45 80.5h1M46 80.5h1M58 80.5h1M59 80.5h1M61 80.5h1M63 80.5h1M64 80.5h1M65 80.5h1M67 80.5h1M69 80.5h1M73 80.5h1M74 80.5h1M75 80.5h1M78 80.5h1M83 80.5h1M88 80.5h1M89 80.5h1M91 80.5h1M93 80.5h1M96 80.5h1M98 80.5h1M6 81.5h1M15 81.5h1M16 81.5h1M26 81.5h1M31 81.5h1M39 81.5h1M45 81.5h1M47 81.5h1M51 81.5h1M53 81.5h1M54 81.5h1M56 81.5h1M57 81.5h1M59 81.5h1M61 81.5h1M62 81.5h1M64 81.5h1M67 81.5h1M68 81.5h1M71 81.5h1M74 81.5h1M81 81.5h1M83 81.5h1M84 81.5h1M86 81.5h1M88 81.5h1M92 81.5h1M96 81.5h1M9 82.5h1M11 82.5h1M15 82.5h1M17 82.5h1M19 82.5h1M23 82.5h1M24 82.5h1M25 82.5h1M28 82.5h1M31 82.5h1M35 82.5h1M36 82.5h1M37 82.5h1M45 82.5h1M47 82.5h1M55 82.5h1M59 82.5h1M63 82.5h1M66 82.5h1M74 82.5h1M92 82.5h1M96 82.5h1M97 82.5h1M98 82.5h1M0 83.5h1M4 83.5h1M5 83.5h1M6 83.5h1M12 83.5h1M15 83.5h1M18 83.5h1M19 83.5h1M24 83.5h1M25 83.5h1M29 83.5h1M39 83.5h1M45 83.5h1M47 83.5h1M57 83.5h1M65 83.5h1M66 83.5h1M68 83.5h1M76 83.5h1M83 83.5h1M85 83.5h1M86 83.5h1M87 83.5h1M92 83.5h1M93 83.5h1M94 83.5h1M96 83.5h1M97 83.5h1M99 83.5h1M1 84.5h1M11 84.5h1M12 84.5h1M16 84.5h1M17 84.5h1M18 84.5h1M27 84.5h1M31 84.5h1M37 84.5h1M38 84.5h1M39 84.5h1M47 84.5h1M54 84.5h1M55 84.5h1M66 84.5h1M67 84.5h1M71 84.5h1M74 84.5h1M77 84.5h1M78 84.5h1M79 84.5h1M85 84.5h1M1 85.5h1M3 85.5h1M5 85.5h1M6 85.5h1M8 85.5h1M9 85.5h1M11 85.5h1M16 85.5h1M17 85.5h1M21 85.5h1M25 85.5h1M27 85.5h1M29 85.5h1M38 85.5h1M41 85.5h1M45 85.5h1M51 85.5h1M54 85.5h1M55 85.5h1M61 85.5h1M64 85.5h1M65 85.5h1M67 85.5h1M68 85.5h1M71 85.5h1M75 85.5h1M76 85.5h1M82 85.5h1M88 85.5h1M92 85.5h1M97 85.5h1M4 86.5h1M8 86.5h1M9 86.5h1M16 86.5h1M19 86.5h1M22 86.5h1M23 86.5h1M25 86.5h1M26 86.5h1M28 86.5h1M29 86.5h1M31 86.5h1M37 86.5h1M44 86.5h1M45 86.5h1M48 86.5h1M51 86.5h1M58 86.5h1M64 86.5h1M66 86.5h1M68 86.5h1M69 86.5h1M74 86.5h1M79 86.5h1M83 86.5h1M86 86.5h1M89 86.5h1M91 86.5h1M97 86.5h1M98 86.5h1M99 86.5h1M2 87.5h1M3 87.5h1M4 87.5h1M6 87.5h1M7 87.5h1M11 87.5h1M12 87.5h1M28 87.5h1M31 87.5h1M35 87.5h1M39 87.5h1M53 87.5h1M61 87.5h1M66 87.5h1M73 87.5h1M81 87.5h1M84 87.5h1M85 87.5h1M86 87.5h1M87 87.5h1M94 87.5h1M98 87.5h1M51 88.5h1M5 89.5h1M8 89.5h1M9 89.5h1M12 89.5h1M25 89.5h1M27 89.5h1M39 89.5h1M43 89.5h1M47 89.5h1M49 89.5h1M51 89.5h1M55 89.5h1M56 89.5h1M57 89.5h1M61 89.5h1M62 89.5h1M64 89.5h1M67 89.5h1M75 89.5h1M78 89.5h1M84 89.5h1M88 89.5h1M92 89.5h1M0 90.5h1M2 90.5h1M5 90.5h1M7 90.5h1M8 90.5h1M13 90.5h1M23 90.5h1M32 90.5h1M33 90.5h1M34 90.5h1M37 90.5h1M45 90.5h1M46 90.5h1M47 90.5h1M48 90.5h1M53 90.5h1M61 90.5h1M64 90.5h1M69 90.5h1M75 90.5h1M76 90.5h1M78 90.5h1M81 90.5h1M85 90.5h1M89 90.5h1M92 90.5h1M98 90.5h1M1 91.5h1M6 91.5h1M14 91.5h1M17 91.5h1M19 91.5h1M22 91.5h1M24 91.5h1M26 91.5h1M33 91.5h1M35 91.5h1M36 91.5h1M38 91.5h1M43 91.5h1M54 91.5h1M56 91.5h1M62 91.5h1M67 91.5h1M75 91.5h1M79 91.5h1M83 91.5h1M86 91.5h1M88 91.5h1M89 91.5h1M93 91.5h1M97 91.5h1M98 91.5h1M99 91.5h1M5 92.5h1M6 92.5h1M13 92.5h1M14 92.5h1M15 92.5h1M17 92.5h1M24 92.5h1M25 92.5h1M31 92.5h1M34 92.5h1M35 92.5h1M42 92.5h1M43 92.5h1M59 92.5h1M64 92.5h1M67 92.5h1M73 92.5h1M75 92.5h1M77 92.5h1M78 92.5h1M79 92.5h1M82 92.5h1M83 92.5h1M87 92.5h1M92 92.5h1M93 92.5h1M99 92.5h1M5 93.5h1M6 93.5h1M18 93.5h1M22 93.5h1M24 93.5h1M26 93.5h1M28 93.5h1M31 93.5h1M36 93.5h1M37 93.5h1M45 93.5h1M46 93.5h1M47 93.5h1M48 93.5h1M52 93.5h1M56 93.5h1M61 93.5h1M62 93.5h1M64 93.5h1M66 93.5h1M71 93.5h1M72 93.5h1M75 93.5h1M78 93.5h1M79 93.5h1M86 93.5h1M87 93.5h1M91 93.5h1M92 93.5h1M97 93.5h1M98 93.5h1M11 94.5h1M13 94.5h1M14 94.5h1M15 94.5h1M19 94.5h1M31 94.5h1M32 94.5h1M37 94.5h1M38 94.5h1M41 94.5h1M46 94.5h1M52 94.5h1M55 94.5h1M58 94.5h1M62 94.5h1M64 94.5h1M73 94.5h1M74 94.5h1M78 94.5h1M83 94.5h1M85 94.5h1M88 94.5h1M92 94.5h1M94 94.5h1M5 95.5h1M6 95.5h1M13 95.5h1M15 95.5h1M19 95.5h1" stroke="#c98317"/>
<path d="M1 0.5h1M2 0.5h1M5 0.5h1M8 0.5h1M13 0.5h1M16 0.5h1M20 0.5h1M24 0.5h1M26 0.5h1M31 0.5h1M32 0.5h1M33 0.5h1M34 0.5h1M38 0.5h1M41 0.5h1M43 0.5h1M54 0.5h1M57 0.5h1M58 0.5h1M63 0.5h1M64 0.5h1M69 0.5h1M72 0.5h1M75 0.5h1M78 0.5h1M82 0.5h1M84 0.5h1M0 1.5h1M2 1.5h1M5 1.5h1M6 1.5h1M9 1.5h1M10 1.5h1M13 1.5h1M16 1.5h1M17 1.5h1M19 1.5h1M21 1.5h1M23 1.5h1M29 1.5h1M31 1.5h1M34 1.5h1M35 1.5h1M36 1.5h1M37 1.5h1M41 1.5h1M43 1.5h1M47 1.5h1M54 1.5h1M60 1.5h1M64 1.5h1M75 1.5h1M76 1.5h1M77 1.5h1M81 1.5h1M91 1.5h1M93 1.5h1M94 1.5h1M96 1.5h1M97 1.5h1M2 2.5h1M8 2.5h1M10 2.5h1M11 2.5h1M15 2.5h1M17 2.5h1M27 2.5h1M32 2.5h1M36 2.5h1M45 2.5h1M49 2.5h1M52 2.5h1M57 2.5h1M62 2.5h1M66 2.5h1M73 2.5h1M75 2.5h1M77 2.5h1M83 2.5h1M84 2.5h1M87 2.5h1M88 2.5h1M99 2.5h1M1 3.5h1M4 3.5h1M9 3.5h1M12 3.5h1M13 3.5h1M14 3.5h1M17 3.5h1M18 3.5h1M22 3.5h1M23 3.5h1M24 3.5h1M25 3.5h1M26 3.5h1M30 3.5h1M31 3.5h1M34 3.5h1M35 3.5h1M38 3.5h1M41 3.5h1M42 3.5h1M44 3.5h1M45 3.5h1M46 3.5h1M50 3.5h1M51 3.5h1M52 3.5h1M56 3.5h1M58 3.5h1M59 3.5h1M60 3.5h1M61 3.5h1M63 3.5h1M69 3.5h1M70 3.5h1M72 3.5h1M74 3.5h1M75 3.5h1M77 3.5h1M86 3.5h1M87 3.5h1M89 3.5h1M92 3.5h1M97 3.5h1M3 4.5h1M4 4.5h1M7 4.5h1M8 4.5h1M15 4.5h1M19 4.5h1M22 4.5h1M25 4.5h1M27 4.5h1M30 4.5h1M33 4.5h1M38 4.5h1M41 4.5h1M47 4.5h1M48 4.5h1M51 4.5h1M53 4.5h1M64 4.5h1M68 4.5h1M70 4.5h1M73 4.5h1M76 4.5h1M81 4.5h1M83 4.5h1M85 4.5h1M88 4.5h1M95 4.5h1M96 4.5h1M3 5.5h1M4 5.5h1M5 5.5h1M7 5.5h1M10 5.5h1M11 5.5h1M13 5.5h1M15 5.5h1M22 5.5h1M27 5.5h1M28 5.5h1M30 5.5h1M32 5.5h1M33 5.5h1M34 5.5h1M39 5.5h1M42 5.5h1M48 5.5h1M51 5.5h1M55 5.5h1M56 5.5h1M65 5.5h1M67 5.5h1M69 5.5h1M74 5.5h1M76 5.5h1M78 5.5h1M90 5.5h1M91 5.5h1M92 5.5h1M93 5.5h1M0 6.5h1M3 6.5h1M10 6.5h1M14 6.5h1M17 6.5h1M24 6.5h1M25 6.5h1M26 6.5h1M28 6.5h1M46 6.5h1M48 6.5h1M51 6.5h1M52 6.5h1M55 6.5h1M59 6.5h1M62 6.5h1M72 6.5h1M84 6.5h1M91 6.5h1M93 6.5h1M95 6.5h1M99 6.5h1M0 7.5h1M1 7.5h1M5 7.5h1M6 7.5h1M8 7.5h1M9 7.5h1M14 7.5h1M16 7.5h1M17 7.5h1M22 7.5h1M24 7.5h1M26 7.5h1M29 7.5h1M36 7.5h1M38 7.5h1M39 7.5h1M42 7.5h1M44 7.5h1M51 7.5h1M54 7.5h1M55 7.5h1M63 7.5h1M66 7.5h1M68 7.5h1M74 7.5h1M75 7.5h1M77 7.5h1M79 7.5h1M84 7.5h1M88 7.5h1M96 7.5h1M97 7.5h1M9 8.5h1M11 8.5h1M12 8.5h1M26 8.5h1M35 8.5h1M36 8.5h1M39 8.5h1M41 8.5h1M49 8.5h1M51 8.5h1M62 8.5h1M69 8.5h1M73 8.5h1M77 8.5h1M81 8.5h1M93 8.5h1M97 8.5h1M98 8.5h1M0 9.5h1M3 9.5h1M4 9.5h1M14 9.5h1M17 9.5h1M22 9.5h1M23 9.5h1M27 9.5h1M30 9.5h1M38 9.5h1M40 9.5h1M47 9.5h1M51 9.5h1M56 9.5h1M57 9.5h1M58 9.5h1M62 9.5h1M63 9.5h1M64 9.5h1M67 9.5h1M71 9.5h1M72 9.5h1M73 9.5h1M75 9.5h1M78 9.5h1M79 9.5h1M80 9.5h1M82 9.5h1M86 9.5h1M90 9.5h1M99 9.5h1M0 10.5h1M1 10.5h1M4 10.5h1M14 10.5h1M15 10.5h1M16 10.5h1M18 10.5h1M23 10.5h1M24 10.5h1M26 10.5h1M28 10.5h1M39 10.5h1M42 10.5h1M43 10.5h1M48 10.5h1M49 10.5h1M50 10.5h1M55 10.5h1M57 10.5h1M58 10.5h1M59 10.5h1M65 10.5h1M66 10.5h1M69 10.5h1M74 10.5h1M76 10.5h1M83 10.5h1M87 10.5h1M91 10.5h1M98 10.5h1M0 11.5h1M1 11.5h1M3 11.5h1M4 11.5h1M7 11.5h1M9 11.5h1M14 11.5h1M30 11.5h1M34 11.5h1M42 11.5h1M47 11.5h1M49 11.5h1M54 11.5h1M56 11.5h1M58 11.5h1M61 11.5h1M64 11.5h1M66 11.5h1M68 11.5h1M75 11.5h1M76 11.5h1M77 11.5h1M82 11.5h1M92 11.5h1M98 11.5h1M3 12.5h1M7 12.5h1M11 12.5h1M15 12.5h1M18 12.5h1M23 12.5h1M28 12.5h1M29 12.5h1M36 12.5h1M40 12.5h1M41 12.5h1M46 12.5h1M51 12.5h1M54 12.5h1M57 12.5h1M59 12.5h1M61 12.5h1M65 12.5h1M67 12.5h1M68 12.5h1M78 12.5h1M90 12.5h1M93 12.5h1M96 12.5h1M0 13.5h1M1 13.5h1M8 13.5h1M28 13.5h1M31 13.5h1M36 13.5h1M37 13.5h1M43 13.5h1M45 13.5h1M47 13.5h1M48 13.5h1M52 13.5h1M53 13.5h1M58 13.5h1M64 13.5h1M66 13.5h1M69 13.5h1M71 13.5h1M72 13.5h1M74 13.5h1M75 13.5h1M76 13.5h1M82 13.5h1M85 13.5h1M93 13.5h1M98 13.5h1M0 14.5h1M1 14.5h1M2 14.5h1M4 14.5h1M8 14.5h1M9 14.5h1M18 14.5h1M19 14.5h1M24 14.5h1M25 14.5h1M26 14.5h1M28 14.5h1M29 14.5h1M33 14.5h1M34 14.5h1M35 14.5h1M41 14.5h1M44 14.5h1M51 14.5h1M56 14.5h1M59 14.5h1M62 14.5h1M74 14.5h1M77 14.5h1M78 14.5h1M81 14.5h1M84 14.5h1M85 14.5h1M86 14.5h1M90 14.5h1M99 14.5h1M0 15.5h1M3 15.5h1M4 15.5h1M5 15.5h1M10 15.5h1M18 15.5h1M21 15.5h1M26 15.5h1M41 15.5h1M47 15.5h1M51 15.5h1M52 15.5h1M53 15.5h1M55 15.5h1M62 15.5h1M64 15.5h1M65 15.5h1M71 15.5h1M77 15.5h1M80 15.5h1M84 15.5h1M88 15.5h1M89 15.5h1M90 15.5h1M92 15.5h1M97 15.5h1M0 16.5h1M1 16.5h1M3 16.5h1M4 16.5h1M19 16.5h1M22 16.5h1M26 16.5h1M27 16.5h1M31 16.5h1M36 16.5h1M41 16.5h1M45 16.5h1M47 16.5h1M51 16.5h1M53 16.5h1M57 16.5h1M58 16.5h1M59 16.5h1M72 16.5h1M75 16.5h1M80 16.5h1M85 16.5h1M91 16.5h1M94 16.5h1M95 16.5h1M99 16.5h1M0 17.5h1M12 17.5h1M18 17.5h1M27 17.5h1M29 17.5h1M30 17.5h1M32 17.5h1M35 17.5h1M36 17.5h1M41 17.5h1M42 17.5h1M57 17.5h1M61 17.5h1M63 17.5h1M64 17.5h1M68 17.5h1M71 17.5h1M82 17.5h1M84 17.5h1M88 17.5h1M89 17.5h1M92 17.5h1M98 17.5h1M5 18.5h1M7 18.5h1M8 18.5h1M12 18.5h1M13 18.5h1M15 18.5h1M16 18.5h1M17 18.5h1M21 18.5h1M22 18.5h1M23 18.5h1M27 18.5h1M28 18.5h1M30 18.5h1M31 18.5h1M33 18.5h1M35 18.5h1M36 18.5h1M37 18.5h1M38 18.5h1M44 18.5h1M46 18.5h1M49 18.5h1M54 18.5h1M61 18.5h1M63 18.5h1M65 18.5h1M68 18.5h1M72 18.5h1M73 18.5h1M76 18.5h1M77 18.5h1M78 18.5h1M81 18.5h1M82 18.5h1M83 18.5h1M84 18.5h1M86 18.5h1M87 18.5h1M88 18.5h1M93 18.5h1M95 18.5h1M96 18.5h1M99 18.5h1M4 19.5h1M5 19.5h1M6 19.5h1M7 19.5h1M8 19.5h1M16 19.5h1M17 19.5h1M19 19.5h1M21 19.5h1M22 19.5h1M24 19.5h1M25 19.5h1M27 19.5h1M31 19.5h1M37 19.5h1M42 19.5h1M51 19.5h1M52 19.5h1M55 19.5h1M63 19.5h1M66 19.5h1M68 19.5h1M69 19.5h1M73 19.5h1M74 19.5h1M77 19.5h1M78 19.5h1M82 19.5h1M84 19.5h1M85 19.5h1M91 19.5h1M92 19.5h1M94 19.5h1M95 19.5h1M0 20.5h1M5 20.5h1M8 20.5h1M9 20.5h1M11 20.5h1M12 20.5h1M15 20.5h1M21 20.5h1M22 20.5h1M25 20.5h1M28 20.5h1M30 20.5h1M34 20.5h1M36 20.5h1M37 20.5h1M38 20.5h1M42 20.5h1M44 20.5h1M45 20.5h1M47 20.5h1M49 20.5h1M50 20.5h1M64 20.5h1M73 20.5h1M74 20.5h1M78 20.5h1M79 20.5h1M81 20.5h1M82 20.5h1M86 20.5h1M96 20.5h1M98 20.5h1M1 21.5h1M3 21.5h1M13 21.5h1M16 21.5h1M18 21.5h1M20 21.5h1M23 21.5h1M25 21.5h1M36 21.5h1M45 21.5h1M48 21.5h1M49 21.5h1M50 21.5h1M51 21.5h1M53 21.5h1M55 21.5h1M56 21.5h1M58 21.5h1M60 21.5h1M63 21.5h1M69 21.5h1M72 21.5h1M77 21.5h1M79 21.5h1M80 21.5h1M85 21.5h1M92 21.5h1M95 21.5h1M97 21.5h1M1 22.5h1M3 22.5h1M6 22.5h1M14 22.5h1M17 22.5h1M18 22.5h1M24 22.5h1M26 22.5h1M29 22.5h1M34 22.5h1M37 22.5h1M40 22.5h1M42 22.5h1M43 22.5h1M45 22.5h1M47 22.5h1M48 22.5h1M54 22.5h1M56 22.5h1M57 22.5h1M61 22.5h1M73 22.5h1M81 22.5h1M82 22.5h1M94 22.5h1M0 23.5h1M1 23.5h1M12 23.5h1M13 23.5h1M16 23.5h1M19 23.5h1M21 23.5h1M22 23.5h1M25 23.5h1M26 23.5h1M27 23.5h1M28 23.5h1M29 23.5h1M35 23.5h1M37 23.5h1M43 23.5h1M45 23.5h1M50 23.5h1M64 23.5h1M72 23.5h1M76 23.5h1M79 23.5h1M80 23.5h1M82 23.5h1M86 23.5h1M87 23.5h1M91 23.5h1M93 23.5h1M98 23.5h1M1 24.5h1M11 24.5h1M16 24.5h1M18 24.5h1M19 24.5h1M25 24.5h1M27 24.5h1M33 24.5h1M36 24.5h1M40 24.5h1M45 24.5h1M46 24.5h1M48 24.5h1M56 24.5h1M63 24.5h1M64 24.5h1M69 24.5h1M71 24.5h1M73 24.5h1M75 24.5h1M76 24.5h1M81 24.5h1M82 24.5h1M83 24.5h1M86 24.5h1M91 24.5h1M92 24.5h1M93 24.5h1M94 24.5h1M95 24.5h1M99 24.5h1M0 25.5h1M1 25.5h1M4 25.5h1M6 25.5h1M11 25.5h1M13 25.5h1M14 25.5h1M17 25.5h1M25 25.5h1M34 25.5h1M37 25.5h1M38 25.5h1M41 25.5h1M44 25.5h1M51 25.5h1M57 25.5h1M61 25.5h1M68 25.5h1M71 25.5h1M74 25.5h1M75 25.5h1M76 25.5h1M78 25.5h1M81 25.5h1M82 25.5h1M83 25.5h1M85 25.5h1M86 25.5h1M87 25.5h1M97 25.5h1M98 25.5h1M0 26.5h1M1 26.5h1M3 26.5h1M4 26.5h1M5 26.5h1M6 26.5h1M9 26.5h1M12 26.5h1M14 26.5h1M16 26.5h1M22 26.5h1M24 26.5h1M26 26.5h1M29 26.5h1M33 26.5h1M34 26.5h1M36 26.5h1M37 26.5h1M41 26.5h1M42 26.5h1M45 26.5h1M46 26.5h1M47 26.5h1M49 26.5h1M51 26.5h1M52 26.5h1M53 26.5h1M55 26.5h1M56 26.5h1M64 26.5h1M68 26.5h1M69 26.5h1M70 26.5h1M71 26.5h1M74 26.5h1M75 26.5h1M76 26.5h1M79 26.5h1M94 26.5h1M96 26.5h1M97 26.5h1M98 26.5h1M99 26.5h1M4 27.5h1M5 27.5h1M6 27.5h1M7 27.5h1M9 27.5h1M11 27.5h1M12 27.5h1M13 27.5h1M16 27.5h1M18 27.5h1M21 27.5h1M25 27.5h1M26 27.5h1M27 27.5h1M31 27.5h1M33 27.5h1M35 27.5h1M38 27.5h1M41 27.5h1M43 27.5h1M46 27.5h1M47 27.5h1M52 27.5h1M55 27.5h1M57 27.5h1M58 27.5h1M61 27.5h1M63 27.5h1M64 27.5h1M65 27.5h1M66 27.5h1M68 27.5h1M70 27.5h1M74 27.5h1M75 27.5h1M76 27.5h1M77 27.5h1M78 27.5h1M79 27.5h1M81 27.5h1M82 27.5h1M87 27.5h1M88 27.5h1M92 27.5h1M95 27.5h1M96 27.5h1M99 27.5h1M0 29.5h1M2 29.5h1M3 29.5h1M5 29.5h1M6 29.5h1M8 29.5h1M11 29.5h1M13 29.5h1M14 29.5h1M16 29.5h1M17 29.5h1M18 29.5h1M22 29.5h1M25 29.5h1M26 29.5h1M27 29.5h1M29 29.5h1M33 29.5h1M41 29.5h1M42 29.5h1M43 29.5h1M45 29.5h1M47 29.5h1M48 29.5h1M49 29.5h1M52 29.5h1M56 29.5h1M57 29.5h1M59 29.5h1M61 29.5h1M62 29.5h1M64 29.5h1M65 29.5h1M67 29.5h1M73 29.5h1M76 29.5h1M81 29.5h1M82 29.5h1M87 29.5h1M91 29.5h1M93 29.5h1M95 29.5h1M96 29.5h1M97 29.5h1M99 29.5h1M0 30.5h1M3 30.5h1M4 30.5h1M6 30.5h1M8 30.5h1M13 30.5h1M16 30.5h1M17 30.5h1M21 30.5h1M22 30.5h1M24 30.5h1M29 30.5h1M32 30.5h1M33 30.5h1M34 30.5h1M38 30.5h1M39 30.5h1M44 30.5h1M48 30.5h1M54 30.5h1M56 30.5h1M59 30.5h1M60 30.5h1M61 30.5h1M64 30.5h1M67 30.5h1M69 30.5h1M71 30.5h1M73 30.5h1M77 30.5h1M80 30.5h1M82 30.5h1M86 30.5h1M88 30.5h1M94 30.5h1M96 30.5h1M99 30.5h1M0 31.5h1M2 31.5h1M4 31.5h1M6 31.5h1M7 31.5h1M8 31.5h1M14 31.5h1M15 31.5h1M18 31.5h1M21 31.5h1M24 31.5h1M25 31.5h1M26 31.5h1M27 31.5h1M31 31.5h1M33 31.5h1M34 31.5h1M35 31.5h1M36 31.5h1M39 31.5h1M42 31.5h1M43 31.5h1M48 31.5h1M49 31.5h1M51 31.5h1M53 31.5h1M55 31.5h1M62 31.5h1M64 31.5h1M66 31.5h1M67 31.5h1M68 31.5h1M71 31.5h1M72 31.5h1M74 31.5h1M77 31.5h1M78 31.5h1M81 31.5h1M86 31.5h1M87 31.5h1M88 31.5h1M89 31.5h1M91 31.5h1M93 31.5h1M99 31.5h1M1 32.5h1M2 32.5h1M7 32.5h1M9 32.5h1M11 32.5h1M26 32.5h1M27 32.5h1M28 32.5h1M31 32.5h1M35 32.5h1M41 32.5h1M42 32.5h1M46 32.5h1M47 32.5h1M48 32.5h1M49 32.5h1M51 32.5h1M52 32.5h1M53 32.5h1M54 32.5h1M58 32.5h1M61 32.5h1M64 32.5h1M67 32.5h1M68 32.5h1M71 32.5h1M74 32.5h1M75 32.5h1M76 32.5h1M77 32.5h1M78 32.5h1M81 32.5h1M85 32.5h1M86 32.5h1M91 32.5h1M93 32.5h1M95 32.5h1M98 32.5h1M2 33.5h1M3 33.5h1M5 33.5h1M6 33.5h1M7 33.5h1M8 33.5h1M12 33.5h1M15 33.5h1M16 33.5h1M17 33.5h1M28 33.5h1M32 33.5h1M34 33.5h1M35 33.5h1M37 33.5h1M38 33.5h1M39 33.5h1M41 33.5h1M52 33.5h1M53 33.5h1M55 33.5h1M56 33.5h1M62 33.5h1M65 33.5h1M67 33.5h1M69 33.5h1M72 33.5h1M73 33.5h1M74 33.5h1M75 33.5h1M79 33.5h1M83 33.5h1M84 33.5h1M86 33.5h1M87 33.5h1M88 33.5h1M93 33.5h1M94 33.5h1M98 33.5h1M2 34.5h1M4 34.5h1M5 34.5h1M7 34.5h1M8 34.5h1M12 34.5h1M14 34.5h1M17 34.5h1M18 34.5h1M23 34.5h1M24 34.5h1M25 34.5h1M29 34.5h1M38 34.5h1M39 34.5h1M41 34.5h1M42 34.5h1M43 34.5h1M47 34.5h1M51 34.5h1M52 34.5h1M53 34.5h1M55 34.5h1M57 34.5h1M59 34.5h1M63 34.5h1M64 34.5h1M77 34.5h1M78 34.5h1M83 34.5h1M85 34.5h1M89 34.5h1M91 34.5h1M94 34.5h1M95 34.5h1M97 34.5h1M1 35.5h1M2 35.5h1M3 35.5h1M4 35.5h1M5 35.5h1M8 35.5h1M9 35.5h1M11 35.5h1M12 35.5h1M15 35.5h1M16 35.5h1M17 35.5h1M18 35.5h1M19 35.5h1M25 35.5h1M27 35.5h1M28 35.5h1M29 35.5h1M33 35.5h1M35 35.5h1M39 35.5h1M41 35.5h1M42 35.5h1M44 35.5h1M47 35.5h1M48 35.5h1M49 35.5h1M53 35.5h1M55 35.5h1M66 35.5h1M68 35.5h1M75 35.5h1M76 35.5h1M77 35.5h1M78 35.5h1M79 35.5h1M80 35.5h1M84 35.5h1M85 35.5h1M89 35.5h1M91 35.5h1M92 35.5h1M93 35.5h1M95 35.5h1M96 35.5h1M98 35.5h1M7 36.5h1M8 36.5h1M9 36.5h1M13 36.5h1M14 36.5h1M19 36.5h1M31 36.5h1M32 36.5h1M34 36.5h1M37 36.5h1M43 36.5h1M44 36.5h1M48 36.5h1M51 36.5h1M52 36.5h1M53 36.5h1M56 36.5h1M58 36.5h1M59 36.5h1M61 36.5h1M62 36.5h1M63 36.5h1M64 36.5h1M65 36.5h1M66 36.5h1M67 36.5h1M69 36.5h1M71 36.5h1M74 36.5h1M79 36.5h1M82 36.5h1M83 36.5h1M85 36.5h1M88 36.5h1M89 36.5h1M91 36.5h1M94 36.5h1M95 36.5h1M98 36.5h1M2 37.5h1M3 37.5h1M6 37.5h1M7 37.5h1M11 37.5h1M13 37.5h1M14 37.5h1M15 37.5h1M18 37.5h1M21 37.5h1M23 37.5h1M25 37.5h1M26 37.5h1M28 37.5h1M34 37.5h1M35 37.5h1M36 37.5h1M37 37.5h1M38 37.5h1M40 37.5h1M41 37.5h1M43 37.5h1M46 37.5h1M48 37.5h1M49 37.5h1M51 37.5h1M52 37.5h1M53 37.5h1M55 37.5h1M57 37.5h1M58 37.5h1M62 37.5h1M63 37.5h1M64 37.5h1M66 37.5h1M68 37.5h1M71 37.5h1M73 37.5h1M78 37.5h1M79 37.5h1M81 37.5h1M83 37.5h1M84 37.5h1M85 37.5h1M86 37.5h1M87 37.5h1M91 37.5h1M93 37.5h1M94 37.5h1M98 37.5h1M99 37.5h1M12 38.5h1M19 38.5h1M21 38.5h1M23 38.5h1M26 38.5h1M28 38.5h1M45 38.5h1M46 38.5h1M55 38.5h1M56 38.5h1M58 38.5h1M61 38.5h1M69 38.5h1M84 38.5h1M86 38.5h1M92 38.5h1M0 39.5h1M1 39.5h1M2 39.5h1M5 39.5h1M8 39.5h1M9 39.5h1M11 39.5h1M14 39.5h1M17 39.5h1M22 39.5h1M23 39.5h1M24 39.5h1M27 39.5h1M31 39.5h1M34 39.5h1M36 39.5h1M37 39.5h1M41 39.5h1M42 39.5h1M43 39.5h1M46 39.5h1M48 39.5h1M50 39.5h1M55 39.5h1M57 39.5h1M58 39.5h1M59 39.5h1M61 39.5h1M63 39.5h1M68 39.5h1M72 39.5h1M73 39.5h1M76 39.5h1M78 39.5h1M82 39.5h1M88 39.5h1M89 39.5h1M92 39.5h1M93 39.5h1M99 39.5h1M1 40.5h1M5 40.5h1M6 40.5h1M7 40.5h1M8 40.5h1M9 40.5h1M13 40.5h1M15 40.5h1M16 40.5h1M18 40.5h1M19 40.5h1M21 40.5h1M23 40.5h1M31 40.5h1M32 40.5h1M33 40.5h1M37 40.5h1M41 40.5h1M43 40.5h1M46 40.5h1M47 40.5h1M51 40.5h1M53 40.5h1M54 40.5h1M65 40.5h1M67 40.5h1M75 40.5h1M78 40.5h1M79 40.5h1M81 40.5h1M82 40.5h1M83 40.5h1M84 40.5h1M87 40.5h1M88 40.5h1M94 40.5h1M96 40.5h1M0 41.5h1M4 41.5h1M8 41.5h1M9 41.5h1M12 41.5h1M13 41.5h1M15 41.5h1M22 41.5h1M23 41.5h1M31 41.5h1M32 41.5h1M33 41.5h1M38 41.5h1M39 41.5h1M42 41.5h1M43 41.5h1M44 41.5h1M49 41.5h1M51 41.5h1M53 41.5h1M54 41.5h1M55 41.5h1M56 41.5h1M57 41.5h1M58 41.5h1M63 41.5h1M66 41.5h1M67 41.5h1M68 41.5h1M72 41.5h1M74 41.5h1M75 41.5h1M76 41.5h1M81 41.5h1M83 41.5h1M84 41.5h1M85 41.5h1M86 41.5h1M88 41.5h1M92 41.5h1M94 41.5h1M0 42.5h1M2 42.5h1M12 42.5h1M14 42.5h1M19 42.5h1M21 42.5h1M26 42.5h1M28 42.5h1M35 42.5h1M36 42.5h1M37 42.5h1M39 42.5h1M41 42.5h1M42 42.5h1M49 42.5h1M52 42.5h1M55 42.5h1M61 42.5h1M62 42.5h1M64 42.5h1M67 42.5h1M72 42.5h1M75 42.5h1M79 42.5h1M82 42.5h1M83 42.5h1M84 42.5h1M91 42.5h1M92 42.5h1M93 42.5h1M96 42.5h1M98 42.5h1M99 42.5h1M1 43.5h1M6 43.5h1M8 43.5h1M14 43.5h1M18 43.5h1M22 43.5h1M23 43.5h1M24 43.5h1M25 43.5h1M29 43.5h1M30 43.5h1M31 43.5h1M33 43.5h1M34 43.5h1M35 43.5h1M39 43.5h1M40 43.5h1M41 43.5h1M42 43.5h1M44 43.5h1M48 43.5h1M55 43.5h1M57 43.5h1M59 43.5h1M62 43.5h1M70 43.5h1M71 43.5h1M86 43.5h1M97 43.5h1M0 44.5h1M1 44.5h1M3 44.5h1M6 44.5h1M9 44.5h1M19 44.5h1M22 44.5h1M23 44.5h1M25 44.5h1M26 44.5h1M28 44.5h1M29 44.5h1M31 44.5h1M33 44.5h1M38 44.5h1M39 44.5h1M41 44.5h1M43 44.5h1M45 44.5h1M54 44.5h1M58 44.5h1M63 44.5h1M69 44.5h1M72 44.5h1M74 44.5h1M77 44.5h1M79 44.5h1M81 44.5h1M88 44.5h1M89 44.5h1M2 45.5h1M7 45.5h1M12 45.5h1M17 45.5h1M18 45.5h1M20 45.5h1M28 45.5h1M31 45.5h1M32 45.5h1M34 45.5h1M38 45.5h1M41 45.5h1M42 45.5h1M43 45.5h1M45 45.5h1M52 45.5h1M55 45.5h1M57 45.5h1M61 45.5h1M70 45.5h1M73 45.5h1M75 45.5h1M76 45.5h1M79 45.5h1M81 45.5h1M84 45.5h1M88 45.5h1M93 45.5h1M0 46.5h1M6 46.5h1M9 46.5h1M10 46.5h1M13 46.5h1M15 46.5h1M17 46.5h1M21 46.5h1M26 46.5h1M40 46.5h1M54 46.5h1M59 46.5h1M66 46.5h1M73 46.5h1M78 46.5h1M80 46.5h1M86 46.5h1M90 46.5h1M93 46.5h1M96 46.5h1M99 46.5h1M2 47.5h1M8 47.5h1M10 47.5h1M18 47.5h1M23 47.5h1M26 47.5h1M38 47.5h1M40 47.5h1M50 47.5h1M58 47.5h1M64 47.5h1M66 47.5h1M72 47.5h1M78 47.5h1M79 47.5h1M97 47.5h1M5 48.5h1M27 48.5h1M33 48.5h1M39 48.5h1M41 48.5h1M45 48.5h1M67 48.5h1M78 48.5h1M82 48.5h1M87 48.5h1M96 48.5h1M97 48.5h1M11 49.5h1M13 49.5h1M25 49.5h1M48 49.5h1M50 49.5h1M57 49.5h1M59 49.5h1M61 49.5h1M90 49.5h1M6 50.5h1M10 50.5h1M29 50.5h1M44 50.5h1M46 50.5h1M48 50.5h1M49 50.5h1M58 50.5h1M60 50.5h1M61 50.5h1M62 50.5h1M63 50.5h1M70 50.5h1M80 50.5h1M82 50.5h1M89 50.5h1M90 50.5h1M9 51.5h1M19 51.5h1M20 51.5h1M23 51.5h1M30 51.5h1M40 51.5h1M50 51.5h1M60 51.5h1M71 51.5h1M81 51.5h1M2 52.5h1M8 52.5h1M20 52.5h1M21 52.5h1M30 52.5h1M40 52.5h1M44 52.5h1M47 52.5h1M48 52.5h1M50 52.5h1M59 52.5h1M62 52.5h1M67 52.5h1M71 52.5h1M82 52.5h1M85 52.5h1M86 52.5h1M99 52.5h1M0 53.5h1M10 53.5h1M17 53.5h1M20 53.5h1M24 53.5h1M25 53.5h1M31 53.5h1M35 53.5h1M41 53.5h1M50 53.5h1M53 53.5h1M63 53.5h1M65 53.5h1M75 53.5h1M90 53.5h1M4 54.5h1M5 54.5h1M8 54.5h1M10 54.5h1M20 54.5h1M22 54.5h1M40 54.5h1M43 54.5h1M71 54.5h1M73 54.5h1M75 54.5h1M80 54.5h1M99 54.5h1M13 55.5h1M30 55.5h1M34 55.5h1M39 55.5h1M60 55.5h1M67 55.5h1M71 55.5h1M0 56.5h1M1 56.5h1M2 56.5h1M5 56.5h1M7 56.5h1M20 56.5h1M22 56.5h1M30 56.5h1M40 56.5h1M55 56.5h1M60 56.5h1M64 56.5h1M65 56.5h1M67 56.5h1M69 56.5h1M90 56.5h1M93 56.5h1M3 57.5h1M10 57.5h1M22 57.5h1M27 57.5h1M42 57.5h1M49 57.5h1M80 57.5h1M82 57.5h1M0 58.5h1M4 58.5h1M7 58.5h1M11 58.5h1M13 58.5h1M14 58.5h1M15 58.5h1M17 58.5h1M19 58.5h1M22 58.5h1M23 58.5h1M26 58.5h1M27 58.5h1M29 58.5h1M31 58.5h1M33 58.5h1M34 58.5h1M36 58.5h1M38 58.5h1M44 58.5h1M45 58.5h1M47 58.5h1M48 58.5h1M49 58.5h1M51 58.5h1M52 58.5h1M53 58.5h1M55 58.5h1M59 58.5h1M61 58.5h1M62 58.5h1M63 58.5h1M64 58.5h1M65 58.5h1M66 58.5h1M71 58.5h1M74 58.5h1M75 58.5h1M77 58.5h1M81 58.5h1M84 58.5h1M85 58.5h1M87 58.5h1M94 58.5h1M95 58.5h1M98 58.5h1M0 59.5h1M1 59.5h1M10 59.5h1M12 59.5h1M20 59.5h1M25 59.5h1M30 59.5h1M37 59.5h1M40 59.5h1M60 59.5h1M65 59.5h1M76 59.5h1M80 59.5h1M90 59.5h1M95 59.5h1M1 60.5h1M20 60.5h1M30 60.5h1M34 60.5h1M40 60.5h1M50 60.5h1M55 60.5h1M57 60.5h1M64 60.5h1M65 60.5h1M70 60.5h1M79 60.5h1M83 60.5h1M3 61.5h1M30 61.5h1M37 61.5h1M40 61.5h1M46 61.5h1M50 61.5h1M60 61.5h1M70 61.5h1M73 61.5h1M81 61.5h1M89 61.5h1M96 61.5h1M10 62.5h1M35 62.5h1M51 62.5h1M56 62.5h1M60 62.5h1M62 62.5h1M65 62.5h1M71 62.5h1M76 62.5h1M77 62.5h1M80 62.5h1M90 62.5h1M94 62.5h1M9 63.5h1M23 63.5h1M26 63.5h1M30 63.5h1M40 63.5h1M41 63.5h1M60 63.5h1M70 63.5h1M96 63.5h1M50 64.5h1M89 64.5h1M10 65.5h1M21 65.5h1M26 65.5h1M30 65.5h1M42 65.5h1M43 65.5h1M50 65.5h1M69 65.5h1M70 65.5h1M24 95.5h1M50 95.5h1M56 95.5h1M60 95.5h1M61 95.5h1M62 95.5h1M70 95.5h1M73 95.5h1M80 95.5h1M10 96.5h1M18 96.5h1M25 96.5h1M26 96.5h1M30 96.5h1M40 96.5h1M50 96.5h1M70 96.5h1M83 96.5h1M89 96.5h1M97 96.5h1M12 97.5h1M20 97.5h1M44 97.5h1M47 97.5h1M51 97.5h1M58 97.5h1M60 97.5h1M83 97.5h1M90 97.5h1M97 97.5h1M9 98.5h1M11 98.5h1M13 98.5h1M14 98.5h1M17 98.5h1M19 98.5h1M22 98.5h1M23 98.5h1M24 98.5h1M26 98.5h1M27 98.5h1M28 98.5h1M29 98.5h1M36 98.5h1M37 98.5h1M38 98.5h1M39 98.5h1M42 98.5h1M44 98.5h1M45 98.5h1M48 98.5h1M52 98.5h1M53 98.5h1M55 98.5h1M57 98.5h1M59 98.5h1M62 98.5h1M66 98.5h1M68 98.5h1M69 98.5h1M71 98.5h1M73 98.5h1M76 98.5h1M77 98.5h1M78 98.5h1M81 98.5h1M83 98.5h1M84 98.5h1M91 98.5h1M92 98.5h1M93 98.5h1M94 98.5h1M5 99.5h1M11 99.5h1M14 99.5h1M16 99.5h1M19 99.5h1M24 99.5h1M30 99.5h1M34 99.5h1M35 99.5h1M40 99.5h1M46 99.5h1M55 99.5h1M67 99.5h1M70 99.5h1M79 99.5h1M80 99.5h1M81 99.5h1M95 99.5h1M98 99.5h1M10 100.5h1M12 100.5h1M30 100.5h1M32 100.5h1M59 100.5h1M60 100.5h1M62 100.5h1M67 100.5h1M70 100.5h1M78 100.5h1M79 100.5h1M98 100.5h1M0 101.5h1M7 101.5h1M9 101.5h1M15 101.5h1M17 101.5h1M20 101.5h1M31 101.5h1M40 101.5h1M43 101.5h1M47 101.5h1M50 101.5h1M60 101.5h1M64 101.5h1M69 101.5h1M70 101.5h1M77 101.5h1M90 101.5h1M6 102.5h1M9 102.5h1M11 102.5h1M17 102.5h1M21 102.5h1M22 102.5h1M23 102.5h1M30 102.5h1M35 102.5h1M37 102.5h1M41 102.5h1M50 102.5h1M60 102.5h1M70 102.5h1M95 102.5h1M2 103.5h1M4 103.5h1M8 103.5h1M9 103.5h1M12 103.5h1M13 103.5h1M15 103.5h1M28 103.5h1M38 103.5h1M40 103.5h1M53 103.5h1M55 103.5h1M60 103.5h1M70 103.5h1M82 103.5h1M92 103.5h1M95 103.5h1M96 103.5h1M99 103.5h1M15 104.5h1M41 104.5h1M43 104.5h1M53 104.5h1M57 104.5h1M58 104.5h1M70 104.5h1M79 104.5h1M99 104.5h1M1 105.5h1M2 105.5h1M9 105.5h1M13 105.5h1M18 105.5h1M22 105.5h1M32 105.5h1M40 105.5h1M41 105.5h1M42 105.5h1M50 105.5h1M54 105.5h1M55 105.5h1M67 105.5h1M70 105.5h1M75 105.5h1M83 105.5h1M90 105.5h1M91 105.5h1M92 105.5h1M3 106.5h1M8 106.5h1M14 106.5h1M36 106.5h1M50 106.5h1M55 106.5h1M56 106.5h1M60 106.5h1M62 106.5h1M67 106.5h1M80 106.5h1M87 106.5h1M8 107.5h1M10 107.5h1M20 107.5h1M22 107.5h1M23 107.5h1M59 107.5h1M60 107.5h1M71 107.5h1M98 107.5h1M8 108.5h1M24 108.5h1M32 108.5h1M36 108.5h1M38 108.5h1M39 108.5h1M41 108.5h1M42 108.5h1M45 108.5h1M46 108.5h1M49 108.5h1M52 108.5h1M54 108.5h1M56 108.5h1M59 108.5h1M61 108.5h1M62 108.5h1M63 108.5h1M64 108.5h1M65 108.5h1M66 108.5h1M67 108.5h1M73 108.5h1M74 108.5h1M75 108.5h1M76 108.5h1M77 108.5h1M83 108.5h1M84 108.5h1M85 108.5h1M86 108.5h1M91 108.5h1M96 108.5h1M98 108.5h1M99 108.5h1M0 109.5h1M4 109.5h1M13 109.5h1M30 109.5h1M31 109.5h1M42 109.5h1M70 109.5h1M75 109.5h1M80 109.5h1M5 110.5h1M6 110.5h1M7 110.5h1M9 110.5h1M10 110.5h1M14 110.5h1M17 110.5h1M24 110.5h1M40 110.5h1M59 110.5h1M60 110.5h1M64 110.5h1M75 110.5h1M83 110.5h1M3 111.5h1M11 111.5h1M13 111.5h1M16 111.5h1M20 111.5h1M33 111.5h1M40 111.5h1M49 111.5h1M51 111.5h1M55 111.5h1M60 111.5h1M68 111.5h1M76 111.5h1M90 111.5h1M93 111.5h1M11 112.5h1M20 112.5h1M25 112.5h1M30 112.5h1M40 112.5h1M53 112.5h1M54 112.5h1M55 112.5h1M60 112.5h1M74 112.5h1M88 112.5h1M90 112.5h1M98 112.5h1M0 113.5h1M5 113.5h1M19 113.5h1M20 113.5h1M22 113.5h1M36 113.5h1M59 113.5h1M64 113.5h1M65 113.5h1M71 113.5h1M76 113.5h1M78 113.5h1M0 114.5h1M5 114.5h1M10 114.5h1M20 114.5h1M28 114.5h1M30 114.5h1M33 114.5h1M72 114.5h1M74 114.5h1M86 114.5h1M90 114.5h1M0 115.5h1M1 115.5h1M18 115.5h1M40 115.5h1M50 115.5h1M70 115.5h1M0 116.5h1M18 116.5h1M47 116.5h1M53 116.5h1M58 116.5h1M61 116.5h1M63 116.5h1M64 116.5h1M0 117.5h1M2 117.5h1M15 117.5h1M21 117.5h1M33 117.5h1M39 117.5h1M60 117.5h1M62 117.5h1M65 117.5h1M81 117.5h1M90 117.5h1M93 117.5h1M96 117.5h1M0 118.5h1M1 118.5h1M2 118.5h1M4 118.5h1M7 118.5h1M11 118.5h1M12 118.5h1M13 118.5h1M14 118.5h1M19 118.5h1M22 118.5h1M27 118.5h1M28 118.5h1M31 118.5h1M36 118.5h1M37 118.5h1M42 118.5h1M43 118.5h1M44 118.5h1M47 118.5h1M48 118.5h1M51 118.5h1M52 118.5h1M58 118.5h1M61 118.5h1M63 118.5h1M64 118.5h1M67 118.5h1M72 118.5h1M75 118.5h1M76 118.5h1M77 118.5h1M78 118.5h1M83 118.5h1M85 118.5h1M90 118.5h1M91 118.5h1M92 118.5h1M95 118.5h1M96 118.5h1M3 119.5h1M10 119.5h1M24 119.5h1M28 119.5h1M30 119.5h1M39 119.5h1M40 119.5h1M43 119.5h1M50 119.5h1M57 119.5h1M60 119.5h1M68 119.5h1M72 119.5h1M81 119.5h1M95 119.5h1M99 119.5h1M1 120.5h1M4 120.5h1M10 120.5h1M40 120.5h1M41 120.5h1M52 120.5h1M70 120.5h1M80 120.5h1M95 120.5h1M1 121.5h1M20 121.5h1M26 121.5h1M56 121.5h1M80 121.5h1M98 121.5h1M1 122.5h1M7 122.5h1M10 122.5h1M15 122.5h1M20 122.5h1M37 122.5h1M38 122.5h1M42 122.5h1M43 122.5h1M67 122.5h1M9 123.5h1M27 123.5h1M30 123.5h1M40 123.5h1M47 123.5h1M49 123.5h1M54 123.5h1M86 123.5h1M89 123.5h1M90 123.5h1M0 124.5h1M10 124.5h1M17 124.5h1M29 124.5h1M30 124.5h1M47 124.5h1M50 124.5h1M60 124.5h1M66 124.5h1M67 124.5h1M75 124.5h1M78 124.5h1M80 124.5h1M94 124.5h1M1 125.5h1M6 125.5h1M9 125.5h1M11 125.5h1M20 125.5h1M28 125.5h1M31 125.5h1M35 125.5h1M36 125.5h1M39 125.5h1M40 125.5h1M41 125.5h1M42 125.5h1M60 125.5h1M67 125.5h1M69 125.5h1M76 125.5h1M79 125.5h1M86 125.5h1M0 126.5h1M3 126.5h1M6 126.5h1M7 126.5h1M8 126.5h1M10 126.5h1M11 126.5h1M14 126.5h1M16 126.5h1M18 126.5h1M22 126.5h1M23 126.5h1M29 126.5h1M32 126.5h1M38 126.5h1M45 126.5h1M56 126.5h1M67 126.5h1M73 126.5h1M86 126.5h1M87 126.5h1M88 126.5h1M1 127.5h1M10 127.5h1M11 127.5h1M13 127.5h1M15 127.5h1M25 127.5h1M30 127.5h1M31 127.5h1M37 127.5h1M42 127.5h1M46 127.5h1M48 127.5h1M51 127.5h1M56 127.5h1M57 127.5h1M61 127.5h1M65 127.5h1M70 127.5h1M71 127.5h1M83 127.5h1M86 127.5h1M87 127.5h1M90 127.5h1M92 127.5h1M97 127.5h1M1 129.5h1M3 129.5h1M17 129.5h1M18 129.5h1M21 129.5h1M25 129.5h1M27 129.5h1M30 129.5h1M32 129.5h1M42 129.5h1M44 129.5h1M45 129.5h1M51 129.5h1M57 129.5h1M60 129.5h1M71 129.5h1M78 129.5h1M84 129.5h1M86 129.5h1M89 129.5h1M91 129.5h1M92 129.5h1M93 129.5h1M99 129.5h1M1 130.5h1M9 130.5h1M12 130.5h1M27 130.5h1M30 130.5h1M34 130.5h1M39 130.5h1M45 130.5h1M55 130.5h1M56 130.5h1M57 130.5h1M60 130.5h1M63 130.5h1M66 130.5h1M69 130.5h1M76 130.5h1M82 130.5h1M85 130.5h1M88 130.5h1M89 130.5h1M92 130.5h1M96 130.5h1M3 131.5h1M8 131.5h1M9 131.5h1M11 131.5h1M12 131.5h1M14 131.5h1M15 131.5h1M21 131.5h1M25 131.5h1M34 131.5h1M35 131.5h1M41 131.5h1M43 131.5h1M44 131.5h1M45 131.5h1M51 131.5h1M53 131.5h1M56 131.5h1M67 131.5h1M68 131.5h1M69 131.5h1M72 131.5h1M73 131.5h1M76 131.5h1M77 131.5h1M83 131.5h1M89 131.5h1M90 131.5h1M92 131.5h1M94 131.5h1M96 131.5h1M98 131.5h1M0 132.5h1M3 132.5h1M4 132.5h1M9 132.5h1M11 132.5h1M21 132.5h1M22 132.5h1M25 132.5h1M31 132.5h1M33 132.5h1M35 132.5h1M43 132.5h1M50 132.5h1M51 132.5h1M62 132.5h1M64 132.5h1M67 132.5h1M69 132.5h1M71 132.5h1M76 132.5h1M78 132.5h1M79 132.5h1M84 132.5h1M86 132.5h1M91 132.5h1M99 132.5h1M3 133.5h1M5 133.5h1M9 133.5h1M17 133.5h1M24 133.5h1M25 133.5h1M37 133.5h1M41 133.5h1M47 133.5h1M51 133.5h1M55 133.5h1M59 133.5h1M63 133.5h1M64 133.5h1M67 133.5h1M75 133.5h1M81 133.5h1M86 133.5h1M87 133.5h1M89 133.5h1M92 133.5h1M94 133.5h1M1 134.5h1M3 134.5h1M5 134.5h1M7 134.5h1M15 134.5h1M17 134.5h1M19 134.5h1M20 134.5h1M24 134.5h1M29 134.5h1M37 134.5h1M42 134.5h1M48 134.5h1M53 134.5h1M56 134.5h1M58 134.5h1M59 134.5h1M72 134.5h1M73 134.5h1M82 134.5h1M90 134.5h1M91 134.5h1M1 135.5h1M5 135.5h1M9 135.5h1M17 135.5h1M22 135.5h1M28 135.5h1M30 135.5h1M37 135.5h1M42 135.5h1M46 135.5h1M48 135.5h1M49 135.5h1M58 135.5h1M60 135.5h1M61 135.5h1M64 135.5h1M65 135.5h1M67 135.5h1M68 135.5h1M71 135.5h1M74 135.5h1M76 135.5h1M78 135.5h1M82 135.5h1M85 135.5h1M88 135.5h1M0 136.5h1M1 136.5h1M16 136.5h1M21 136.5h1M22 136.5h1M23 136.5h1M25 136.5h1M27 136.5h1M30 136.5h1M34 136.5h1M35 136.5h1M37 136.5h1M43 136.5h1M45 136.5h1M51 136.5h1M52 136.5h1M69 136.5h1M76 136.5h1M83 136.5h1M2 137.5h1M4 137.5h1M7 137.5h1M9 137.5h1M12 137.5h1M21 137.5h1M23 137.5h1M28 137.5h1M32 137.5h1M42 137.5h1M46 137.5h1M54 137.5h1M57 137.5h1M59 137.5h1M60 137.5h1M65 137.5h1M73 137.5h1M75 137.5h1M84 137.5h1M93 137.5h1M97 137.5h1M98 137.5h1M12 138.5h1M19 138.5h1M23 138.5h1M26 138.5h1M27 138.5h1M37 138.5h1M45 138.5h1M52 138.5h1M55 138.5h1M61 138.5h1M64 138.5h1M66 138.5h1M67 138.5h1M68 138.5h1M73 138.5h1M75 138.5h1M84 138.5h1M96 138.5h1M99 138.5h1M4 139.5h1M8 139.5h1M17 139.5h1M18 139.5h1M30 139.5h1M32 139.5h1M34 139.5h1M35 139.5h1M43 139.5h1M44 139.5h1M47 139.5h1M54 139.5h1M57 139.5h1M59 139.5h1M63 139.5h1M65 139.5h1M68 139.5h1M69 139.5h1M71 139.5h1M75 139.5h1M78 139.5h1M79 139.5h1M82 139.5h1M86 139.5h1M88 139.5h1M90 139.5h1M94 139.5h1M95 139.5h1M98 139.5h1M0 140.5h1M1 140.5h1M2 140.5h1M3 140.5h1M12 140.5h1M17 140.5h1M18 140.5h1M22 140.5h1M26 140.5h1M32 140.5h1M34 140.5h1M41 140.5h1M43 140.5h1M48 140.5h1M50 140.5h1M57 140.5h1M63 140.5h1M65 140.5h1M66 140.5h1M68 140.5h1M72 140.5h1M73 140.5h1M75 140.5h1M76 140.5h1M92 140.5h1M96 140.5h1M99 140.5h1M0 141.5h1M1 141.5h1M2 141.5h1M9 141.5h1M11 141.5h1M13 141.5h1M16 141.5h1M18 141.5h1M22 141.5h1M29 141.5h1M35 141.5h1M36 141.5h1M37 141.5h1M40 141.5h1M43 141.5h1M45 141.5h1M51 141.5h1M55 141.5h1M58 141.5h1M62 141.5h1M71 141.5h1M74 141.5h1M75 141.5h1M77 141.5h1M80 141.5h1M82 141.5h1M84 141.5h1M87 141.5h1M90 141.5h1M92 141.5h1M99 141.5h1M1 142.5h1M3 142.5h1M5 142.5h1M7 142.5h1M8 142.5h1M12 142.5h1M14 142.5h1M16 142.5h1M22 142.5h1M25 142.5h1M26 142.5h1M30 142.5h1M32 142.5h1M33 142.5h1M50 142.5h1M51 142.5h1M52 142.5h1M60 142.5h1M61 142.5h1M66 142.5h1M73 142.5h1M75 142.5h1M77 142.5h1M78 142.5h1M83 142.5h1M85 142.5h1M87 142.5h1M92 142.5h1M98 142.5h1M0 143.5h1M1 143.5h1M2 143.5h1M17 143.5h1M18 143.5h1M19 143.5h1M22 143.5h1M24 143.5h1M29 143.5h1M30 143.5h1M47 143.5h1M59 143.5h1M61 143.5h1M66 143.5h1M76 143.5h1M82 143.5h1M83 143.5h1M90 143.5h1M96 143.5h1M1 144.5h1M3 144.5h1M10 144.5h1M12 144.5h1M17 144.5h1M20 144.5h1M35 144.5h1M38 144.5h1M43 144.5h1M54 144.5h1M64 144.5h1M65 144.5h1M67 144.5h1M74 144.5h1M78 144.5h1M82 144.5h1M87 144.5h1M91 144.5h1M1 145.5h1M10 145.5h1M13 145.5h1M26 145.5h1M33 145.5h1M34 145.5h1M35 145.5h1M37 145.5h1M42 145.5h1M43 145.5h1M47 145.5h1M49 145.5h1M52 145.5h1M68 145.5h1M70 145.5h1M79 145.5h1M84 145.5h1M86 145.5h1M87 145.5h1M90 145.5h1M91 145.5h1M96 145.5h1M98 145.5h1M6 146.5h1M10 146.5h1M17 146.5h1M38 146.5h1M41 146.5h1M43 146.5h1M50 146.5h1M58 146.5h1M60 146.5h1M61 146.5h1M63 146.5h1M67 146.5h1M70 146.5h1M84 146.5h1M88 146.5h1M92 146.5h1M96 146.5h1M97 146.5h1M4 147.5h1M8 147.5h1M27 147.5h1M31 147.5h1M34 147.5h1M58 147.5h1M60 147.5h1M67 147.5h1M68 147.5h1M90 147.5h1M93 147.5h1M94 147.5h1M0 148.5h1M1 148.5h1M6 148.5h1M9 148.5h1M12 148.5h1M14 148.5h1M16 148.5h1M22 148.5h1M23 148.5h1M24 148.5h1M25 148.5h1M31 148.5h1M33 148.5h1M34 148.5h1M36 148.5h1M42 148.5h1M44 148.5h1M45 148.5h1M48 148.5h1M49 148.5h1M52 148.5h1M53 148.5h1M54 148.5h1M55 148.5h1M57 148.5h1M59 148.5h1M63 148.5h1M65 148.5h1M68 148.5h1M78 148.5h1M79 148.5h1M82 148.5h1M83 148.5h1M84 148.5h1M85 148.5h1M86 148.5h1M87 148.5h1M91 148.5h1M96 148.5h1" stroke="#2b5f26"/>
<path d="M73 65.5h1M75 65.5h1M76 65.5h1M81 65.5h1M82 65.5h1M85 65.5h1M92 65.5h1M95 65.5h1M96 65.5h1M98 65.5h1M0 66.5h1M1 66.5h1M4 66.5h1M5 66.5h1M12 66.5h1M15 66.5h1M17 66.5h1M22 66.5h1M23 66.5h1M25 66.5h1M29 66.5h1M31 66.5h1M32 66.5h1M33 66.5h1M34 66.5h1M35 66.5h1M36 66.5h1M38 66.5h1M39 66.5h1M44 66.5h1M45 66.5h1M46 66.5h1M47 66.5h1M51 66.5h1M52 66.5h1M54 66.5h1M59 66.5h1M62 66.5h1M67 66.5h1M68 66.5h1M72 66.5h1M74 66.5h1M75 66.5h1M76 66.5h1M78 66.5h1M79 66.5h1M81 66.5h1M82 66.5h1M83 66.5h1M84 66.5h1M85 66.5h1M87 66.5h1M90 66.5h1M92 66.5h1M94 66.5h1M95 66.5h1M97 66.5h1M98 66.5h1M99 66.5h1M0 67.5h1M1 67.5h1M7 67.5h1M8 67.5h1M11 67.5h1M16 67.5h1M18 67.5h1M19 67.5h1M23 67.5h1M24 67.5h1M25 67.5h1M26 67.5h1M30 67.5h1M31 67.5h1M33 67.5h1M34 67.5h1M37 67.5h1M38 67.5h1M40 67.5h1M41 67.5h1M43 67.5h1M45 67.5h1M46 67.5h1M49 67.5h1M51 67.5h1M52 67.5h1M56 67.5h1M57 67.5h1M58 67.5h1M59 67.5h1M60 67.5h1M61 67.5h1M62 67.5h1M63 67.5h1M66 67.5h1M69 67.5h1M72 67.5h1M73 67.5h1M75 67.5h1M76 67.5h1M79 67.5h1M81 67.5h1M82 67.5h1M86 67.5h1M91 67.5h1M92 67.5h1M95 67.5h1M97 67.5h1M1 68.5h1M2 68.5h1M3 68.5h1M4 68.5h1M5 68.5h1M8 68.5h1M12 68.5h1M17 68.5h1M23 68.5h1M25 68.5h1M29 68.5h1M32 68.5h1M33 68.5h1M34 68.5h1M38 68.5h1M41 68.5h1M46 68.5h1M51 68.5h1M54 68.5h1M55 68.5h1M56 68.5h1M62 68.5h1M64 68.5h1M75 68.5h1M76 68.5h1M77 68.5h1M84 68.5h1M92 68.5h1M95 68.5h1M99 68.5h1M0 69.5h1M2 69.5h1M3 69.5h1M5 69.5h1M7 69.5h1M8 69.5h1M12 69.5h1M13 69.5h1M17 69.5h1M18 69.5h1M20 69.5h1M26 69.5h1M27 69.5h1M32 69.5h1M33 69.5h1M38 69.5h1M41 69.5h1M43 69.5h1M47 69.5h1M49 69.5h1M51 69.5h1M52 69.5h1M54 69.5h1M55 69.5h1M57 69.5h1M58 69.5h1M59 69.5h1M63 69.5h1M64 69.5h1M66 69.5h1M68 69.5h1M69 69.5h1M71 69.5h1M72 69.5h1M77 69.5h1M81 69.5h1M85 69.5h1M86 69.5h1M88 69.5h1M93 69.5h1M94 69.5h1M95 69.5h1M0 70.5h1M1 70.5h1M2 70.5h1M3 70.5h1M5 70.5h1M9 70.5h1M13 70.5h1M14 70.5h1M15 70.5h1M17 70.5h1M19 70.5h1M21 70.5h1M25 70.5h1M29 70.5h1M34 70.5h1M38 70.5h1M40 70.5h1M41 70.5h1M42 70.5h1M43 70.5h1M45 70.5h1M46 70.5h1M48 70.5h1M52 70.5h1M55 70.5h1M56 70.5h1M59 70.5h1M61 70.5h1M62 70.5h1M63 70.5h1M64 70.5h1M65 70.5h1M72 70.5h1M75 70.5h1M76 70.5h1M77 70.5h1M78 70.5h1M79 70.5h1M81 70.5h1M82 70.5h1M86 70.5h1M88 70.5h1M91 70.5h1M92 70.5h1M93 70.5h1M96 70.5h1M97 70.5h1M99 70.5h1M4 71.5h1M7 71.5h1M9 71.5h1M12 71.5h1M14 71.5h1M16 71.5h1M17 71.5h1M18 71.5h1M19 71.5h1M20 71.5h1M21 71.5h1M23 71.5h1M26 71.5h1M27 71.5h1M32 71.5h1M33 71.5h1M35 71.5h1M36 71.5h1M39 71.5h1M42 71.5h1M53 71.5h1M54 71.5h1M57 71.5h1M58 71.5h1M59 71.5h1M63 71.5h1M65 71.5h1M69 71.5h1M71 71.5h1M72 71.5h1M75 71.5h1M81 71.5h1M82 71.5h1M83 71.5h1M84 71.5h1M86 71.5h1M87 71.5h1M89 71.5h1M91 71.5h1M95 71.5h1M97 71.5h1M98 71.5h1M99 71.5h1M2 72.5h1M3 72.5h1M4 72.5h1M6 72.5h1M7 72.5h1M11 72.5h1M12 72.5h1M16 72.5h1M18 72.5h1M19 72.5h1M21 72.5h1M23 72.5h1M28 72.5h1M31 72.5h1M34 72.5h1M35 72.5h1M37 72.5h1M41 72.5h1M42 72.5h1M44 72.5h1M45 72.5h1M47 72.5h1M48 72.5h1M51 72.5h1M52 72.5h1M53 72.5h1M54 72.5h1M55 72.5h1M59 72.5h1M62 72.5h1M63 72.5h1M64 72.5h1M65 72.5h1M66 72.5h1M67 72.5h1M74 72.5h1M75 72.5h1M79 72.5h1M81 72.5h1M83 72.5h1M85 72.5h1M87 72.5h1M88 72.5h1M89 72.5h1M92 72.5h1M96 72.5h1M97 72.5h1M99 72.5h1M0 73.5h1M1 73.5h1M2 73.5h1M4 73.5h1M5 73.5h1M7 73.5h1M12 73.5h1M14 73.5h1M15 73.5h1M16 73.5h1M18 73.5h1M21 73.5h1M22 73.5h1M23 73.5h1M24 73.5h1M25 73.5h1M27 73.5h1M29 73.5h1M31 73.5h1M32 73.5h1M34 73.5h1M38 73.5h1M41 73.5h1M43 73.5h1M44 73.5h1M46 73.5h1M47 73.5h1M48 73.5h1M49 73.5h1M50 73.5h1M52 73.5h1M53 73.5h1M55 73.5h1M56 73.5h1M57 73.5h1M58 73.5h1M61 73.5h1M63 73.5h1M64 73.5h1M72 73.5h1M73 73.5h1M76 73.5h1M77 73.5h1M78 73.5h1M79 73.5h1M80 73.5h1M83 73.5h1M85 73.5h1M86 73.5h1M87 73.5h1M88 73.5h1M91 73.5h1M92 73.5h1M93 73.5h1M95 73.5h1M96 73.5h1M97 73.5h1M99 73.5h1M0 74.5h1M1 74.5h1M2 74.5h1M5 74.5h1M7 74.5h1M12 74.5h1M14 74.5h1M17 74.5h1M18 74.5h1M22 74.5h1M24 74.5h1M27 74.5h1M31 74.5h1M35 74.5h1M36 74.5h1M37 74.5h1M41 74.5h1M42 74.5h1M43 74.5h1M45 74.5h1M47 74.5h1M49 74.5h1M51 74.5h1M54 74.5h1M55 74.5h1M56 74.5h1M58 74.5h1M63 74.5h1M64 74.5h1M65 74.5h1M66 74.5h1M68 74.5h1M71 74.5h1M72 74.5h1M74 74.5h1M76 74.5h1M78 74.5h1M79 74.5h1M82 74.5h1M83 74.5h1M84 74.5h1M85 74.5h1M86 74.5h1M90 74.5h1M91 74.5h1M92 74.5h1M93 74.5h1M94 74.5h1M96 74.5h1M0 75.5h1M2 75.5h1M5 75.5h1M6 75.5h1M14 75.5h1M16 75.5h1M18 75.5h1M19 75.5h1M21 75.5h1M22 75.5h1M23 75.5h1M25 75.5h1M27 75.5h1M28 75.5h1M29 75.5h1M31 75.5h1M32 75.5h1M35 75.5h1M37 75.5h1M38 75.5h1M44 75.5h1M48 75.5h1M49 75.5h1M50 75.5h1M55 75.5h1M56 75.5h1M58 75.5h1M59 75.5h1M60 75.5h1M61 75.5h1M62 75.5h1M64 75.5h1M65 75.5h1M67 75.5h1M68 75.5h1M69 75.5h1M70 75.5h1M71 75.5h1M78 75.5h1M81 75.5h1M82 75.5h1M88 75.5h1M89 75.5h1M91 75.5h1M92 75.5h1M93 75.5h1M94 75.5h1M95 75.5h1M96 75.5h1M97 75.5h1M99 75.5h1M0 76.5h1M3 76.5h1M6 76.5h1M8 76.5h1M9 76.5h1M10 76.5h1M11 76.5h1M12 76.5h1M14 76.5h1M15 76.5h1M18 76.5h1M19 76.5h1M21 76.5h1M25 76.5h1M26 76.5h1M27 76.5h1M29 76.5h1M31 76.5h1M32 76.5h1M33 76.5h1M35 76.5h1M37 76.5h1M38 76.5h1M41 76.5h1M43 76.5h1M45 76.5h1M48 76.5h1M50 76.5h1M53 76.5h1M54 76.5h1M57 76.5h1M58 76.5h1M59 76.5h1M61 76.5h1M62 76.5h1M64 76.5h1M65 76.5h1M67 76.5h1M68 76.5h1M69 76.5h1M71 76.5h1M74 76.5h1M81 76.5h1M82 76.5h1M84 76.5h1M88 76.5h1M89 76.5h1M94 76.5h1M95 76.5h1M96 76.5h1M98 76.5h1M2 77.5h1M4 77.5h1M5 77.5h1M13 77.5h1M14 77.5h1M23 77.5h1M25 77.5h1M28 77.5h1M29 77.5h1M32 77.5h1M33 77.5h1M35 77.5h1M37 77.5h1M38 77.5h1M42 77.5h1M44 77.5h1M45 77.5h1M47 77.5h1M49 77.5h1M52 77.5h1M54 77.5h1M55 77.5h1M61 77.5h1M64 77.5h1M65 77.5h1M66 77.5h1M67 77.5h1M68 77.5h1M69 77.5h1M72 77.5h1M74 77.5h1M75 77.5h1M76 77.5h1M77 77.5h1M81 77.5h1M83 77.5h1M84 77.5h1M85 77.5h1M87 77.5h1M89 77.5h1M92 77.5h1M93 77.5h1M95 77.5h1M96 77.5h1M1 78.5h1M2 78.5h1M8 78.5h1M9 78.5h1M13 78.5h1M16 78.5h1M21 78.5h1M22 78.5h1M24 78.5h1M26 78.5h1M27 78.5h1M29 78.5h1M32 78.5h1M36 78.5h1M39 78.5h1M42 78.5h1M44 78.5h1M45 78.5h1M46 78.5h1M47 78.5h1M49 78.5h1M53 78.5h1M56 78.5h1M57 78.5h1M65 78.5h1M66 78.5h1M69 78.5h1M71 78.5h1M72 78.5h1M77 78.5h1M86 78.5h1M89 78.5h1M91 78.5h1M95 78.5h1M96 78.5h1M99 78.5h1M0 79.5h1M1 79.5h1M2 79.5h1M3 79.5h1M5 79.5h1M6 79.5h1M7 79.5h1M9 79.5h1M11 79.5h1M12 79.5h1M14 79.5h1M15 79.5h1M17 79.5h1M18 79.5h1M21 79.5h1M22 79.5h1M24 79.5h1M28 79.5h1M29 79.5h1M32 79.5h1M36 79.5h1M37 79.5h1M44 79.5h1M45 79.5h1M46 79.5h1M47 79.5h1M48 79.5h1M51 79.5h1M52 79.5h1M55 79.5h1M59 79.5h1M62 79.5h1M65 79.5h1M66 79.5h1M67 79.5h1M71 79.5h1M74 79.5h1M78 79.5h1M79 79.5h1M81 79.5h1M83 79.5h1M84 79.5h1M87 79.5h1M91 79.5h1M94 79.5h1M96 79.5h1M98 79.5h1M99 79.5h1M0 80.5h1M1 80.5h1M5 80.5h1M6 80.5h1M8 80.5h1M12 80.5h1M16 80.5h1M17 80.5h1M22 80.5h1M23 80.5h1M25 80.5h1M26 80.5h1M27 80.5h1M28 80.5h1M29 80.5h1M30 80.5h1M34 80.5h1M36 80.5h1M38 80.5h1M39 80.5h1M41 80.5h1M47 80.5h1M48 80.5h1M49 80.5h1M51 80.5h1M52 80.5h1M54 80.5h1M55 80.5h1M56 80.5h1M57 80.5h1M68 80.5h1M71 80.5h1M72 80.5h1M76 80.5h1M77 80.5h1M79 80.5h1M81 80.5h1M82 80.5h1M85 80.5h1M86 80.5h1M92 80.5h1M94 80.5h1M95 80.5h1M97 80.5h1M99 80.5h1M0 81.5h1M2 81.5h1M3 81.5h1M5 81.5h1M7 81.5h1M8 81.5h1M9 81.5h1M11 81.5h1M13 81.5h1M14 81.5h1M17 81.5h1M19 81.5h1M21 81.5h1M22 81.5h1M23 81.5h1M25 81.5h1M27 81.5h1M29 81.5h1M32 81.5h1M33 81.5h1M34 81.5h1M37 81.5h1M41 81.5h1M42 81.5h1M43 81.5h1M46 81.5h1M48 81.5h1M49 81.5h1M52 81.5h1M55 81.5h1M58 81.5h1M63 81.5h1M65 81.5h1M66 81.5h1M69 81.5h1M72 81.5h1M73 81.5h1M75 81.5h1M76 81.5h1M77 81.5h1M78 81.5h1M79 81.5h1M82 81.5h1M91 81.5h1M93 81.5h1M94 81.5h1M95 81.5h1M0 82.5h1M3 82.5h1M4 82.5h1M5 82.5h1M6 82.5h1M7 82.5h1M13 82.5h1M14 82.5h1M16 82.5h1M18 82.5h1M20 82.5h1M21 82.5h1M22 82.5h1M26 82.5h1M29 82.5h1M30 82.5h1M32 82.5h1M33 82.5h1M34 82.5h1M38 82.5h1M39 82.5h1M41 82.5h1M42 82.5h1M44 82.5h1M46 82.5h1M48 82.5h1M49 82.5h1M51 82.5h1M52 82.5h1M54 82.5h1M57 82.5h1M58 82.5h1M61 82.5h1M62 82.5h1M64 82.5h1M65 82.5h1M67 82.5h1M69 82.5h1M71 82.5h1M72 82.5h1M73 82.5h1M75 82.5h1M76 82.5h1M77 82.5h1M78 82.5h1M79 82.5h1M81 82.5h1M82 82.5h1M85 82.5h1M86 82.5h1M89 82.5h1M91 82.5h1M93 82.5h1M94 82.5h1M95 82.5h1M1 83.5h1M2 83.5h1M3 83.5h1M8 83.5h1M11 83.5h1M14 83.5h1M16 83.5h1M17 83.5h1M23 83.5h1M26 83.5h1M27 83.5h1M31 83.5h1M32 83.5h1M33 83.5h1M34 83.5h1M35 83.5h1M36 83.5h1M37 83.5h1M38 83.5h1M41 83.5h1M42 83.5h1M44 83.5h1M46 83.5h1M51 83.5h1M52 83.5h1M53 83.5h1M54 83.5h1M55 83.5h1M56 83.5h1M58 83.5h1M61 83.5h1M62 83.5h1M64 83.5h1M69 83.5h1M73 83.5h1M74 83.5h1M75 83.5h1M77 83.5h1M78 83.5h1M81 83.5h1M82 83.5h1M84 83.5h1M88 83.5h1M91 83.5h1M95 83.5h1M98 83.5h1M0 84.5h1M2 84.5h1M3 84.5h1M4 84.5h1M5 84.5h1M6 84.5h1M7 84.5h1M8 84.5h1M15 84.5h1M19 84.5h1M24 84.5h1M26 84.5h1M28 84.5h1M29 84.5h1M30 84.5h1M32 84.5h1M33 84.5h1M34 84.5h1M36 84.5h1M41 84.5h1M42 84.5h1M44 84.5h1M45 84.5h1M46 84.5h1M49 84.5h1M52 84.5h1M53 84.5h1M57 84.5h1M58 84.5h1M61 84.5h1M62 84.5h1M64 84.5h1M65 84.5h1M68 84.5h1M72 84.5h1M73 84.5h1M75 84.5h1M76 84.5h1M81 84.5h1M82 84.5h1M83 84.5h1M84 84.5h1M88 84.5h1M89 84.5h1M90 84.5h1M91 84.5h1M92 84.5h1M93 84.5h1M94 84.5h1M95 84.5h1M96 84.5h1M97 84.5h1M98 84.5h1M99 84.5h1M0 85.5h1M2 85.5h1M7 85.5h1M13 85.5h1M18 85.5h1M19 85.5h1M22 85.5h1M23 85.5h1M28 85.5h1M31 85.5h1M32 85.5h1M33 85.5h1M35 85.5h1M37 85.5h1M39 85.5h1M42 85.5h1M43 85.5h1M44 85.5h1M52 85.5h1M53 85.5h1M56 85.5h1M58 85.5h1M59 85.5h1M62 85.5h1M63 85.5h1M66 85.5h1M69 85.5h1M72 85.5h1M73 85.5h1M74 85.5h1M77 85.5h1M78 85.5h1M81 85.5h1M85 85.5h1M87 85.5h1M89 85.5h1M93 85.5h1M94 85.5h1M96 85.5h1M99 85.5h1M0 86.5h1M1 86.5h1M2 86.5h1M3 86.5h1M6 86.5h1M7 86.5h1M11 86.5h1M12 86.5h1M13 86.5h1M14 86.5h1M15 86.5h1M17 86.5h1M18 86.5h1M20 86.5h1M21 86.5h1M24 86.5h1M27 86.5h1M32 86.5h1M33 86.5h1M35 86.5h1M36 86.5h1M38 86.5h1M41 86.5h1M42 86.5h1M43 86.5h1M46 86.5h1M47 86.5h1M53 86.5h1M54 86.5h1M55 86.5h1M56 86.5h1M59 86.5h1M61 86.5h1M62 86.5h1M63 86.5h1M67 86.5h1M71 86.5h1M72 86.5h1M75 86.5h1M76 86.5h1M78 86.5h1M81 86.5h1M82 86.5h1M84 86.5h1M85 86.5h1M87 86.5h1M90 86.5h1M92 86.5h1M93 86.5h1M94 86.5h1M95 86.5h1M96 86.5h1M0 87.5h1M8 87.5h1M9 87.5h1M13 87.5h1M16 87.5h1M17 87.5h1M18 87.5h1M19 87.5h1M23 87.5h1M24 87.5h1M25 87.5h1M26 87.5h1M27 87.5h1M29 87.5h1M30 87.5h1M32 87.5h1M33 87.5h1M34 87.5h1M36 87.5h1M37 87.5h1M45 87.5h1M47 87.5h1M48 87.5h1M49 87.5h1M51 87.5h1M52 87.5h1M54 87.5h1M55 87.5h1M56 87.5h1M57 87.5h1M58 87.5h1M59 87.5h1M62 87.5h1M63 87.5h1M64 87.5h1M65 87.5h1M70 87.5h1M71 87.5h1M74 87.5h1M75 87.5h1M76 87.5h1M77 87.5h1M78 87.5h1M79 87.5h1M83 87.5h1M88 87.5h1M89 87.5h1M91 87.5h1M92 87.5h1M93 87.5h1M95 87.5h1M96 87.5h1M97 87.5h1M2 88.5h1M8 88.5h1M11 88.5h1M13 88.5h1M14 88.5h1M16 88.5h1M22 88.5h1M23 88.5h1M32 88.5h1M33 88.5h1M34 88.5h1M35 88.5h1M39 88.5h1M41 88.5h1M44 88.5h1M47 88.5h1M53 88.5h1M55 88.5h1M57 88.5h1M58 88.5h1M61 88.5h1M63 88.5h1M64 88.5h1M65 88.5h1M68 88.5h1M69 88.5h1M71 88.5h1M74 88.5h1M75 88.5h1M77 88.5h1M81 88.5h1M82 88.5h1M85 88.5h1M89 88.5h1M91 88.5h1M95 88.5h1M3 89.5h1M4 89.5h1M6 89.5h1M7 89.5h1M11 89.5h1M13 89.5h1M14 89.5h1M15 89.5h1M16 89.5h1M17 89.5h1M18 89.5h1M19 89.5h1M21 89.5h1M22 89.5h1M24 89.5h1M26 89.5h1M28 89.5h1M29 89.5h1M31 89.5h1M32 89.5h1M33 89.5h1M34 89.5h1M36 89.5h1M38 89.5h1M42 89.5h1M44 89.5h1M45 89.5h1M46 89.5h1M48 89.5h1M53 89.5h1M54 89.5h1M58 89.5h1M59 89.5h1M63 89.5h1M65 89.5h1M66 89.5h1M69 89.5h1M71 89.5h1M72 89.5h1M73 89.5h1M74 89.5h1M76 89.5h1M77 89.5h1M79 89.5h1M81 89.5h1M82 89.5h1M83 89.5h1M85 89.5h1M86 89.5h1M87 89.5h1M89 89.5h1M91 89.5h1M93 89.5h1M94 89.5h1M96 89.5h1M98 89.5h1M99 89.5h1M1 90.5h1M3 90.5h1M6 90.5h1M9 90.5h1M11 90.5h1M12 90.5h1M16 90.5h1M17 90.5h1M18 90.5h1M19 90.5h1M21 90.5h1M24 90.5h1M25 90.5h1M26 90.5h1M27 90.5h1M28 90.5h1M29 90.5h1M30 90.5h1M31 90.5h1M35 90.5h1M36 90.5h1M38 90.5h1M39 90.5h1M41 90.5h1M42 90.5h1M44 90.5h1M49 90.5h1M51 90.5h1M54 90.5h1M55 90.5h1M56 90.5h1M57 90.5h1M58 90.5h1M59 90.5h1M63 90.5h1M66 90.5h1M67 90.5h1M68 90.5h1M72 90.5h1M73 90.5h1M74 90.5h1M77 90.5h1M82 90.5h1M83 90.5h1M84 90.5h1M86 90.5h1M87 90.5h1M88 90.5h1M91 90.5h1M93 90.5h1M95 90.5h1M96 90.5h1M97 90.5h1M99 90.5h1M0 91.5h1M2 91.5h1M3 91.5h1M4 91.5h1M5 91.5h1M7 91.5h1M9 91.5h1M12 91.5h1M15 91.5h1M16 91.5h1M18 91.5h1M23 91.5h1M27 91.5h1M28 91.5h1M34 91.5h1M37 91.5h1M40 91.5h1M41 91.5h1M42 91.5h1M44 91.5h1M45 91.5h1M46 91.5h1M47 91.5h1M49 91.5h1M51 91.5h1M53 91.5h1M57 91.5h1M58 91.5h1M59 91.5h1M61 91.5h1M64 91.5h1M69 91.5h1M72 91.5h1M73 91.5h1M74 91.5h1M77 91.5h1M78 91.5h1M81 91.5h1M82 91.5h1M84 91.5h1M87 91.5h1M91 91.5h1M92 91.5h1M94 91.5h1M95 91.5h1M0 92.5h1M2 92.5h1M3 92.5h1M4 92.5h1M8 92.5h1M9 92.5h1M11 92.5h1M12 92.5h1M16 92.5h1M19 92.5h1M21 92.5h1M22 92.5h1M23 92.5h1M27 92.5h1M28 92.5h1M29 92.5h1M32 92.5h1M33 92.5h1M36 92.5h1M37 92.5h1M38 92.5h1M39 92.5h1M41 92.5h1M44 92.5h1M45 92.5h1M46 92.5h1M48 92.5h1M52 92.5h1M53 92.5h1M54 92.5h1M55 92.5h1M56 92.5h1M57 92.5h1M58 92.5h1M61 92.5h1M62 92.5h1M63 92.5h1M66 92.5h1M68 92.5h1M69 92.5h1M71 92.5h1M76 92.5h1M81 92.5h1M84 92.5h1M88 92.5h1M91 92.5h1M94 92.5h1M95 92.5h1M96 92.5h1M97 92.5h1M98 92.5h1M0 93.5h1M1 93.5h1M2 93.5h1M3 93.5h1M4 93.5h1M7 93.5h1M8 93.5h1M11 93.5h1M12 93.5h1M14 93.5h1M15 93.5h1M16 93.5h1M17 93.5h1M19 93.5h1M25 93.5h1M27 93.5h1M29 93.5h1M33 93.5h1M34 93.5h1M35 93.5h1M38 93.5h1M41 93.5h1M43 93.5h1M49 93.5h1M51 93.5h1M54 93.5h1M55 93.5h1M58 93.5h1M60 93.5h1M63 93.5h1M65 93.5h1M68 93.5h1M69 93.5h1M73 93.5h1M74 93.5h1M76 93.5h1M77 93.5h1M81 93.5h1M82 93.5h1M83 93.5h1M84 93.5h1M85 93.5h1M88 93.5h1M93 93.5h1M94 93.5h1M95 93.5h1M96 93.5h1M99 93.5h1M0 94.5h1M1 94.5h1M4 94.5h1M5 94.5h1M7 94.5h1M8 94.5h1M9 94.5h1M12 94.5h1M16 94.5h1M18 94.5h1M21 94.5h1M22 94.5h1M23 94.5h1M25 94.5h1M26 94.5h1M27 94.5h1M28 94.5h1M29 94.5h1M33 94.5h1M35 94.5h1M39 94.5h1M42 94.5h1M43 94.5h1M44 94.5h1M47 94.5h1M48 94.5h1M49 94.5h1M51 94.5h1M53 94.5h1M54 94.5h1M56 94.5h1M57 94.5h1M59 94.5h1M61 94.5h1M65 94.5h1M67 94.5h1M68 94.5h1M69 94.5h1M71 94.5h1M72 94.5h1M75 94.5h1M76 94.5h1M77 94.5h1M79 94.5h1M82 94.5h1M84 94.5h1M86 94.5h1M87 94.5h1M89 94.5h1M91 94.5h1M93 94.5h1M95 94.5h1M96 94.5h1M97 94.5h1M98 94.5h1M99 94.5h1M0 95.5h1M1 95.5h1M2 95.5h1M4 95.5h1M7 95.5h1M9 95.5h1M11 95.5h1M12 95.5h1M14 95.5h1M16 95.5h1M18 95.5h1M21 95.5h1M22 95.5h1" stroke="#ce881a"/>
<path d="M4 0.5h1M6 0.5h1M7 0.5h1M10 0.5h1M11 0.5h1M17 0.5h1M21 0.5h1M40 0.5h1M47 0.5h1M50 0.5h1M60 0.5h1M70 0.5h1M80 0.5h1M89 0.5h1M20 1.5h1M30 1.5h1M40 1.5h1M42 1.5h1M50 1.5h1M53 1.5h1M57 1.5h1M70 1.5h1M80 1.5h1M90 1.5h1M99 1.5h1M12 2.5h1M22 2.5h1M29 2.5h1M30 2.5h1M40 2.5h1M59 2.5h1M61 2.5h1M79 2.5h1M82 2.5h1M89 2.5h1M90 2.5h1M2 3.5h1M3 3.5h1M47 3.5h1M54 3.5h1M76 3.5h1M80 3.5h1M83 3.5h1M90 3.5h1M91 3.5h1M1 4.5h1M21 4.5h1M29 4.5h1M40 4.5h1M50 4.5h1M56 4.5h1M62 4.5h1M67 4.5h1M69 4.5h1M93 4.5h1M25 5.5h1M36 5.5h1M60 5.5h1M84 5.5h1M96 5.5h1M5 6.5h1M40 6.5h1M45 6.5h1M50 6.5h1M57 6.5h1M79 6.5h1M80 6.5h1M25 7.5h1M40 7.5h1M43 7.5h1M46 7.5h1M47 7.5h1M49 7.5h1M70 7.5h1M72 7.5h1M3 8.5h1M4 8.5h1M5 8.5h1M6 8.5h1M8 8.5h1M14 8.5h1M16 8.5h1M18 8.5h1M19 8.5h1M22 8.5h1M23 8.5h1M24 8.5h1M25 8.5h1M29 8.5h1M32 8.5h1M34 8.5h1M42 8.5h1M43 8.5h1M44 8.5h1M45 8.5h1M46 8.5h1M47 8.5h1M48 8.5h1M50 8.5h1M53 8.5h1M54 8.5h1M55 8.5h1M57 8.5h1M59 8.5h1M63 8.5h1M64 8.5h1M66 8.5h1M67 8.5h1M68 8.5h1M71 8.5h1M72 8.5h1M74 8.5h1M76 8.5h1M78 8.5h1M79 8.5h1M83 8.5h1M92 8.5h1M94 8.5h1M95 8.5h1M96 8.5h1M10 9.5h1M20 9.5h1M35 9.5h1M42 9.5h1M46 9.5h1M60 9.5h1M85 9.5h1M92 9.5h1M10 10.5h1M20 10.5h1M60 10.5h1M75 10.5h1M79 10.5h1M85 10.5h1M2 11.5h1M5 11.5h1M20 11.5h1M38 11.5h1M40 11.5h1M45 11.5h1M50 11.5h1M67 11.5h1M71 11.5h1M78 11.5h1M84 11.5h1M90 11.5h1M94 11.5h1M1 12.5h1M19 12.5h1M30 12.5h1M53 12.5h1M60 12.5h1M64 12.5h1M70 12.5h1M71 12.5h1M80 12.5h1M82 12.5h1M85 12.5h1M86 12.5h1M25 13.5h1M60 13.5h1M90 13.5h1M10 14.5h1M12 14.5h1M20 14.5h1M30 14.5h1M32 14.5h1M47 14.5h1M50 14.5h1M63 14.5h1M67 14.5h1M70 14.5h1M97 14.5h1M8 15.5h1M15 15.5h1M20 15.5h1M40 15.5h1M50 15.5h1M60 15.5h1M68 15.5h1M74 15.5h1M82 15.5h1M8 16.5h1M20 16.5h1M25 16.5h1M38 16.5h1M40 16.5h1M50 16.5h1M70 16.5h1M71 16.5h1M97 16.5h1M5 17.5h1M10 17.5h1M13 17.5h1M15 17.5h1M20 17.5h1M40 17.5h1M60 17.5h1M74 17.5h1M79 17.5h1M80 17.5h1M90 17.5h1M1 18.5h1M4 18.5h1M18 18.5h1M34 18.5h1M39 18.5h1M41 18.5h1M47 18.5h1M53 18.5h1M91 18.5h1M92 18.5h1M98 18.5h1M0 19.5h1M3 19.5h1M9 19.5h1M11 19.5h1M12 19.5h1M14 19.5h1M18 19.5h1M23 19.5h1M26 19.5h1M28 19.5h1M29 19.5h1M32 19.5h1M35 19.5h1M38 19.5h1M39 19.5h1M41 19.5h1M43 19.5h1M44 19.5h1M45 19.5h1M47 19.5h1M48 19.5h1M54 19.5h1M56 19.5h1M59 19.5h1M61 19.5h1M65 19.5h1M67 19.5h1M71 19.5h1M75 19.5h1M76 19.5h1M79 19.5h1M83 19.5h1M93 19.5h1M96 19.5h1M97 19.5h1M98 19.5h1M99 19.5h1M10 20.5h1M14 20.5h1M27 20.5h1M43 20.5h1M51 20.5h1M52 20.5h1M60 20.5h1M68 20.5h1M70 20.5h1M80 20.5h1M0 21.5h1M10 21.5h1M27 21.5h1M38 21.5h1M40 21.5h1M64 21.5h1M70 21.5h1M90 21.5h1M9 22.5h1M16 22.5h1M20 22.5h1M30 22.5h1M33 22.5h1M41 22.5h1M50 22.5h1M60 22.5h1M62 22.5h1M70 22.5h1M80 22.5h1M86 22.5h1M87 22.5h1M10 23.5h1M20 23.5h1M40 23.5h1M60 23.5h1M71 23.5h1M90 23.5h1M92 23.5h1M95 23.5h1M99 23.5h1M20 24.5h1M21 24.5h1M51 24.5h1M70 24.5h1M80 24.5h1M2 25.5h1M10 25.5h1M20 25.5h1M39 25.5h1M50 25.5h1M62 25.5h1M66 25.5h1M70 25.5h1M96 25.5h1M7 26.5h1M10 26.5h1M17 26.5h1M27 26.5h1M28 26.5h1M30 26.5h1M50 26.5h1M54 26.5h1M60 26.5h1M65 26.5h1M73 26.5h1M81 26.5h1M83 26.5h1M90 26.5h1M92 26.5h1M0 27.5h1M3 27.5h1M15 27.5h1M24 27.5h1M28 27.5h1M30 27.5h1M34 27.5h1M36 27.5h1M37 27.5h1M48 27.5h1M53 27.5h1M69 27.5h1M80 27.5h1M84 27.5h1M86 27.5h1M91 27.5h1M98 27.5h1M67 28.5h1M1 29.5h1M7 29.5h1M9 29.5h1M10 29.5h1M12 29.5h1M15 29.5h1M32 29.5h1M35 29.5h1M37 29.5h1M40 29.5h1M44 29.5h1M50 29.5h1M53 29.5h1M55 29.5h1M58 29.5h1M63 29.5h1M66 29.5h1M68 29.5h1M71 29.5h1M83 29.5h1M84 29.5h1M85 29.5h1M88 29.5h1M90 29.5h1M94 29.5h1M9 30.5h1M12 30.5h1M14 30.5h1M23 30.5h1M26 30.5h1M28 30.5h1M36 30.5h1M45 30.5h1M46 30.5h1M49 30.5h1M51 30.5h1M53 30.5h1M68 30.5h1M72 30.5h1M76 30.5h1M78 30.5h1M87 30.5h1M91 30.5h1M1 31.5h1M3 31.5h1M9 31.5h1M11 31.5h1M17 31.5h1M23 31.5h1M28 31.5h1M29 31.5h1M37 31.5h1M38 31.5h1M40 31.5h1M46 31.5h1M50 31.5h1M54 31.5h1M58 31.5h1M59 31.5h1M73 31.5h1M79 31.5h1M94 31.5h1M95 31.5h1M97 31.5h1M0 32.5h1M3 32.5h1M4 32.5h1M6 32.5h1M14 32.5h1M18 32.5h1M19 32.5h1M21 32.5h1M23 32.5h1M24 32.5h1M25 32.5h1M29 32.5h1M32 32.5h1M33 32.5h1M38 32.5h1M39 32.5h1M55 32.5h1M66 32.5h1M69 32.5h1M72 32.5h1M80 32.5h1M88 32.5h1M99 32.5h1M0 33.5h1M4 33.5h1M10 33.5h1M11 33.5h1M14 33.5h1M18 33.5h1M26 33.5h1M29 33.5h1M36 33.5h1M45 33.5h1M46 33.5h1M47 33.5h1M48 33.5h1M58 33.5h1M59 33.5h1M63 33.5h1M78 33.5h1M80 33.5h1M82 33.5h1M89 33.5h1M91 33.5h1M92 33.5h1M95 33.5h1M97 33.5h1M99 33.5h1M0 34.5h1M3 34.5h1M9 34.5h1M19 34.5h1M28 34.5h1M31 34.5h1M35 34.5h1M44 34.5h1M46 34.5h1M58 34.5h1M60 34.5h1M68 34.5h1M71 34.5h1M74 34.5h1M79 34.5h1M92 34.5h1M7 35.5h1M34 35.5h1M36 35.5h1M38 35.5h1M43 35.5h1M50 35.5h1M52 35.5h1M61 35.5h1M67 35.5h1M74 35.5h1M83 35.5h1M88 35.5h1M94 35.5h1M97 35.5h1M99 35.5h1M0 36.5h1M1 36.5h1M3 36.5h1M4 36.5h1M6 36.5h1M16 36.5h1M26 36.5h1M27 36.5h1M29 36.5h1M33 36.5h1M35 36.5h1M36 36.5h1M38 36.5h1M39 36.5h1M42 36.5h1M45 36.5h1M47 36.5h1M49 36.5h1M68 36.5h1M76 36.5h1M77 36.5h1M78 36.5h1M84 36.5h1M86 36.5h1M92 36.5h1M93 36.5h1M97 36.5h1M99 36.5h1M1 37.5h1M8 37.5h1M16 37.5h1M20 37.5h1M24 37.5h1M31 37.5h1M33 37.5h1M39 37.5h1M42 37.5h1M44 37.5h1M47 37.5h1M56 37.5h1M59 37.5h1M67 37.5h1M75 37.5h1M77 37.5h1M82 37.5h1M92 37.5h1M95 37.5h1M2 38.5h1M4 38.5h1M5 38.5h1M6 38.5h1M7 38.5h1M9 38.5h1M11 38.5h1M14 38.5h1M15 38.5h1M16 38.5h1M18 38.5h1M22 38.5h1M24 38.5h1M32 38.5h1M36 38.5h1M38 38.5h1M39 38.5h1M43 38.5h1M44 38.5h1M47 38.5h1M48 38.5h1M49 38.5h1M54 38.5h1M57 38.5h1M64 38.5h1M65 38.5h1M67 38.5h1M68 38.5h1M71 38.5h1M72 38.5h1M73 38.5h1M74 38.5h1M75 38.5h1M76 38.5h1M78 38.5h1M81 38.5h1M83 38.5h1M85 38.5h1M87 38.5h1M89 38.5h1M93 38.5h1M95 38.5h1M97 38.5h1M98 38.5h1M99 38.5h1M19 39.5h1M38 39.5h1M39 39.5h1M40 39.5h1M52 39.5h1M65 39.5h1M77 39.5h1M79 39.5h1M80 39.5h1M98 39.5h1M11 40.5h1M14 40.5h1M30 40.5h1M34 40.5h1M36 40.5h1M60 40.5h1M63 40.5h1M64 40.5h1M69 40.5h1M77 40.5h1M91 40.5h1M92 40.5h1M95 40.5h1M5 41.5h1M16 41.5h1M17 41.5h1M20 41.5h1M24 41.5h1M30 41.5h1M40 41.5h1M41 41.5h1M45 41.5h1M48 41.5h1M60 41.5h1M61 41.5h1M70 41.5h1M77 41.5h1M80 41.5h1M97 41.5h1M99 41.5h1M20 42.5h1M29 42.5h1M46 42.5h1M50 42.5h1M58 42.5h1M60 42.5h1M63 42.5h1M70 42.5h1M77 42.5h1M0 43.5h1M36 43.5h1M49 43.5h1M51 43.5h1M72 43.5h1M74 43.5h1M84 43.5h1M90 43.5h1M7 44.5h1M10 44.5h1M20 44.5h1M40 44.5h1M52 44.5h1M90 44.5h1M92 44.5h1M99 44.5h1M9 45.5h1M11 45.5h1M30 45.5h1M40 45.5h1M51 45.5h1M60 45.5h1M66 45.5h1M80 45.5h1M99 45.5h1M20 46.5h1M29 46.5h1M30 46.5h1M36 46.5h1M72 46.5h1M13 47.5h1M20 47.5h1M30 47.5h1M60 47.5h1M71 47.5h1M80 47.5h1M90 47.5h1M2 48.5h1M4 48.5h1M6 48.5h1M8 48.5h1M12 48.5h1M15 48.5h1M16 48.5h1M17 48.5h1M22 48.5h1M23 48.5h1M26 48.5h1M29 48.5h1M31 48.5h1M32 48.5h1M34 48.5h1M35 48.5h1M38 48.5h1M42 48.5h1M44 48.5h1M46 48.5h1M47 48.5h1M48 48.5h1M49 48.5h1M51 48.5h1M54 48.5h1M56 48.5h1M59 48.5h1M61 48.5h1M62 48.5h1M63 48.5h1M65 48.5h1M66 48.5h1M68 48.5h1M71 48.5h1M74 48.5h1M75 48.5h1M77 48.5h1M85 48.5h1M86 48.5h1M89 48.5h1M91 48.5h1M92 48.5h1M94 48.5h1M95 48.5h1M10 49.5h1M20 49.5h1M29 49.5h1M30 49.5h1M40 49.5h1M43 49.5h1M70 49.5h1M11 50.5h1M20 50.5h1M30 50.5h1M40 50.5h1M50 50.5h1M57 50.5h1M35 51.5h1M42 51.5h1M46 51.5h1M70 51.5h1M80 51.5h1M90 51.5h1M1 52.5h1M10 52.5h1M18 52.5h1M34 52.5h1M53 52.5h1M61 52.5h1M70 52.5h1M80 52.5h1M87 52.5h1M30 53.5h1M36 53.5h1M37 53.5h1M38 53.5h1M40 53.5h1M60 53.5h1M70 53.5h1M93 53.5h1M95 53.5h1M45 54.5h1M50 54.5h1M60 54.5h1M70 54.5h1M90 54.5h1M0 55.5h1M1 55.5h1M10 55.5h1M20 55.5h1M26 55.5h1M36 55.5h1M40 55.5h1M47 55.5h1M80 55.5h1M98 55.5h1M6 56.5h1M18 56.5h1M45 56.5h1M46 56.5h1M50 56.5h1M80 56.5h1M88 56.5h1M1 57.5h1M20 57.5h1M21 57.5h1M33 57.5h1M40 57.5h1M50 57.5h1M70 57.5h1M90 57.5h1M16 58.5h1M20 58.5h1M28 58.5h1M40 58.5h1M50 58.5h1M56 58.5h1M67 58.5h1M73 58.5h1M80 58.5h1M83 58.5h1M96 58.5h1M99 58.5h1M6 59.5h1M8 59.5h1M50 59.5h1M82 59.5h1M0 60.5h1M47 60.5h1M63 60.5h1M68 60.5h1M80 60.5h1M91 60.5h1M10 61.5h1M20 61.5h1M24 61.5h1M42 61.5h1M77 61.5h1M78 61.5h1M20 62.5h1M27 62.5h1M30 62.5h1M41 62.5h1M45 62.5h1M96 62.5h1M99 62.5h1M10 63.5h1M16 63.5h1M20 63.5h1M48 63.5h1M49 63.5h1M50 63.5h1M80 63.5h1M90 63.5h1M11 64.5h1M60 64.5h1M61 64.5h1M90 64.5h1M40 65.5h1M40 95.5h1M83 95.5h1M90 95.5h1M11 96.5h1M20 96.5h1M23 96.5h1M39 96.5h1M53 96.5h1M59 96.5h1M66 96.5h1M74 96.5h1M80 96.5h1M90 96.5h1M10 97.5h1M30 97.5h1M49 97.5h1M80 97.5h1M99 97.5h1M0 98.5h1M1 98.5h1M5 98.5h1M8 98.5h1M12 98.5h1M21 98.5h1M25 98.5h1M33 98.5h1M35 98.5h1M50 98.5h1M51 98.5h1M63 98.5h1M72 98.5h1M75 98.5h1M80 98.5h1M88 98.5h1M95 98.5h1M15 99.5h1M20 99.5h1M54 99.5h1M60 99.5h1M65 99.5h1M6 100.5h1M20 100.5h1M45 100.5h1M50 100.5h1M51 100.5h1M65 100.5h1M80 100.5h1M1 101.5h1M6 101.5h1M12 101.5h1M23 101.5h1M26 101.5h1M29 101.5h1M30 101.5h1M59 101.5h1M80 101.5h1M83 101.5h1M1 102.5h1M2 102.5h1M10 102.5h1M27 102.5h1M40 102.5h1M51 102.5h1M77 102.5h1M81 102.5h1M0 103.5h1M1 103.5h1M3 103.5h1M5 103.5h1M6 103.5h1M10 103.5h1M80 103.5h1M97 103.5h1M10 104.5h1M20 104.5h1M30 104.5h1M37 104.5h1M40 104.5h1M47 104.5h1M50 104.5h1M60 104.5h1M62 104.5h1M67 104.5h1M80 104.5h1M90 104.5h1M10 105.5h1M30 105.5h1M57 105.5h1M69 105.5h1M78 105.5h1M88 105.5h1M98 105.5h1M4 106.5h1M10 106.5h1M40 106.5h1M70 106.5h1M73 106.5h1M77 106.5h1M0 107.5h1M30 107.5h1M34 107.5h1M44 107.5h1M50 107.5h1M64 107.5h1M70 107.5h1M74 107.5h1M80 107.5h1M90 107.5h1M0 108.5h1M1 108.5h1M2 108.5h1M4 108.5h1M5 108.5h1M9 108.5h1M16 108.5h1M17 108.5h1M18 108.5h1M21 108.5h1M22 108.5h1M25 108.5h1M26 108.5h1M28 108.5h1M29 108.5h1M30 108.5h1M33 108.5h1M34 108.5h1M35 108.5h1M37 108.5h1M40 108.5h1M44 108.5h1M69 108.5h1M80 108.5h1M81 108.5h1M93 108.5h1M94 108.5h1M10 109.5h1M20 109.5h1M36 109.5h1M50 109.5h1M60 109.5h1M76 109.5h1M0 110.5h1M1 110.5h1M11 110.5h1M30 110.5h1M38 110.5h1M45 110.5h1M50 110.5h1M65 110.5h1M70 110.5h1M10 111.5h1M26 111.5h1M50 111.5h1M56 111.5h1M70 111.5h1M80 111.5h1M1 112.5h1M10 112.5h1M42 112.5h1M50 112.5h1M73 112.5h1M80 112.5h1M1 113.5h1M4 113.5h1M30 113.5h1M41 113.5h1M46 113.5h1M60 113.5h1M70 113.5h1M99 113.5h1M29 114.5h1M35 114.5h1M40 114.5h1M49 114.5h1M76 114.5h1M80 114.5h1M94 114.5h1M98 114.5h1M20 115.5h1M22 115.5h1M26 115.5h1M30 115.5h1M53 115.5h1M56 115.5h1M58 115.5h1M67 115.5h1M90 115.5h1M97 115.5h1M20 116.5h1M29 116.5h1M30 116.5h1M31 116.5h1M51 116.5h1M52 116.5h1M60 116.5h1M68 116.5h1M70 116.5h1M80 116.5h1M90 116.5h1M8 117.5h1M10 117.5h1M20 117.5h1M25 117.5h1M28 117.5h1M30 117.5h1M40 117.5h1M50 117.5h1M70 117.5h1M77 117.5h1M82 117.5h1M92 117.5h1M9 118.5h1M10 118.5h1M18 118.5h1M25 118.5h1M34 118.5h1M55 118.5h1M57 118.5h1M69 118.5h1M70 118.5h1M74 118.5h1M81 118.5h1M82 118.5h1M99 118.5h1M12 119.5h1M20 119.5h1M37 119.5h1M70 119.5h1M79 119.5h1M80 119.5h1M86 119.5h1M90 119.5h1M5 120.5h1M15 120.5h1M30 120.5h1M60 120.5h1M87 120.5h1M98 120.5h1M3 121.5h1M6 121.5h1M10 121.5h1M30 121.5h1M36 121.5h1M46 121.5h1M65 121.5h1M70 121.5h1M88 121.5h1M90 121.5h1M6 122.5h1M50 122.5h1M70 122.5h1M90 122.5h1M20 123.5h1M50 123.5h1M56 123.5h1M60 123.5h1M70 123.5h1M72 123.5h1M79 123.5h1M80 123.5h1M5 124.5h1M20 124.5h1M42 124.5h1M46 124.5h1M57 124.5h1M59 124.5h1M70 124.5h1M77 124.5h1M90 124.5h1M0 125.5h1M3 125.5h1M37 125.5h1M45 125.5h1M48 125.5h1M50 125.5h1M52 125.5h1M53 125.5h1M57 125.5h1M70 125.5h1M73 125.5h1M80 125.5h1M90 125.5h1M96 125.5h1M1 126.5h1M20 126.5h1M30 126.5h1M40 126.5h1M41 126.5h1M60 126.5h1M72 126.5h1M80 126.5h1M85 126.5h1M2 127.5h1M18 127.5h1M32 127.5h1M38 127.5h1M45 127.5h1M60 127.5h1M62 127.5h1M64 127.5h1M67 127.5h1M76 127.5h1M78 127.5h1M80 127.5h1M81 127.5h1M94 127.5h1M12 128.5h1M13 128.5h1M32 128.5h1M36 128.5h1M45 128.5h1M49 128.5h1M56 128.5h1M91 128.5h1M0 129.5h1M6 129.5h1M10 129.5h1M50 129.5h1M53 129.5h1M70 129.5h1M80 129.5h1M81 129.5h1M83 129.5h1M90 129.5h1M6 130.5h1M7 130.5h1M10 130.5h1M13 130.5h1M25 130.5h1M40 130.5h1M80 130.5h1M98 130.5h1M0 131.5h1M5 131.5h1M6 131.5h1M13 131.5h1M17 131.5h1M18 131.5h1M20 131.5h1M23 131.5h1M26 131.5h1M28 131.5h1M29 131.5h1M30 131.5h1M31 131.5h1M33 131.5h1M36 131.5h1M40 131.5h1M47 131.5h1M48 131.5h1M50 131.5h1M52 131.5h1M55 131.5h1M62 131.5h1M66 131.5h1M80 131.5h1M91 131.5h1M10 132.5h1M20 132.5h1M30 132.5h1M40 132.5h1M70 132.5h1M87 132.5h1M90 132.5h1M0 133.5h1M7 133.5h1M10 133.5h1M30 133.5h1M31 133.5h1M36 133.5h1M40 133.5h1M45 133.5h1M50 133.5h1M52 133.5h1M60 133.5h1M80 133.5h1M90 133.5h1M10 134.5h1M21 134.5h1M43 134.5h1M50 134.5h1M60 134.5h1M61 134.5h1M64 134.5h1M70 134.5h1M10 135.5h1M27 135.5h1M53 135.5h1M83 135.5h1M90 135.5h1M95 135.5h1M2 136.5h1M3 136.5h1M4 136.5h1M14 136.5h1M26 136.5h1M29 136.5h1M50 136.5h1M77 136.5h1M86 136.5h1M90 136.5h1M18 137.5h1M34 137.5h1M45 137.5h1M58 137.5h1M63 137.5h1M71 137.5h1M77 137.5h1M78 137.5h1M80 137.5h1M82 137.5h1M87 137.5h1M90 137.5h1M94 137.5h1M0 138.5h1M3 138.5h1M5 138.5h1M8 138.5h1M11 138.5h1M16 138.5h1M17 138.5h1M21 138.5h1M24 138.5h1M25 138.5h1M29 138.5h1M31 138.5h1M33 138.5h1M34 138.5h1M36 138.5h1M39 138.5h1M41 138.5h1M42 138.5h1M43 138.5h1M44 138.5h1M49 138.5h1M51 138.5h1M57 138.5h1M58 138.5h1M59 138.5h1M62 138.5h1M63 138.5h1M69 138.5h1M72 138.5h1M74 138.5h1M76 138.5h1M78 138.5h1M82 138.5h1M83 138.5h1M85 138.5h1M86 138.5h1M87 138.5h1M88 138.5h1M89 138.5h1M93 138.5h1M94 138.5h1M98 138.5h1M6 139.5h1M10 139.5h1M12 139.5h1M15 139.5h1M22 139.5h1M38 139.5h1M40 139.5h1M60 139.5h1M67 139.5h1M4 140.5h1M8 140.5h1M10 140.5h1M11 140.5h1M30 140.5h1M31 140.5h1M51 140.5h1M54 140.5h1M55 140.5h1M60 140.5h1M70 140.5h1M80 140.5h1M82 140.5h1M83 140.5h1M90 140.5h1M10 141.5h1M14 141.5h1M26 141.5h1M34 141.5h1M42 141.5h1M46 141.5h1M50 141.5h1M59 141.5h1M70 141.5h1M2 142.5h1M13 142.5h1M46 142.5h1M48 142.5h1M54 142.5h1M70 142.5h1M79 142.5h1M80 142.5h1M84 142.5h1M9 143.5h1M42 143.5h1M49 143.5h1M74 143.5h1M97 143.5h1M98 143.5h1M21 144.5h1M25 144.5h1M40 144.5h1M50 144.5h1M60 144.5h1M70 144.5h1M80 144.5h1M96 144.5h1M19 145.5h1M20 145.5h1M22 145.5h1M25 145.5h1M50 145.5h1M60 145.5h1M65 145.5h1M99 145.5h1M1 146.5h1M7 146.5h1M19 146.5h1M28 146.5h1M30 146.5h1M34 146.5h1M39 146.5h1M40 146.5h1M53 146.5h1M62 146.5h1M80 146.5h1M95 146.5h1M5 147.5h1M9 147.5h1M10 147.5h1M15 147.5h1M30 147.5h1M35 147.5h1M40 147.5h1M46 147.5h1M70 147.5h1M74 147.5h1M81 147.5h1M89 147.5h1M4 148.5h1M5 148.5h1M7 148.5h1M8 148.5h1M10 148.5h1M15 148.5h1M17 148.5h1M26 148.5h1M29 148.5h1M32 148.5h1M35 148.5h1M39 148.5h1M41 148.5h1M43 148.5h1M46 148.5h1M47 148.5h1M51 148.5h1M58 148.5h1M61 148.5h1M62 148.5h1M64 148.5h1M66 148.5h1M67 148.5h1M71 148.5h1M73 148.5h1M74 148.5h1M75 148.5h1M76 148.5h1M77 148.5h1M81 148.5h1M88 148.5h1M89 148.5h1M93 148.5h1M95 148.5h1M97 148.5h1M98 148.5h1" stroke="#34692e"/>
<path d="M80 65.5h1M83 65.5h1M84 65.5h1M86 65.5h1M88 65.5h1M89 65.5h1M2 66.5h1M6 66.5h1M10 66.5h1M11 66.5h1M20 66.5h1M30 66.5h1M37 66.5h1M40 66.5h1M50 66.5h1M53 66.5h1M58 66.5h1M60 66.5h1M64 66.5h1M65 66.5h1M70 66.5h1M80 66.5h1M86 66.5h1M4 67.5h1M10 67.5h1M20 67.5h1M29 67.5h1M35 67.5h1M36 67.5h1M50 67.5h1M67 67.5h1M68 67.5h1M70 67.5h1M80 67.5h1M85 67.5h1M87 67.5h1M90 67.5h1M98 67.5h1M0 68.5h1M6 68.5h1M9 68.5h1M11 68.5h1M13 68.5h1M14 68.5h1M15 68.5h1M16 68.5h1M18 68.5h1M19 68.5h1M20 68.5h1M21 68.5h1M24 68.5h1M26 68.5h1M28 68.5h1M31 68.5h1M35 68.5h1M36 68.5h1M37 68.5h1M39 68.5h1M42 68.5h1M43 68.5h1M44 68.5h1M47 68.5h1M48 68.5h1M49 68.5h1M52 68.5h1M53 68.5h1M57 68.5h1M60 68.5h1M61 68.5h1M63 68.5h1M65 68.5h1M68 68.5h1M69 68.5h1M70 68.5h1M73 68.5h1M78 68.5h1M79 68.5h1M81 68.5h1M83 68.5h1M85 68.5h1M86 68.5h1M87 68.5h1M93 68.5h1M94 68.5h1M96 68.5h1M97 68.5h1M98 68.5h1M9 69.5h1M10 69.5h1M15 69.5h1M25 69.5h1M29 69.5h1M30 69.5h1M40 69.5h1M44 69.5h1M45 69.5h1M46 69.5h1M62 69.5h1M65 69.5h1M70 69.5h1M90 69.5h1M96 69.5h1M98 69.5h1M99 69.5h1M7 70.5h1M8 70.5h1M10 70.5h1M20 70.5h1M22 70.5h1M24 70.5h1M32 70.5h1M44 70.5h1M49 70.5h1M50 70.5h1M60 70.5h1M69 70.5h1M73 70.5h1M80 70.5h1M83 70.5h1M90 70.5h1M98 70.5h1M10 71.5h1M11 71.5h1M13 71.5h1M24 71.5h1M30 71.5h1M40 71.5h1M41 71.5h1M45 71.5h1M50 71.5h1M52 71.5h1M61 71.5h1M70 71.5h1M85 71.5h1M88 71.5h1M0 72.5h1M13 72.5h1M20 72.5h1M30 72.5h1M38 72.5h1M40 72.5h1M50 72.5h1M60 72.5h1M70 72.5h1M77 72.5h1M80 72.5h1M82 72.5h1M84 72.5h1M90 72.5h1M93 72.5h1M8 73.5h1M10 73.5h1M20 73.5h1M30 73.5h1M40 73.5h1M45 73.5h1M69 73.5h1M70 73.5h1M74 73.5h1M81 73.5h1M84 73.5h1M90 73.5h1M9 74.5h1M10 74.5h1M20 74.5h1M28 74.5h1M40 74.5h1M46 74.5h1M48 74.5h1M50 74.5h1M62 74.5h1M80 74.5h1M4 75.5h1M10 75.5h1M15 75.5h1M20 75.5h1M30 75.5h1M36 75.5h1M40 75.5h1M41 75.5h1M43 75.5h1M45 75.5h1M46 75.5h1M47 75.5h1M53 75.5h1M72 75.5h1M73 75.5h1M74 75.5h1M75 75.5h1M77 75.5h1M86 75.5h1M90 75.5h1M1 76.5h1M13 76.5h1M20 76.5h1M22 76.5h1M34 76.5h1M36 76.5h1M40 76.5h1M52 76.5h1M70 76.5h1M79 76.5h1M90 76.5h1M1 77.5h1M9 77.5h1M15 77.5h1M16 77.5h1M18 77.5h1M26 77.5h1M30 77.5h1M31 77.5h1M34 77.5h1M36 77.5h1M39 77.5h1M53 77.5h1M56 77.5h1M62 77.5h1M63 77.5h1M70 77.5h1M73 77.5h1M80 77.5h1M90 77.5h1M97 77.5h1M0 78.5h1M3 78.5h1M5 78.5h1M6 78.5h1M11 78.5h1M14 78.5h1M15 78.5h1M18 78.5h1M19 78.5h1M20 78.5h1M23 78.5h1M25 78.5h1M28 78.5h1M31 78.5h1M33 78.5h1M34 78.5h1M35 78.5h1M37 78.5h1M38 78.5h1M41 78.5h1M50 78.5h1M51 78.5h1M52 78.5h1M54 78.5h1M58 78.5h1M59 78.5h1M61 78.5h1M62 78.5h1M63 78.5h1M64 78.5h1M67 78.5h1M68 78.5h1M73 78.5h1M75 78.5h1M78 78.5h1M79 78.5h1M81 78.5h1M82 78.5h1M83 78.5h1M85 78.5h1M88 78.5h1M92 78.5h1M93 78.5h1M94 78.5h1M97 78.5h1M98 78.5h1M10 79.5h1M20 79.5h1M26 79.5h1M30 79.5h1M40 79.5h1M50 79.5h1M53 79.5h1M58 79.5h1M60 79.5h1M70 79.5h1M72 79.5h1M82 79.5h1M92 79.5h1M13 80.5h1M20 80.5h1M50 80.5h1M53 80.5h1M62 80.5h1M70 80.5h1M80 80.5h1M84 80.5h1M90 80.5h1M1 81.5h1M4 81.5h1M10 81.5h1M12 81.5h1M18 81.5h1M20 81.5h1M24 81.5h1M28 81.5h1M30 81.5h1M35 81.5h1M36 81.5h1M38 81.5h1M40 81.5h1M44 81.5h1M50 81.5h1M60 81.5h1M70 81.5h1M87 81.5h1M98 81.5h1M99 81.5h1M1 82.5h1M8 82.5h1M10 82.5h1M12 82.5h1M27 82.5h1M40 82.5h1M50 82.5h1M53 82.5h1M56 82.5h1M60 82.5h1M80 82.5h1M84 82.5h1M87 82.5h1M88 82.5h1M90 82.5h1M99 82.5h1M7 83.5h1M10 83.5h1M13 83.5h1M20 83.5h1M21 83.5h1M28 83.5h1M30 83.5h1M43 83.5h1M48 83.5h1M49 83.5h1M50 83.5h1M60 83.5h1M63 83.5h1M70 83.5h1M72 83.5h1M80 83.5h1M89 83.5h1M90 83.5h1M10 84.5h1M13 84.5h1M14 84.5h1M21 84.5h1M23 84.5h1M25 84.5h1M40 84.5h1M43 84.5h1M48 84.5h1M56 84.5h1M59 84.5h1M63 84.5h1M69 84.5h1M80 84.5h1M86 84.5h1M87 84.5h1M4 85.5h1M12 85.5h1M15 85.5h1M20 85.5h1M30 85.5h1M34 85.5h1M46 85.5h1M48 85.5h1M50 85.5h1M57 85.5h1M70 85.5h1M83 85.5h1M84 85.5h1M86 85.5h1M91 85.5h1M95 85.5h1M98 85.5h1M10 86.5h1M30 86.5h1M34 86.5h1M39 86.5h1M40 86.5h1M49 86.5h1M50 86.5h1M57 86.5h1M65 86.5h1M70 86.5h1M77 86.5h1M80 86.5h1M1 87.5h1M10 87.5h1M14 87.5h1M15 87.5h1M22 87.5h1M38 87.5h1M40 87.5h1M41 87.5h1M43 87.5h1M46 87.5h1M60 87.5h1M69 87.5h1M72 87.5h1M80 87.5h1M99 87.5h1M0 88.5h1M1 88.5h1M3 88.5h1M4 88.5h1M5 88.5h1M6 88.5h1M7 88.5h1M9 88.5h1M12 88.5h1M17 88.5h1M18 88.5h1M19 88.5h1M21 88.5h1M24 88.5h1M25 88.5h1M26 88.5h1M27 88.5h1M28 88.5h1M29 88.5h1M31 88.5h1M36 88.5h1M37 88.5h1M38 88.5h1M42 88.5h1M43 88.5h1M45 88.5h1M46 88.5h1M48 88.5h1M49 88.5h1M52 88.5h1M56 88.5h1M59 88.5h1M62 88.5h1M72 88.5h1M73 88.5h1M79 88.5h1M84 88.5h1M86 88.5h1M87 88.5h1M88 88.5h1M92 88.5h1M93 88.5h1M96 88.5h1M97 88.5h1M98 88.5h1M99 88.5h1M0 89.5h1M1 89.5h1M2 89.5h1M10 89.5h1M20 89.5h1M23 89.5h1M30 89.5h1M35 89.5h1M37 89.5h1M40 89.5h1M41 89.5h1M52 89.5h1M60 89.5h1M68 89.5h1M70 89.5h1M80 89.5h1M90 89.5h1M95 89.5h1M4 90.5h1M10 90.5h1M14 90.5h1M15 90.5h1M20 90.5h1M22 90.5h1M40 90.5h1M50 90.5h1M60 90.5h1M62 90.5h1M65 90.5h1M70 90.5h1M80 90.5h1M90 90.5h1M94 90.5h1M8 91.5h1M13 91.5h1M20 91.5h1M29 91.5h1M30 91.5h1M31 91.5h1M48 91.5h1M50 91.5h1M52 91.5h1M55 91.5h1M63 91.5h1M65 91.5h1M71 91.5h1M76 91.5h1M80 91.5h1M96 91.5h1M7 92.5h1M10 92.5h1M18 92.5h1M20 92.5h1M26 92.5h1M30 92.5h1M47 92.5h1M49 92.5h1M50 92.5h1M51 92.5h1M70 92.5h1M72 92.5h1M86 92.5h1M89 92.5h1M90 92.5h1M10 93.5h1M20 93.5h1M30 93.5h1M39 93.5h1M40 93.5h1M42 93.5h1M44 93.5h1M50 93.5h1M53 93.5h1M57 93.5h1M59 93.5h1M67 93.5h1M70 93.5h1M89 93.5h1M90 93.5h1M2 94.5h1M6 94.5h1M10 94.5h1M34 94.5h1M36 94.5h1M50 94.5h1M63 94.5h1M66 94.5h1M80 94.5h1M81 94.5h1M90 94.5h1M3 95.5h1M8 95.5h1M10 95.5h1M20 95.5h1" stroke="#d38f20"/>
<path d="M12 0.5h1M19 0.5h1M76 0.5h1M90 0.5h1M99 0.5h1M22 1.5h1M38 1.5h1M62 1.5h1M69 1.5h1M71 1.5h1M82 1.5h1M88 1.5h1M95 1.5h1M5 2.5h1M50 2.5h1M67 2.5h1M70 2.5h1M10 3.5h1M20 3.5h1M32 3.5h1M40 3.5h1M53 3.5h1M82 3.5h1M6 4.5h1M10 4.5h1M11 4.5h1M16 4.5h1M20 4.5h1M60 4.5h1M65 4.5h1M80 4.5h1M90 4.5h1M92 4.5h1M1 5.5h1M40 5.5h1M50 5.5h1M64 5.5h1M80 5.5h1M15 6.5h1M33 6.5h1M60 6.5h1M70 6.5h1M86 6.5h1M88 6.5h1M7 7.5h1M10 7.5h1M11 7.5h1M20 7.5h1M50 7.5h1M57 7.5h1M60 7.5h1M73 7.5h1M80 7.5h1M1 8.5h1M7 8.5h1M10 8.5h1M13 8.5h1M15 8.5h1M17 8.5h1M33 8.5h1M37 8.5h1M38 8.5h1M52 8.5h1M56 8.5h1M58 8.5h1M75 8.5h1M84 8.5h1M85 8.5h1M86 8.5h1M87 8.5h1M89 8.5h1M91 8.5h1M99 8.5h1M7 9.5h1M21 9.5h1M33 9.5h1M41 9.5h1M45 9.5h1M48 9.5h1M70 9.5h1M17 10.5h1M30 10.5h1M40 10.5h1M56 10.5h1M82 10.5h1M21 11.5h1M39 11.5h1M70 11.5h1M80 11.5h1M86 11.5h1M95 11.5h1M50 12.5h1M75 12.5h1M87 12.5h1M88 12.5h1M30 13.5h1M40 13.5h1M50 13.5h1M51 13.5h1M70 13.5h1M84 13.5h1M88 13.5h1M15 14.5h1M40 14.5h1M80 14.5h1M54 15.5h1M70 15.5h1M81 15.5h1M95 15.5h1M10 16.5h1M30 16.5h1M90 16.5h1M17 17.5h1M47 17.5h1M50 17.5h1M54 17.5h1M70 17.5h1M73 17.5h1M20 18.5h1M25 18.5h1M42 18.5h1M50 18.5h1M57 18.5h1M60 18.5h1M80 18.5h1M90 18.5h1M97 18.5h1M2 19.5h1M20 19.5h1M36 19.5h1M40 19.5h1M46 19.5h1M49 19.5h1M57 19.5h1M60 19.5h1M72 19.5h1M80 19.5h1M87 19.5h1M89 19.5h1M1 20.5h1M6 20.5h1M16 20.5h1M26 20.5h1M40 20.5h1M54 20.5h1M90 20.5h1M95 20.5h1M22 21.5h1M24 21.5h1M28 21.5h1M29 21.5h1M30 21.5h1M32 21.5h1M62 21.5h1M10 22.5h1M66 22.5h1M89 22.5h1M90 22.5h1M98 22.5h1M30 23.5h1M58 23.5h1M0 24.5h1M10 24.5h1M13 24.5h1M30 24.5h1M52 24.5h1M55 24.5h1M59 24.5h1M60 24.5h1M61 24.5h1M89 24.5h1M90 24.5h1M9 25.5h1M16 25.5h1M30 25.5h1M36 25.5h1M40 25.5h1M47 25.5h1M48 25.5h1M90 25.5h1M92 25.5h1M18 26.5h1M32 26.5h1M40 26.5h1M43 26.5h1M57 26.5h1M58 26.5h1M77 26.5h1M84 26.5h1M1 27.5h1M10 27.5h1M20 27.5h1M39 27.5h1M40 27.5h1M56 27.5h1M60 27.5h1M62 27.5h1M89 27.5h1M90 27.5h1M94 27.5h1M35 28.5h1M37 28.5h1M38 28.5h1M39 28.5h1M54 28.5h1M56 28.5h1M75 28.5h1M82 28.5h1M86 28.5h1M92 28.5h1M4 29.5h1M20 29.5h1M23 29.5h1M28 29.5h1M30 29.5h1M60 29.5h1M1 30.5h1M11 30.5h1M20 30.5h1M25 30.5h1M40 30.5h1M50 30.5h1M75 30.5h1M85 30.5h1M10 31.5h1M12 31.5h1M20 31.5h1M22 31.5h1M60 31.5h1M65 31.5h1M69 31.5h1M90 31.5h1M96 31.5h1M10 32.5h1M20 32.5h1M34 32.5h1M36 32.5h1M43 32.5h1M45 32.5h1M57 32.5h1M60 32.5h1M65 32.5h1M70 32.5h1M73 32.5h1M82 32.5h1M87 32.5h1M9 33.5h1M20 33.5h1M21 33.5h1M22 33.5h1M24 33.5h1M27 33.5h1M31 33.5h1M33 33.5h1M40 33.5h1M50 33.5h1M54 33.5h1M64 33.5h1M90 33.5h1M1 34.5h1M10 34.5h1M20 34.5h1M36 34.5h1M50 34.5h1M80 34.5h1M87 34.5h1M93 34.5h1M10 35.5h1M13 35.5h1M14 35.5h1M20 35.5h1M32 35.5h1M40 35.5h1M70 35.5h1M81 35.5h1M82 35.5h1M2 36.5h1M5 36.5h1M10 36.5h1M11 36.5h1M15 36.5h1M20 36.5h1M21 36.5h1M40 36.5h1M50 36.5h1M70 36.5h1M73 36.5h1M75 36.5h1M80 36.5h1M81 36.5h1M87 36.5h1M0 37.5h1M10 37.5h1M17 37.5h1M19 37.5h1M22 37.5h1M30 37.5h1M50 37.5h1M70 37.5h1M80 37.5h1M88 37.5h1M90 37.5h1M96 37.5h1M0 38.5h1M1 38.5h1M8 38.5h1M17 38.5h1M25 38.5h1M27 38.5h1M30 38.5h1M31 38.5h1M34 38.5h1M37 38.5h1M41 38.5h1M42 38.5h1M51 38.5h1M53 38.5h1M59 38.5h1M63 38.5h1M77 38.5h1M79 38.5h1M88 38.5h1M94 38.5h1M96 38.5h1M10 39.5h1M12 39.5h1M16 39.5h1M29 39.5h1M30 39.5h1M32 39.5h1M44 39.5h1M60 39.5h1M62 39.5h1M70 39.5h1M85 39.5h1M86 39.5h1M87 39.5h1M10 40.5h1M20 40.5h1M28 40.5h1M44 40.5h1M45 40.5h1M48 40.5h1M50 40.5h1M55 40.5h1M56 40.5h1M66 40.5h1M80 40.5h1M89 40.5h1M90 40.5h1M98 40.5h1M10 41.5h1M18 41.5h1M19 41.5h1M26 41.5h1M64 41.5h1M78 41.5h1M90 41.5h1M91 41.5h1M6 42.5h1M10 42.5h1M17 42.5h1M30 42.5h1M32 42.5h1M34 42.5h1M40 42.5h1M10 43.5h1M20 43.5h1M28 43.5h1M43 43.5h1M45 43.5h1M50 43.5h1M60 43.5h1M65 43.5h1M80 43.5h1M30 44.5h1M35 44.5h1M37 44.5h1M48 44.5h1M49 44.5h1M50 44.5h1M60 44.5h1M62 44.5h1M67 44.5h1M80 44.5h1M93 44.5h1M8 45.5h1M10 45.5h1M26 45.5h1M50 45.5h1M90 45.5h1M92 45.5h1M11 46.5h1M33 46.5h1M47 46.5h1M70 46.5h1M88 46.5h1M37 47.5h1M39 47.5h1M54 47.5h1M70 47.5h1M74 47.5h1M0 48.5h1M1 48.5h1M7 48.5h1M9 48.5h1M10 48.5h1M11 48.5h1M13 48.5h1M14 48.5h1M18 48.5h1M19 48.5h1M25 48.5h1M28 48.5h1M37 48.5h1M43 48.5h1M52 48.5h1M53 48.5h1M55 48.5h1M72 48.5h1M73 48.5h1M79 48.5h1M83 48.5h1M84 48.5h1M93 48.5h1M98 48.5h1M99 48.5h1M15 49.5h1M34 49.5h1M49 49.5h1M60 49.5h1M80 49.5h1M85 49.5h1M4 50.5h1M17 50.5h1M55 51.5h1M57 51.5h1M13 52.5h1M90 52.5h1M8 53.5h1M23 53.5h1M27 53.5h1M0 54.5h1M61 54.5h1M2 55.5h1M7 55.5h1M9 55.5h1M12 55.5h1M8 56.5h1M19 56.5h1M28 56.5h1M72 56.5h1M75 56.5h1M77 56.5h1M60 57.5h1M6 58.5h1M10 58.5h1M12 58.5h1M30 58.5h1M82 58.5h1M88 58.5h1M90 58.5h1M92 58.5h1M70 59.5h1M80 61.5h1M5 62.5h1M83 62.5h1M6 63.5h1M77 63.5h1M54 64.5h1M56 64.5h1M70 64.5h1M73 64.5h1M88 64.5h1M56 65.5h1M30 95.5h1M38 95.5h1M6 96.5h1M28 96.5h1M52 96.5h1M58 96.5h1M55 97.5h1M2 98.5h1M20 98.5h1M30 98.5h1M31 98.5h1M40 98.5h1M54 98.5h1M60 98.5h1M61 98.5h1M65 98.5h1M70 98.5h1M90 98.5h1M10 99.5h1M77 99.5h1M16 100.5h1M40 100.5h1M55 100.5h1M56 100.5h1M61 100.5h1M64 100.5h1M89 100.5h1M8 101.5h1M10 101.5h1M11 101.5h1M20 102.5h1M39 102.5h1M90 103.5h1M5 104.5h1M21 104.5h1M0 105.5h1M33 105.5h1M47 105.5h1M2 107.5h1M12 107.5h1M18 107.5h1M28 107.5h1M40 107.5h1M67 107.5h1M6 108.5h1M11 108.5h1M12 108.5h1M13 108.5h1M19 108.5h1M23 108.5h1M55 108.5h1M57 108.5h1M58 108.5h1M60 108.5h1M70 108.5h1M88 108.5h1M90 108.5h1M34 109.5h1M22 110.5h1M28 111.5h1M68 112.5h1M70 112.5h1M10 113.5h1M13 113.5h1M77 113.5h1M34 114.5h1M60 114.5h1M64 114.5h1M70 114.5h1M71 114.5h1M60 115.5h1M9 116.5h1M10 116.5h1M46 116.5h1M62 116.5h1M71 116.5h1M82 116.5h1M11 117.5h1M3 118.5h1M15 118.5h1M20 118.5h1M21 118.5h1M30 118.5h1M60 118.5h1M62 118.5h1M73 118.5h1M88 118.5h1M97 118.5h1M1 119.5h1M45 119.5h1M63 119.5h1M72 120.5h1M0 121.5h1M40 121.5h1M40 122.5h1M60 122.5h1M10 123.5h1M12 123.5h1M59 123.5h1M9 124.5h1M74 124.5h1M97 124.5h1M16 125.5h1M23 125.5h1M30 125.5h1M59 125.5h1M75 125.5h1M94 125.5h1M42 126.5h1M65 126.5h1M70 126.5h1M75 126.5h1M90 126.5h1M96 126.5h1M20 127.5h1M50 127.5h1M3 128.5h1M11 128.5h1M15 128.5h1M22 128.5h1M25 128.5h1M26 128.5h1M27 128.5h1M33 128.5h1M34 128.5h1M35 128.5h1M41 128.5h1M42 128.5h1M48 128.5h1M51 128.5h1M57 128.5h1M58 128.5h1M59 128.5h1M61 128.5h1M66 128.5h1M67 128.5h1M72 128.5h1M73 128.5h1M74 128.5h1M83 128.5h1M92 128.5h1M99 128.5h1M4 129.5h1M16 129.5h1M40 129.5h1M48 129.5h1M69 129.5h1M77 129.5h1M94 129.5h1M97 129.5h1M17 130.5h1M19 130.5h1M20 130.5h1M26 130.5h1M70 130.5h1M27 131.5h1M37 131.5h1M61 131.5h1M63 131.5h1M64 131.5h1M81 131.5h1M84 131.5h1M86 131.5h1M97 131.5h1M14 132.5h1M54 132.5h1M60 132.5h1M74 132.5h1M80 132.5h1M19 133.5h1M20 133.5h1M28 133.5h1M35 133.5h1M82 133.5h1M36 134.5h1M57 134.5h1M69 134.5h1M80 134.5h1M14 135.5h1M20 135.5h1M31 135.5h1M33 135.5h1M56 135.5h1M70 135.5h1M80 135.5h1M10 136.5h1M32 136.5h1M70 136.5h1M5 137.5h1M6 137.5h1M20 137.5h1M30 137.5h1M40 137.5h1M43 137.5h1M50 137.5h1M76 137.5h1M1 138.5h1M2 138.5h1M4 138.5h1M6 138.5h1M9 138.5h1M10 138.5h1M13 138.5h1M14 138.5h1M15 138.5h1M18 138.5h1M32 138.5h1M38 138.5h1M40 138.5h1M46 138.5h1M48 138.5h1M54 138.5h1M60 138.5h1M70 138.5h1M71 138.5h1M77 138.5h1M92 138.5h1M97 138.5h1M7 139.5h1M21 139.5h1M50 139.5h1M70 139.5h1M80 139.5h1M20 140.5h1M24 140.5h1M35 140.5h1M37 140.5h1M40 140.5h1M59 140.5h1M20 141.5h1M56 141.5h1M60 141.5h1M89 141.5h1M10 142.5h1M20 142.5h1M40 142.5h1M47 142.5h1M58 142.5h1M62 142.5h1M63 142.5h1M64 142.5h1M68 142.5h1M13 143.5h1M20 143.5h1M23 143.5h1M60 143.5h1M73 143.5h1M79 143.5h1M22 144.5h1M26 144.5h1M30 144.5h1M41 144.5h1M46 144.5h1M63 144.5h1M72 144.5h1M92 144.5h1M30 145.5h1M36 145.5h1M40 145.5h1M80 145.5h1M83 145.5h1M12 146.5h1M20 146.5h1M27 146.5h1M35 146.5h1M68 146.5h1M11 147.5h1M20 147.5h1M21 147.5h1M39 147.5h1M50 147.5h1M56 147.5h1M80 147.5h1M2 148.5h1M11 148.5h1M18 148.5h1M20 148.5h1M30 148.5h1M37 148.5h1M50 148.5h1M70 148.5h1M80 148.5h1M99 148.5h1" stroke="#3d7236"/>
<path d="M90 65.5h1M7 66.5h1M61 66.5h1M63 66.5h1M66 66.5h1M14 67.5h1M54 67.5h1M78 67.5h1M88 67.5h1M7 68.5h1M10 68.5h1M22 68.5h1M27 68.5h1M40 68.5h1M45 68.5h1M50 68.5h1M59 68.5h1M66 68.5h1M71 68.5h1M72 68.5h1M80 68.5h1M82 68.5h1M88 68.5h1M90 68.5h1M91 68.5h1M28 69.5h1M35 69.5h1M53 69.5h1M60 69.5h1M80 69.5h1M97 69.5h1M16 70.5h1M26 70.5h1M30 70.5h1M67 70.5h1M70 70.5h1M71 70.5h1M0 71.5h1M22 71.5h1M48 71.5h1M51 71.5h1M55 71.5h1M60 71.5h1M73 71.5h1M90 71.5h1M10 72.5h1M58 72.5h1M98 72.5h1M11 73.5h1M60 73.5h1M71 73.5h1M4 74.5h1M15 74.5h1M26 74.5h1M30 74.5h1M57 74.5h1M60 74.5h1M61 74.5h1M70 74.5h1M87 74.5h1M1 75.5h1M51 75.5h1M83 75.5h1M2 76.5h1M30 76.5h1M49 76.5h1M60 76.5h1M80 76.5h1M85 76.5h1M8 77.5h1M10 77.5h1M20 77.5h1M40 77.5h1M41 77.5h1M46 77.5h1M50 77.5h1M51 77.5h1M60 77.5h1M4 78.5h1M12 78.5h1M17 78.5h1M30 78.5h1M40 78.5h1M43 78.5h1M70 78.5h1M76 78.5h1M80 78.5h1M41 79.5h1M57 79.5h1M64 79.5h1M80 79.5h1M85 79.5h1M86 79.5h1M90 79.5h1M2 80.5h1M3 80.5h1M10 80.5h1M40 80.5h1M60 80.5h1M66 80.5h1M87 80.5h1M80 81.5h1M85 81.5h1M89 81.5h1M90 81.5h1M97 81.5h1M2 82.5h1M43 82.5h1M68 82.5h1M70 82.5h1M83 82.5h1M9 83.5h1M22 83.5h1M59 83.5h1M67 83.5h1M71 83.5h1M79 83.5h1M20 84.5h1M22 84.5h1M35 84.5h1M60 84.5h1M10 85.5h1M24 85.5h1M26 85.5h1M36 85.5h1M47 85.5h1M49 85.5h1M60 85.5h1M79 85.5h1M80 85.5h1M90 85.5h1M52 86.5h1M73 86.5h1M88 86.5h1M42 87.5h1M50 87.5h1M67 87.5h1M90 87.5h1M10 88.5h1M15 88.5h1M20 88.5h1M30 88.5h1M60 88.5h1M66 88.5h1M67 88.5h1M76 88.5h1M78 88.5h1M80 88.5h1M83 88.5h1M50 89.5h1M97 89.5h1M43 90.5h1M71 90.5h1M79 90.5h1M10 91.5h1M11 91.5h1M21 91.5h1M25 91.5h1M32 91.5h1M39 91.5h1M66 91.5h1M68 91.5h1M70 91.5h1M85 91.5h1M90 91.5h1M65 92.5h1M74 92.5h1M85 92.5h1M9 93.5h1M13 93.5h1M21 93.5h1M23 93.5h1M32 93.5h1M80 93.5h1M3 94.5h1M20 94.5h1M24 94.5h1M30 94.5h1M40 94.5h1M45 94.5h1M70 94.5h1M17 95.5h1" stroke="#d99726"/>
<path d="M79 0.5h1M60 2.5h1M0 3.5h1M33 3.5h1M20 5.5h1M70 5.5h1M7 6.5h1M20 6.5h1M22 6.5h1M30 6.5h1M68 6.5h1M3 7.5h1M30 7.5h1M45 7.5h1M76 7.5h1M0 8.5h1M2 8.5h1M20 8.5h1M21 8.5h1M28 8.5h1M30 8.5h1M40 8.5h1M88 8.5h1M1 9.5h1M70 10.5h1M80 10.5h1M90 10.5h1M10 11.5h1M44 11.5h1M55 11.5h1M60 11.5h1M10 12.5h1M20 12.5h1M99 13.5h1M49 14.5h1M60 14.5h1M30 15.5h1M33 16.5h1M60 16.5h1M97 17.5h1M2 18.5h1M40 18.5h1M52 18.5h1M59 18.5h1M64 18.5h1M85 18.5h1M13 19.5h1M34 19.5h1M50 19.5h1M70 19.5h1M86 19.5h1M88 19.5h1M90 19.5h1M7 20.5h1M20 20.5h1M62 20.5h1M76 20.5h1M94 20.5h1M31 21.5h1M65 21.5h1M67 21.5h1M8 23.5h1M70 23.5h1M2 24.5h1M15 24.5h1M97 24.5h1M24 25.5h1M46 25.5h1M60 25.5h1M11 26.5h1M15 26.5h1M22 27.5h1M32 27.5h1M45 27.5h1M73 27.5h1M0 28.5h1M7 28.5h1M24 28.5h1M32 28.5h1M33 28.5h1M36 28.5h1M41 28.5h1M43 28.5h1M45 28.5h1M49 28.5h1M55 28.5h1M58 28.5h1M59 28.5h1M60 28.5h1M62 28.5h1M63 28.5h1M64 28.5h1M66 28.5h1M72 28.5h1M78 28.5h1M87 28.5h1M88 28.5h1M89 28.5h1M91 28.5h1M94 28.5h1M36 29.5h1M51 29.5h1M80 29.5h1M98 29.5h1M5 30.5h1M30 30.5h1M31 30.5h1M43 30.5h1M62 30.5h1M83 30.5h1M84 30.5h1M5 31.5h1M30 31.5h1M45 31.5h1M57 31.5h1M70 31.5h1M80 31.5h1M44 32.5h1M50 32.5h1M59 32.5h1M79 32.5h1M90 32.5h1M30 33.5h1M44 33.5h1M60 33.5h1M70 33.5h1M71 33.5h1M77 33.5h1M16 34.5h1M48 34.5h1M61 34.5h1M66 34.5h1M70 34.5h1M88 34.5h1M90 34.5h1M58 35.5h1M65 35.5h1M17 36.5h1M25 36.5h1M30 36.5h1M54 36.5h1M60 36.5h1M90 36.5h1M12 37.5h1M29 37.5h1M60 37.5h1M76 37.5h1M20 38.5h1M33 38.5h1M40 38.5h1M50 38.5h1M60 38.5h1M70 38.5h1M82 38.5h1M90 38.5h1M91 38.5h1M90 39.5h1M26 40.5h1M40 40.5h1M70 40.5h1M35 41.5h1M50 41.5h1M65 41.5h1M93 41.5h1M16 42.5h1M22 42.5h1M38 42.5h1M59 42.5h1M80 42.5h1M96 43.5h1M73 44.5h1M87 44.5h1M0 45.5h1M60 46.5h1M65 46.5h1M20 48.5h1M21 48.5h1M30 48.5h1M40 48.5h1M50 48.5h1M57 48.5h1M58 48.5h1M60 48.5h1M64 48.5h1M69 48.5h1M70 48.5h1M81 48.5h1M10 51.5h1M24 55.5h1M64 55.5h1M25 56.5h1M70 56.5h1M6 57.5h1M1 58.5h1M5 58.5h1M39 58.5h1M43 58.5h1M60 58.5h1M69 58.5h1M70 58.5h1M76 58.5h1M60 60.5h1M79 61.5h1M10 64.5h1M91 96.5h1M50 97.5h1M34 98.5h1M43 98.5h1M79 98.5h1M87 98.5h1M97 98.5h1M50 99.5h1M90 99.5h1M90 102.5h1M99 102.5h1M20 105.5h1M60 105.5h1M10 108.5h1M15 108.5h1M20 108.5h1M50 108.5h1M51 108.5h1M53 108.5h1M40 109.5h1M92 109.5h1M20 110.5h1M30 111.5h1M40 113.5h1M50 114.5h1M50 116.5h1M87 117.5h1M17 118.5h1M41 118.5h1M53 118.5h1M20 120.5h1M21 120.5h1M90 120.5h1M50 121.5h1M46 123.5h1M55 123.5h1M10 125.5h1M74 125.5h1M12 126.5h1M37 126.5h1M40 127.5h1M2 128.5h1M4 128.5h1M7 128.5h1M8 128.5h1M9 128.5h1M16 128.5h1M17 128.5h1M19 128.5h1M21 128.5h1M39 128.5h1M44 128.5h1M46 128.5h1M52 128.5h1M55 128.5h1M64 128.5h1M65 128.5h1M71 128.5h1M75 128.5h1M76 128.5h1M77 128.5h1M81 128.5h1M86 128.5h1M89 128.5h1M94 128.5h1M20 129.5h1M29 129.5h1M88 129.5h1M96 129.5h1M22 130.5h1M38 130.5h1M90 130.5h1M91 130.5h1M99 130.5h1M1 131.5h1M7 131.5h1M10 131.5h1M70 131.5h1M2 133.5h1M96 133.5h1M9 134.5h1M41 134.5h1M0 135.5h1M4 135.5h1M38 135.5h1M50 135.5h1M94 135.5h1M98 135.5h1M40 136.5h1M85 136.5h1M0 137.5h1M10 137.5h1M47 137.5h1M70 137.5h1M88 137.5h1M20 138.5h1M22 138.5h1M28 138.5h1M30 138.5h1M65 138.5h1M90 138.5h1M2 139.5h1M20 139.5h1M61 139.5h1M74 139.5h1M21 141.5h1M64 141.5h1M49 142.5h1M90 142.5h1M4 143.5h1M10 143.5h1M26 143.5h1M62 143.5h1M11 144.5h1M29 144.5h1M77 144.5h1M90 144.5h1M0 145.5h1M8 145.5h1M87 147.5h1M3 148.5h1M21 148.5h1M90 148.5h1M94 148.5h1" stroke="#467c3e"/>
<path d="M96 67.5h1M30 68.5h1M67 68.5h1M74 68.5h1M31 70.5h1M38 71.5h1M42 75.5h1M80 75.5h1M5 76.5h1M86 77.5h1M7 78.5h1M10 78.5h1M55 78.5h1M60 78.5h1M84 78.5h1M87 78.5h1M40 83.5h1M50 84.5h1M51 84.5h1M70 84.5h1M40 85.5h1M60 86.5h1M21 87.5h1M44 87.5h1M68 87.5h1M82 87.5h1M40 88.5h1M54 88.5h1M70 88.5h1M94 88.5h1M52 90.5h1M1 92.5h1M40 92.5h1M60 92.5h1M80 92.5h1M60 94.5h1" stroke="#de9e2c"/>
<path d="M14 0.5h1M78 1.5h1M20 2.5h1M80 2.5h1M42 4.5h1M90 6.5h1M92 7.5h1M60 8.5h1M61 8.5h1M82 8.5h1M50 9.5h1M10 13.5h1M80 13.5h1M10 18.5h1M70 18.5h1M10 19.5h1M15 19.5h1M33 19.5h1M81 19.5h1M41 21.5h1M46 22.5h1M31 23.5h1M50 24.5h1M18 25.5h1M8 26.5h1M20 26.5h1M31 26.5h1M19 27.5h1M93 27.5h1M1 28.5h1M2 28.5h1M4 28.5h1M6 28.5h1M12 28.5h1M14 28.5h1M16 28.5h1M17 28.5h1M19 28.5h1M21 28.5h1M23 28.5h1M31 28.5h1M34 28.5h1M40 28.5h1M42 28.5h1M47 28.5h1M51 28.5h1M52 28.5h1M57 28.5h1M61 28.5h1M65 28.5h1M68 28.5h1M73 28.5h1M81 28.5h1M83 28.5h1M96 28.5h1M99 28.5h1M19 29.5h1M34 29.5h1M70 29.5h1M19 30.5h1M13 31.5h1M41 31.5h1M61 31.5h1M76 31.5h1M83 31.5h1M17 32.5h1M30 32.5h1M1 33.5h1M40 34.5h1M21 35.5h1M30 35.5h1M60 35.5h1M87 35.5h1M90 35.5h1M12 36.5h1M24 36.5h1M46 36.5h1M72 36.5h1M5 37.5h1M3 38.5h1M35 38.5h1M52 38.5h1M62 38.5h1M80 38.5h1M20 39.5h1M62 41.5h1M70 44.5h1M50 46.5h1M3 48.5h1M24 48.5h1M88 48.5h1M45 52.5h1M10 56.5h1M40 64.5h1M28 65.5h1M60 96.5h1M17 100.5h1M20 103.5h1M33 104.5h1M72 108.5h1M78 108.5h1M25 110.5h1M40 118.5h1M80 118.5h1M77 119.5h1M30 122.5h1M36 123.5h1M28 124.5h1M50 126.5h1M58 127.5h1M1 128.5h1M5 128.5h1M6 128.5h1M14 128.5h1M24 128.5h1M28 128.5h1M29 128.5h1M30 128.5h1M31 128.5h1M40 128.5h1M43 128.5h1M53 128.5h1M63 128.5h1M68 128.5h1M69 128.5h1M78 128.5h1M79 128.5h1M84 128.5h1M87 128.5h1M88 128.5h1M93 128.5h1M95 128.5h1M96 128.5h1M98 128.5h1M50 130.5h1M59 131.5h1M60 131.5h1M74 131.5h1M70 133.5h1M30 134.5h1M85 134.5h1M40 135.5h1M11 136.5h1M20 136.5h1M60 136.5h1M66 136.5h1M80 136.5h1M83 137.5h1M86 137.5h1M50 138.5h1M56 138.5h1M91 138.5h1M95 138.5h1M1 139.5h1M97 139.5h1M29 140.5h1M30 141.5h1M40 143.5h1M57 143.5h1M65 143.5h1M57 146.5h1M19 148.5h1M28 148.5h1M40 148.5h1M60 148.5h1M69 148.5h1" stroke="#578c4d"/>
<path d="M9 66.5h1M58 68.5h1M80 71.5h1M27 77.5h1M90 78.5h1M34 79.5h1M20 87.5h1M50 88.5h1M90 88.5h1M60 91.5h1" stroke="#e3a737"/>
<path d="M21 6.5h1M90 7.5h1M27 8.5h1M31 8.5h1M70 8.5h1M80 8.5h1M20 13.5h1M91 15.5h1M30 19.5h1M35 21.5h1M7 23.5h1M80 25.5h1M50 27.5h1M5 28.5h1M8 28.5h1M9 28.5h1M10 28.5h1M13 28.5h1M18 28.5h1M22 28.5h1M25 28.5h1M26 28.5h1M28 28.5h1M29 28.5h1M46 28.5h1M69 28.5h1M70 28.5h1M71 28.5h1M74 28.5h1M79 28.5h1M80 28.5h1M84 28.5h1M93 28.5h1M97 28.5h1M10 30.5h1M41 30.5h1M89 30.5h1M90 30.5h1M37 32.5h1M51 33.5h1M30 34.5h1M28 36.5h1M10 38.5h1M29 38.5h1M66 38.5h1M90 42.5h1M6 45.5h1M76 48.5h1M90 48.5h1M79 49.5h1M56 59.5h1M2 99.5h1M68 102.5h1M3 108.5h1M14 108.5h1M97 116.5h1M64 125.5h1M0 128.5h1M10 128.5h1M18 128.5h1M20 128.5h1M37 128.5h1M38 128.5h1M54 128.5h1M70 128.5h1M80 128.5h1M85 128.5h1M90 128.5h1M34 133.5h1M80 138.5h1M15 140.5h1M97 140.5h1M45 142.5h1M90 146.5h1M92 148.5h1" stroke="#699c5d"/>
<path d="M8 66.5h1M50 69.5h1M74 78.5h1" stroke="#e7af41"/>
<path d="M90 8.5h1M53 19.5h1M23 27.5h1M11 28.5h1M27 28.5h1M44 28.5h1M53 28.5h1M76 28.5h1M77 28.5h1M85 28.5h1M90 28.5h1M98 28.5h1M40 32.5h1M49 34.5h1M13 38.5h1M18 55.5h1M7 108.5h1M80 117.5h1M50 118.5h1M97 126.5h1M23 128.5h1M50 128.5h1M60 128.5h1M83 130.5h1M42 133.5h1M35 138.5h1M99 139.5h1M57 142.5h1M80 143.5h1" stroke="#7aac6c"/>
<path d="M31 11.5h1M3 28.5h1M15 28.5h1M20 28.5h1M50 28.5h1M70 30.5h1M69 37.5h1M10 98.5h1M13 112.5h1M97 128.5h1M61 130.5h1M7 138.5h1M64 143.5h1M93 145.5h1" stroke="#94c186"/>
<path d="M22 11.5h1M13 15.5h1M80 26.5h1M83 27.5h1M79 30.5h1M75 47.5h1M62 55.5h1M80 64.5h1M30 103.5h1M95 125.5h1M47 128.5h1M53 138.5h1M83 139.5h1M93 144.5h1" stroke="#aed7a0"/>
<path d="M11 22.5h1M72 25.5h1M59 27.5h1M30 28.5h1M48 28.5h1M95 28.5h1M84 32.5h1M80 48.5h1M40 62.5h1M62 128.5h1M82 128.5h1" stroke="#c8ecba"/></g>
</svg>
<div class="abs mono" style="left:536px;top:42px;color:#fff;text-shadow:1px 1px 0 #0a1408,-1px 0 0 #0a1408,0 -1px 0 #0a1408,1px 0 0 #0a1408,0 1px 0 #0a1408">140 : 964196</div>
<div class="abs title" id="index">INDEX</div>
</body></html>
